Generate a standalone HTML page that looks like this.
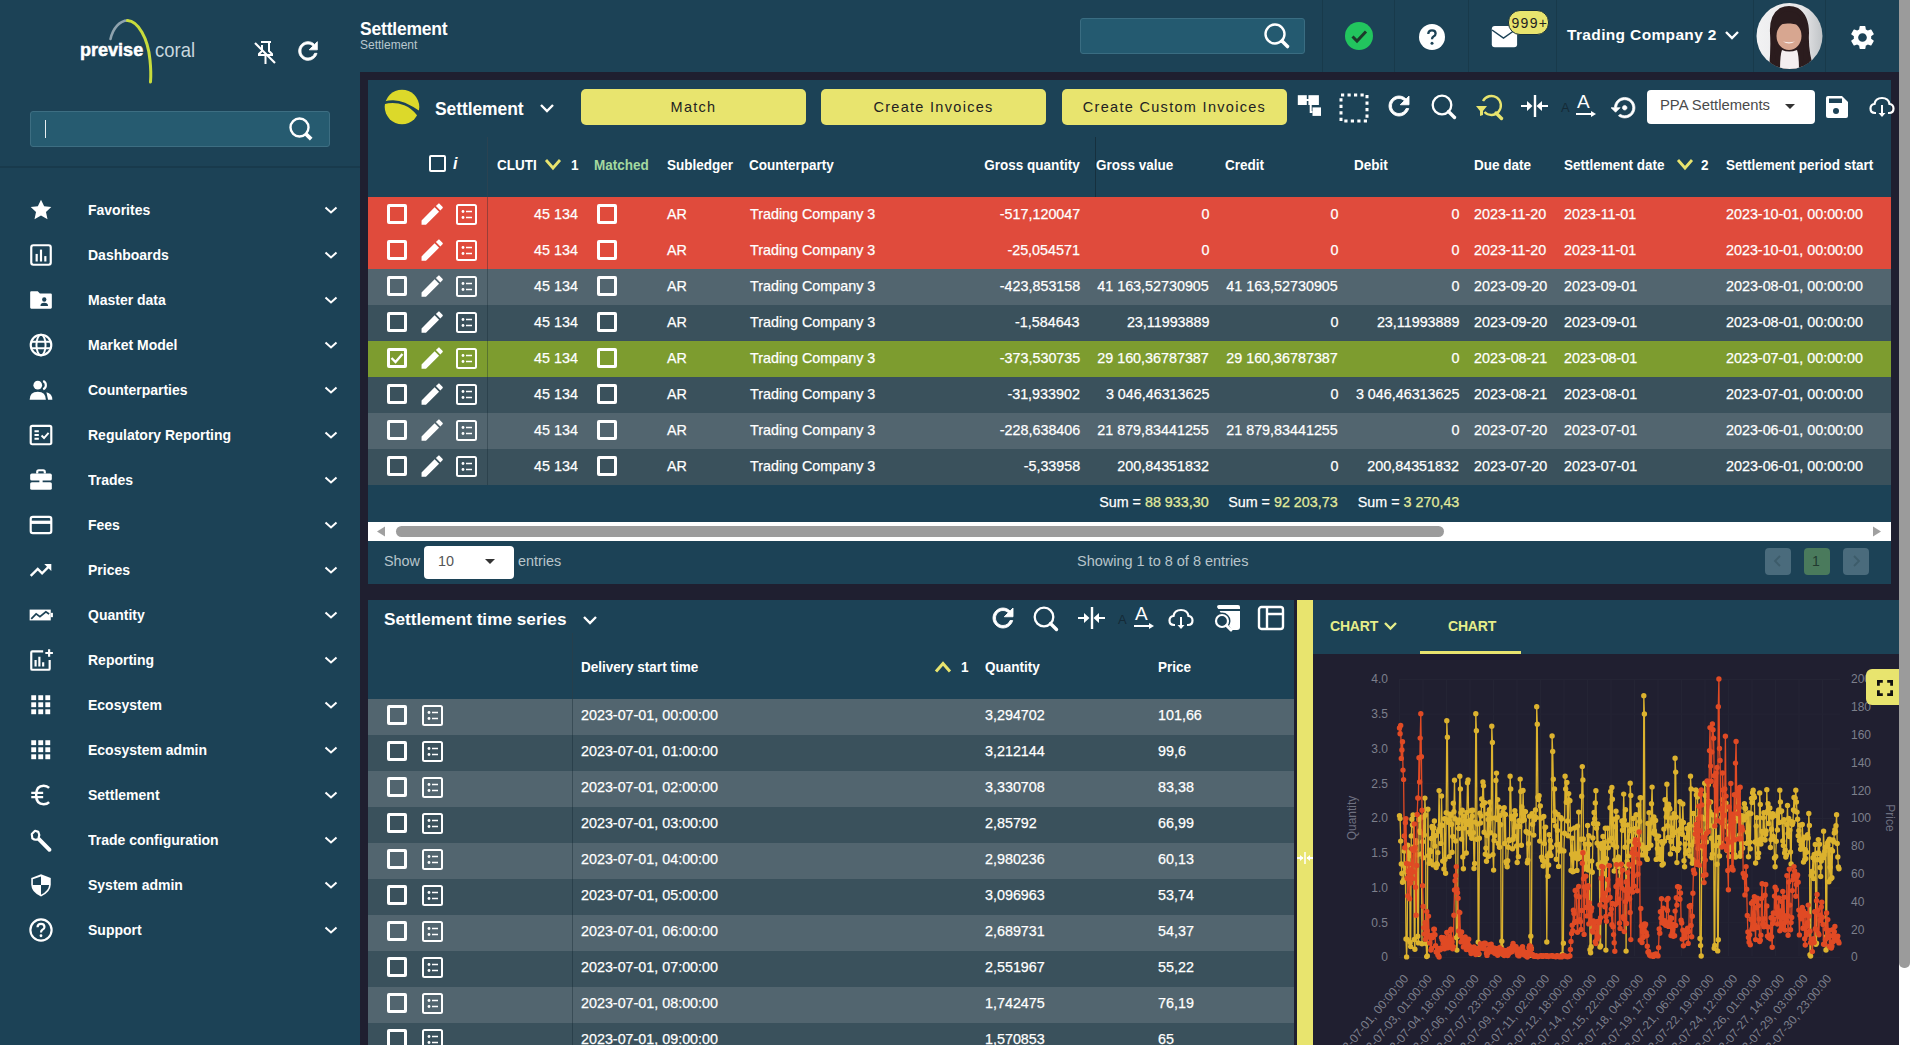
<!DOCTYPE html>
<html><head><meta charset="utf-8"><title>Settlement</title>
<style>
*{margin:0;padding:0;box-sizing:border-box}
html,body{width:1910px;height:1045px;overflow:hidden;background:#1c4256;font-family:"Liberation Sans",sans-serif;color:#fff}
.a{position:absolute}
svg{display:block}
.t{position:absolute;white-space:nowrap;line-height:1}
.r{font-size:15px;transform:scaleX(0.955);transform-origin:0 0;-webkit-text-stroke-width:0.25px}
.rr{font-size:15px;transform:scaleX(0.955);transform-origin:100% 0;-webkit-text-stroke-width:0.25px}
.h{font-size:14.7px;font-weight:bold;transform:scaleX(0.92);transform-origin:0 0}
.hr{font-size:14.7px;font-weight:bold;transform:scaleX(0.92);transform-origin:100% 0}
</style></head>
<body>
<div class="a" style="left:0;top:0;width:360px;height:1045px;background:#1c4256"></div><svg class="a" style="left:60px;top:10px" width="160" height="80" viewBox="0 0 160 80">
<path d="M50.5 29 C53 18 60 10.5 67.5 10.5" stroke="#8fa3ae" stroke-width="2.6" fill="none" stroke-linecap="round"/>
<path d="M67.5 10.5 C78 11 88 28 90 50 C91 60 91 66 90.5 72" stroke="#c8dc3c" stroke-width="3" fill="none" stroke-linecap="round"/>
</svg><div class="t" style="left:80px;top:40.4px;font-size:19.2px;font-weight:bold;color:#fff;transform:scaleX(0.94);transform-origin:0 0;-webkit-text-stroke-width:0.5px">previse</div><div class="t" style="left:154.5px;top:39.6px;font-size:20.3px;font-weight:normal;color:rgba(226,238,242,0.88);transform:scaleX(0.91);transform-origin:0 0">coral</div><svg class="a" style="left:252px;top:40px" width="26" height="26" viewBox="0 0 26 26">
<path d="M9 2 H19 M17 2 V11 L20 14 V15 H7 V14 L10 11 V5" stroke="#fff" stroke-width="2" fill="none"/>
<path d="M13.5 15 V24" stroke="#fff" stroke-width="2"/>
<path d="M3 3 L23 23" stroke="#fff" stroke-width="2.2"/>
</svg><svg class="a" style="left:294px;top:37.2px" width="28" height="28" viewBox="0 0 24 24">
<path fill="#fff" stroke="#fff" stroke-width="0.7" d="M17.65 6.35C16.2 4.9 14.21 4 12 4c-4.42 0-7.99 3.58-7.99 8s3.57 8 7.99 8c3.73 0 6.84-2.55 7.73-6h-2.08c-.82 2.33-3.04 4-5.65 4-3.31 0-6-2.69-6-6s2.69-6 6-6c1.66 0 3.14.69 4.22 1.78L13 11h7V4l-2.35 2.35z"/>
</svg><div class="a" style="left:30px;top:111px;width:300px;height:36px;background:#265b70;border:1px solid #3d6e82;border-radius:3px"></div><div class="a" style="left:44.5px;top:120px;width:1.5px;height:18px;background:#e8eef0"></div><svg class="a" style="left:287px;top:115px" width="28" height="28" viewBox="0 0 28 28">
<circle cx="12.5" cy="12.5" r="9" stroke="#fff" stroke-width="2.4" fill="none"/>
<path d="M18.8 18.8 L24.2 24.2" stroke="#fff" stroke-width="3.8"/>
</svg><div class="a" style="left:0;top:166px;width:360px;height:2px;background:#183a4c"></div><svg class="a" style="left:28px;top:197.0px" width="26" height="26" viewBox="0 0 24 24"><path d="M12 2.5 L14.9 8.6 L21.5 9.3 L16.6 13.8 L18 20.5 L12 17.1 L6 20.5 L7.4 13.8 L2.5 9.3 L9.1 8.6 Z" fill="#fff"/></svg><div class="t" style="left:88px;top:201.9px;font-size:15.3px;font-weight:bold;color:#fff;transform:scaleX(0.915);transform-origin:0 0">Favorites</div><svg class="a" style="left:324px;top:205.5px" width="14" height="9" viewBox="0 0 14 9"><path d="M1.5 1.5 L7 6.5 L12.5 1.5" stroke="#fff" stroke-width="2" fill="none"/></svg><svg class="a" style="left:28px;top:242.0px" width="26" height="26" viewBox="0 0 24 24"><rect x="3" y="3" width="18" height="18" rx="2" stroke="#fff" stroke-width="2" fill="none"/><rect x="7" y="11" width="2" height="7" fill="#fff"/><rect x="11" y="7" width="2" height="11" fill="#fff"/><rect x="15" y="13" width="2" height="5" fill="#fff"/></svg><div class="t" style="left:88px;top:246.9px;font-size:15.3px;font-weight:bold;color:#fff;transform:scaleX(0.915);transform-origin:0 0">Dashboards</div><svg class="a" style="left:324px;top:250.5px" width="14" height="9" viewBox="0 0 14 9"><path d="M1.5 1.5 L7 6.5 L12.5 1.5" stroke="#fff" stroke-width="2" fill="none"/></svg><svg class="a" style="left:28px;top:287.0px" width="26" height="26" viewBox="0 0 24 24"><path d="M2 5 Q2 4 3 4 H9 L11 6 H21 Q22 6 22 7 V19 Q22 20 21 20 H3 Q2 20 2 19 Z" fill="#fff"/><circle cx="15" cy="11.5" r="2" fill="#1c4256"/><path d="M11.5 17.5 Q11.5 14.5 15 14.5 Q18.5 14.5 18.5 17.5 Z" fill="#1c4256"/></svg><div class="t" style="left:88px;top:291.9px;font-size:15.3px;font-weight:bold;color:#fff;transform:scaleX(0.915);transform-origin:0 0">Master data</div><svg class="a" style="left:324px;top:295.5px" width="14" height="9" viewBox="0 0 14 9"><path d="M1.5 1.5 L7 6.5 L12.5 1.5" stroke="#fff" stroke-width="2" fill="none"/></svg><svg class="a" style="left:28px;top:332.0px" width="26" height="26" viewBox="0 0 24 24"><circle cx="12" cy="12" r="9.5" stroke="#fff" stroke-width="2" fill="none"/><ellipse cx="12" cy="12" rx="4.2" ry="9.5" stroke="#fff" stroke-width="1.8" fill="none"/><path d="M2.5 9 H21.5 M2.5 15 H21.5" stroke="#fff" stroke-width="1.8"/></svg><div class="t" style="left:88px;top:336.9px;font-size:15.3px;font-weight:bold;color:#fff;transform:scaleX(0.915);transform-origin:0 0">Market Model</div><svg class="a" style="left:324px;top:340.5px" width="14" height="9" viewBox="0 0 14 9"><path d="M1.5 1.5 L7 6.5 L12.5 1.5" stroke="#fff" stroke-width="2" fill="none"/></svg><svg class="a" style="left:28px;top:377.0px" width="26" height="26" viewBox="0 0 24 24"><circle cx="9" cy="7.5" r="4" fill="#fff"/><path d="M1.5 21 Q1.5 13.5 9 13.5 Q16.5 13.5 16.5 21 Z" fill="#fff"/><path d="M14 3.8 A4 4 0 0 1 14 11.2" stroke="#fff" stroke-width="2" fill="none"/><path d="M17 14 Q22.5 15 22.5 21 H18.5" fill="#fff"/></svg><div class="t" style="left:88px;top:381.9px;font-size:15.3px;font-weight:bold;color:#fff;transform:scaleX(0.915);transform-origin:0 0">Counterparties</div><svg class="a" style="left:324px;top:385.5px" width="14" height="9" viewBox="0 0 14 9"><path d="M1.5 1.5 L7 6.5 L12.5 1.5" stroke="#fff" stroke-width="2" fill="none"/></svg><svg class="a" style="left:28px;top:422.0px" width="26" height="26" viewBox="0 0 24 24"><rect x="2.5" y="3.5" width="19" height="17" rx="1.5" stroke="#fff" stroke-width="2" fill="none"/><path d="M6 8.5 H10 M6 12 H10 M6 15.5 H10" stroke="#fff" stroke-width="1.8"/><path d="M12.5 12.5 L14.8 14.8 L19 10" stroke="#fff" stroke-width="1.8" fill="none"/></svg><div class="t" style="left:88px;top:426.9px;font-size:15.3px;font-weight:bold;color:#fff;transform:scaleX(0.915);transform-origin:0 0">Regulatory Reporting</div><svg class="a" style="left:324px;top:430.5px" width="14" height="9" viewBox="0 0 14 9"><path d="M1.5 1.5 L7 6.5 L12.5 1.5" stroke="#fff" stroke-width="2" fill="none"/></svg><svg class="a" style="left:28px;top:467.0px" width="26" height="26" viewBox="0 0 24 24"><path d="M8.5 6 V4.5 Q8.5 3 10 3 H14 Q15.5 3 15.5 4.5 V6" stroke="#fff" stroke-width="2" fill="none"/><rect x="2" y="6" width="20" height="6.5" rx="1.5" fill="#fff"/><rect x="2" y="14" width="20" height="7" rx="1.5" fill="#fff"/><rect x="10.5" y="11.5" width="3" height="3.5" fill="#fff"/></svg><div class="t" style="left:88px;top:471.9px;font-size:15.3px;font-weight:bold;color:#fff;transform:scaleX(0.915);transform-origin:0 0">Trades</div><svg class="a" style="left:324px;top:475.5px" width="14" height="9" viewBox="0 0 14 9"><path d="M1.5 1.5 L7 6.5 L12.5 1.5" stroke="#fff" stroke-width="2" fill="none"/></svg><svg class="a" style="left:28px;top:512.0px" width="26" height="26" viewBox="0 0 24 24"><rect x="2.5" y="4.5" width="19" height="15" rx="2" stroke="#fff" stroke-width="2" fill="none"/><rect x="2.5" y="8" width="19" height="3" fill="#fff"/></svg><div class="t" style="left:88px;top:516.9px;font-size:15.3px;font-weight:bold;color:#fff;transform:scaleX(0.915);transform-origin:0 0">Fees</div><svg class="a" style="left:324px;top:520.5px" width="14" height="9" viewBox="0 0 14 9"><path d="M1.5 1.5 L7 6.5 L12.5 1.5" stroke="#fff" stroke-width="2" fill="none"/></svg><svg class="a" style="left:28px;top:557.0px" width="26" height="26" viewBox="0 0 24 24"><path d="M2.5 17.5 L9 11 L13 15 L20.5 7.5" stroke="#fff" stroke-width="2.2" fill="none"/><path d="M15 6.5 H21.5 V13 Z" fill="#fff"/></svg><div class="t" style="left:88px;top:561.9px;font-size:15.3px;font-weight:bold;color:#fff;transform:scaleX(0.915);transform-origin:0 0">Prices</div><svg class="a" style="left:324px;top:565.5px" width="14" height="9" viewBox="0 0 14 9"><path d="M1.5 1.5 L7 6.5 L12.5 1.5" stroke="#fff" stroke-width="2" fill="none"/></svg><svg class="a" style="left:28px;top:602.0px" width="26" height="26" viewBox="0 0 24 24"><path d="M1.5 7 H21 V17 H1.5 Z" fill="#fff"/><rect x="21" y="10" width="2" height="4" fill="#fff"/><path d="M3 15.5 L7.5 11 L11 13.5 L16.5 9 L19.5 11" stroke="#1c4256" stroke-width="1.6" fill="none"/></svg><div class="t" style="left:88px;top:606.9px;font-size:15.3px;font-weight:bold;color:#fff;transform:scaleX(0.915);transform-origin:0 0">Quantity</div><svg class="a" style="left:324px;top:610.5px" width="14" height="9" viewBox="0 0 14 9"><path d="M1.5 1.5 L7 6.5 L12.5 1.5" stroke="#fff" stroke-width="2" fill="none"/></svg><svg class="a" style="left:28px;top:647.0px" width="26" height="26" viewBox="0 0 24 24"><path d="M14 4 H4 Q3 4 3 5 V20 Q3 21 4 21 H19 Q20 21 20 20 V12" stroke="#fff" stroke-width="2" fill="none"/><path d="M7 12 V18 M10.5 9 V18 M14 14 V18" stroke="#fff" stroke-width="2"/><path d="M19.5 2 V9 M16 5.5 H23" stroke="#fff" stroke-width="2"/></svg><div class="t" style="left:88px;top:651.9px;font-size:15.3px;font-weight:bold;color:#fff;transform:scaleX(0.915);transform-origin:0 0">Reporting</div><svg class="a" style="left:324px;top:655.5px" width="14" height="9" viewBox="0 0 14 9"><path d="M1.5 1.5 L7 6.5 L12.5 1.5" stroke="#fff" stroke-width="2" fill="none"/></svg><svg class="a" style="left:28px;top:692.0px" width="26" height="26" viewBox="0 0 24 24"><rect x="3.0" y="3.0" width="4.5" height="4.5" fill="#fff"/><rect x="3.0" y="9.5" width="4.5" height="4.5" fill="#fff"/><rect x="3.0" y="16.0" width="4.5" height="4.5" fill="#fff"/><rect x="9.5" y="3.0" width="4.5" height="4.5" fill="#fff"/><rect x="9.5" y="9.5" width="4.5" height="4.5" fill="#fff"/><rect x="9.5" y="16.0" width="4.5" height="4.5" fill="#fff"/><rect x="16.0" y="3.0" width="4.5" height="4.5" fill="#fff"/><rect x="16.0" y="9.5" width="4.5" height="4.5" fill="#fff"/><rect x="16.0" y="16.0" width="4.5" height="4.5" fill="#fff"/></svg><div class="t" style="left:88px;top:696.9px;font-size:15.3px;font-weight:bold;color:#fff;transform:scaleX(0.915);transform-origin:0 0">Ecosystem</div><svg class="a" style="left:324px;top:700.5px" width="14" height="9" viewBox="0 0 14 9"><path d="M1.5 1.5 L7 6.5 L12.5 1.5" stroke="#fff" stroke-width="2" fill="none"/></svg><svg class="a" style="left:28px;top:737.0px" width="26" height="26" viewBox="0 0 24 24"><rect x="3.0" y="3.0" width="4.5" height="4.5" fill="#fff"/><rect x="3.0" y="9.5" width="4.5" height="4.5" fill="#fff"/><rect x="3.0" y="16.0" width="4.5" height="4.5" fill="#fff"/><rect x="9.5" y="3.0" width="4.5" height="4.5" fill="#fff"/><rect x="9.5" y="9.5" width="4.5" height="4.5" fill="#fff"/><rect x="9.5" y="16.0" width="4.5" height="4.5" fill="#fff"/><rect x="16.0" y="3.0" width="4.5" height="4.5" fill="#fff"/><rect x="16.0" y="9.5" width="4.5" height="4.5" fill="#fff"/><rect x="16.0" y="16.0" width="4.5" height="4.5" fill="#fff"/></svg><div class="t" style="left:88px;top:741.9px;font-size:15.3px;font-weight:bold;color:#fff;transform:scaleX(0.915);transform-origin:0 0">Ecosystem admin</div><svg class="a" style="left:324px;top:745.5px" width="14" height="9" viewBox="0 0 14 9"><path d="M1.5 1.5 L7 6.5 L12.5 1.5" stroke="#fff" stroke-width="2" fill="none"/></svg><svg class="a" style="left:28px;top:782.0px" width="26" height="26" viewBox="0 0 24 24"><path d="M19.5 5.5 Q17.5 3.5 14.5 3.5 Q7.5 3.5 7.5 12 Q7.5 20.5 14.5 20.5 Q17.5 20.5 19.5 18.5" stroke="#fff" stroke-width="2.3" fill="none"/><path d="M3 10 H14 M3 14 H14" stroke="#fff" stroke-width="2.2"/></svg><div class="t" style="left:88px;top:786.9px;font-size:15.3px;font-weight:bold;color:#fff;transform:scaleX(0.915);transform-origin:0 0">Settlement</div><svg class="a" style="left:324px;top:790.5px" width="14" height="9" viewBox="0 0 14 9"><path d="M1.5 1.5 L7 6.5 L12.5 1.5" stroke="#fff" stroke-width="2" fill="none"/></svg><svg class="a" style="left:28px;top:827.0px" width="26" height="26" viewBox="0 0 24 24"><path d="M3.5 6.5 L6.5 3.5 L9.5 4.5 Q11 7 9.8 9.8 L20.5 20.5 Q21 22 19.5 21.8 L9 11.3 Q6.5 12.5 4 10.5 Z" stroke="#fff" stroke-width="2" fill="none" stroke-linejoin="round"/></svg><div class="t" style="left:88px;top:831.9px;font-size:15.3px;font-weight:bold;color:#fff;transform:scaleX(0.915);transform-origin:0 0">Trade configuration</div><svg class="a" style="left:324px;top:835.5px" width="14" height="9" viewBox="0 0 14 9"><path d="M1.5 1.5 L7 6.5 L12.5 1.5" stroke="#fff" stroke-width="2" fill="none"/></svg><svg class="a" style="left:28px;top:872.0px" width="26" height="26" viewBox="0 0 24 24"><path d="M12 2 L21 5.5 V11.5 Q21 18.5 12 22.5 Q3 18.5 3 11.5 V5.5 Z" fill="#fff"/><path d="M12 12 H19.5 Q19 17.5 12 21 Z" fill="#1c4256"/><path d="M12 4.2 V12 H4.5 V6.8 Z" fill="#1c4256"/></svg><div class="t" style="left:88px;top:876.9px;font-size:15.3px;font-weight:bold;color:#fff;transform:scaleX(0.915);transform-origin:0 0">System admin</div><svg class="a" style="left:324px;top:880.5px" width="14" height="9" viewBox="0 0 14 9"><path d="M1.5 1.5 L7 6.5 L12.5 1.5" stroke="#fff" stroke-width="2" fill="none"/></svg><svg class="a" style="left:28px;top:917.0px" width="26" height="26" viewBox="0 0 24 24"><circle cx="12" cy="12" r="9.8" stroke="#fff" stroke-width="2" fill="none"/><path d="M8.8 9.5 Q8.8 6.3 12 6.3 Q15.2 6.3 15.2 9.2 Q15.2 11 13.3 11.8 Q12 12.5 12 14.3" stroke="#fff" stroke-width="2" fill="none"/><circle cx="12" cy="17.3" r="1.3" fill="#fff"/></svg><div class="t" style="left:88px;top:921.9px;font-size:15.3px;font-weight:bold;color:#fff;transform:scaleX(0.915);transform-origin:0 0">Support</div><svg class="a" style="left:324px;top:925.5px" width="14" height="9" viewBox="0 0 14 9"><path d="M1.5 1.5 L7 6.5 L12.5 1.5" stroke="#fff" stroke-width="2" fill="none"/></svg><div class="t" style="left:360px;top:20.8px;font-size:17.5px;font-weight:bold;letter-spacing:-0.2px;color:#fff">Settlement</div><div class="t" style="left:360px;top:39.3px;font-size:12px;color:#b9c7ce">Settlement</div><div class="a" style="left:1080px;top:18px;width:225px;height:36px;background:#245a70;border:1px solid #3a6d82;border-radius:3px"></div><svg class="a" style="left:1262px;top:21px" width="30" height="30" viewBox="0 0 30 30">
<circle cx="13" cy="13" r="9.5" stroke="#fff" stroke-width="2.4" fill="none"/>
<path d="M20 20 L25.5 25.5" stroke="#fff" stroke-width="3.6" stroke-linecap="round"/>
</svg><div class="a" style="left:1322px;top:0;width:1px;height:72px;background:#183a4b"></div><div class="a" style="left:1394px;top:0;width:1px;height:72px;background:#183a4b"></div><div class="a" style="left:1468px;top:0;width:1px;height:72px;background:#183a4b"></div><div class="a" style="left:1556px;top:0;width:1px;height:72px;background:#183a4b"></div><div class="a" style="left:1753px;top:0;width:1px;height:72px;background:#183a4b"></div><div class="a" style="left:1825px;top:0;width:1px;height:72px;background:#183a4b"></div><svg class="a" style="left:1344px;top:21px" width="30" height="30" viewBox="0 0 30 30">
<circle cx="15" cy="15" r="14" fill="#22c55e"/>
<path d="M8.5 15.5 L13 20 L22 10.5" stroke="#1c3a2a" stroke-width="3" fill="none"/>
</svg><svg class="a" style="left:1418px;top:23px" width="28" height="28" viewBox="0 0 28 28">
<circle cx="14" cy="14" r="13" fill="#fff"/>
<path d="M10.3 11 Q10.3 7.3 14 7.3 Q17.6 7.3 17.6 10.5 Q17.6 12.5 15.5 13.5 Q14 14.3 14 16.3" stroke="#1c4256" stroke-width="2.3" fill="none"/>
<circle cx="14" cy="20.3" r="1.5" fill="#1c4256"/>
</svg><svg class="a" style="left:1491px;top:25px" width="28" height="24" viewBox="0 0 28 24">
<rect x="0.8" y="1" width="25.3" height="21.2" rx="3" fill="#fff"/>
<path d="M1 5 L12.5 13 L24 5" stroke="#1c4256" stroke-width="1.5" fill="none"/>
</svg><div class="a" style="left:1508px;top:10px;width:41px;height:25px;background:#e8e46e;border:1.2px solid #17303d;border-radius:12px"></div><div class="t" style="left:1511.5px;top:15.5px;font-size:14px;letter-spacing:1.3px;color:#222">999+</div><div class="t" style="left:1567px;top:27px;font-size:15.5px;font-weight:bold;letter-spacing:0.35px;color:#fff">Trading Company 2</div><svg class="a" style="left:1724px;top:30px" width="16" height="11" viewBox="0 0 16 11"><path d="M2 2 L8 8 L14 2" stroke="#fff" stroke-width="2.4" fill="none"/></svg><svg class="a" style="left:1756px;top:3px" width="67" height="67" viewBox="0 0 67 67">
<defs><clipPath id="avc"><circle cx="33.5" cy="33" r="33"/></clipPath>
<linearGradient id="avbg" x1="0" x2="1"><stop offset="0" stop-color="#f2f2f3"/><stop offset="0.7" stop-color="#e6e6e8"/><stop offset="1" stop-color="#bfc3c6"/></linearGradient></defs>
<g clip-path="url(#avc)">
<rect width="67" height="67" fill="url(#avbg)"/>
<path d="M13 66 Q15 45 14 30 Q13 12 24 5 Q33 1 42 5 Q53 12 53 30 Q52 48 58 66 Z" fill="#2b1c1e"/>
<ellipse cx="33" cy="33" rx="12.5" ry="14" fill="#d7a690"/>
<path d="M19 24 Q20 9 33 8 Q46 9 47 24 Q40 20 33 20.5 Q26 20 19 24 Z" fill="#2b1c1e"/>
<path d="M27 38.5 Q33 42.5 39 38.5 Q33 40 27 38.5 Z" fill="#f7f0ee"/>
<path d="M24 67 Q24 52 26 47 Q33 50 41 47 Q43 52 43 67 Z" fill="#f4eef0"/>
<path d="M19 40 Q18 55 22 66 L15 66 Q14 50 17 38 Z M47 40 Q48 55 46 66 L54 66 Q52 50 50 38 Z" fill="#2b1c1e"/>
</g>
</svg><svg class="a" style="left:1847.7px;top:22.6px" width="29" height="29" viewBox="0 0 24 24">
<path fill="#fff" d="M19.14 12.94c.04-.3.06-.61.06-.94 0-.32-.02-.64-.07-.94l2.03-1.58a.49.49 0 0 0 .12-.61l-1.92-3.32a.488.488 0 0 0-.59-.22l-2.39.96c-.5-.38-1.03-.7-1.62-.94l-.36-2.54a.484.484 0 0 0-.48-.41h-3.84c-.24 0-.43.17-.47.41l-.36 2.54c-.59.24-1.13.57-1.62.94l-2.39-.96a.49.49 0 0 0-.59.22L2.74 8.87c-.12.21-.08.47.12.61l2.03 1.58c-.05.3-.09.63-.09.94s.02.64.07.94l-2.03 1.58a.49.49 0 0 0-.12.61l1.92 3.32c.12.22.37.29.59.22l2.39-.96c.5.38 1.03.7 1.62.94l.36 2.54c.05.24.24.41.48.41h3.84c.24 0 .44-.17.47-.41l.36-2.54c.59-.24 1.13-.56 1.62-.94l2.39.96c.22.08.47 0 .59-.22l1.92-3.32c.12-.22.07-.47-.12-.61l-2.01-1.58zM12 15.6c-1.98 0-3.6-1.62-3.6-3.6s1.62-3.6 3.6-3.6 3.6 1.62 3.6 3.6-1.62 3.6-3.6 3.6z"/>
</svg><div class="a" style="left:1899px;top:0;width:11px;height:1045px;background:#ffffff"></div><div class="a" style="left:1899px;top:0;width:11px;height:968px;background:#9b9b9b;border-radius:0 0 5px 5px"></div><div class="a" style="left:360px;top:72px;width:1539px;height:973px;background:#1f1f30"></div><div class="a" style="left:368px;top:80px;width:1523px;height:504px;background:#1c4256"><svg class="a" style="left:16px;top:9px" width="36" height="36" viewBox="0 0 36 36">
<circle cx="18" cy="18" r="17.3" fill="#dcd92a"/>
<path d="M0 12.6 Q11 9.3 21 13.8 Q29 17.5 36.5 22.5 L36.5 31 Q33.5 29 32.8 26 Q28 19.5 20.3 16.2 Q10 12.5 0 15.3 Z" fill="#1c4256"/>
</svg><div class="t" style="left:67px;top:21px;font-size:17.5px;font-weight:bold;letter-spacing:-0.1px">Settlement</div><svg class="a" style="left:171px;top:23px" width="16" height="11" viewBox="0 0 16 11"><path d="M2 2 L8 8 L14 2" stroke="#fff" stroke-width="2.4" fill="none"/></svg><div class="a" style="left:213px;top:9px;width:225px;height:36px;background:#e8e46e;border-radius:5px;color:#222;font-size:14.5px;letter-spacing:1.3px;text-align:center;line-height:36px">Match</div><div class="a" style="left:453px;top:9px;width:225px;height:36px;background:#e8e46e;border-radius:5px;color:#222;font-size:14.5px;letter-spacing:1.3px;text-align:center;line-height:36px">Create Invoices</div><div class="a" style="left:694px;top:9px;width:225px;height:36px;background:#e8e46e;border-radius:5px;color:#222;font-size:14.5px;letter-spacing:1.3px;text-align:center;line-height:36px">Create Custom Invoices</div><svg class="a" style="left:929px;top:14px" width="26" height="26" viewBox="0 0 26 26"><rect x="0.8" y="1.2" width="9" height="9.8" fill="#fff"/><rect x="11.4" y="1.2" width="10.5" height="9.8" fill="#fff"/><rect x="9" y="5" width="3" height="2" fill="#fff"/><path d="M13.7 11 V18 H15.5" stroke="#fff" stroke-width="2" fill="none"/><rect x="15.5" y="13.4" width="8.5" height="8.5" fill="#fff"/></svg><svg class="a" style="left:970px;top:12px" width="32" height="32" viewBox="0 0 32 32"><rect x="3" y="3" width="26" height="26" stroke="#fff" stroke-width="3" fill="none" stroke-dasharray="3.2 3.3"/></svg><svg class="a" style="left:1016px;top:11px" width="30" height="30" viewBox="0 0 24 24"><path fill="#fff" stroke="#fff" stroke-width="0.7" d="M17.65 6.35C16.2 4.9 14.21 4 12 4c-4.42 0-7.99 3.58-7.99 8s3.57 8 7.99 8c3.73 0 6.84-2.55 7.73-6h-2.08c-.82 2.33-3.04 4-5.65 4-3.31 0-6-2.69-6-6s2.69-6 6-6c1.66 0 3.14.69 4.22 1.78L13 11h7V4l-2.35 2.35z"/></svg><svg class="a" style="left:1062px;top:13px" width="28" height="28" viewBox="0 0 28 28"><circle cx="12" cy="12" r="9.3" stroke="#fff" stroke-width="2.3" fill="none"/><path d="M18.5 18.5 L24.5 24.5" stroke="#fff" stroke-width="3.4" stroke-linecap="round"/></svg><svg class="a" style="left:1107px;top:13px" width="30" height="28" viewBox="0 0 30 28"><path d="M8 8 A9.5 9.5 0 1 1 9.5 19" stroke="#e8e46e" stroke-width="2.4" fill="none"/><path d="M21 20 L26.5 25.5" stroke="#e8e46e" stroke-width="3.4" stroke-linecap="round"/><path d="M1 13 H12 L8 18 V22 L5 23 V18 Z" fill="#e8e46e"/></svg><svg class="a" style="left:1152px;top:14px" width="30" height="24" viewBox="0 0 30 24"><path d="M15 1 V23" stroke="#fff" stroke-width="2.4"/><path d="M1 12 H9 M19 12 H28" stroke="#fff" stroke-width="2.2"/><path d="M7 7 L12.5 12 L7 17 Z M22 7 L16.5 12 L22 17 Z" fill="#fff"/></svg><svg class="a" style="left:1192px;top:16px" width="14" height="20" viewBox="0 0 14 20"><text x="1" y="16" font-family="Liberation Sans" font-size="13" fill="#152a36">A</text></svg><svg class="a" style="left:1207px;top:11px" width="22" height="28" viewBox="0 0 22 28"><text x="2" y="17" font-family="Liberation Sans" font-size="19" fill="#fff">A</text><path d="M1 23 H19" stroke="#fff" stroke-width="2"/><path d="M16 20 L21 23 L16 26 Z" fill="#fff"/></svg><svg class="a" style="left:1243px;top:13.5px" width="27.4" height="27.4" viewBox="0 0 24 24"><g><path fill="#fff" stroke="#fff" stroke-width="0.6" d="M14 12c0-1.1-.9-2-2-2s-2 .9-2 2 .9 2 2 2 2-.9 2-2zm-2-9c-4.97 0-9 4.03-9 9H0l4 4 4-4H5c0-3.87 3.13-7 7-7s7 3.13 7 7-3.13 7-7 7c-1.51 0-2.91-.49-4.06-1.3l-1.42 1.44C8.04 20.3 9.94 21 12 21c4.97 0 9-4.03 9-9s-4.03-9-9-9z"/></g></svg><div class="a" style="left:1279px;top:10px;width:168px;height:34px;background:#fff;border-radius:4px"></div><div class="t" style="left:1292px;top:18px;font-size:14.8px;color:#4a4a4a">PPA Settlements</div><svg class="a" style="left:1416px;top:23px" width="12" height="7" viewBox="0 0 12 7"><path d="M1 1 H11 L6 6 Z" fill="#333"/></svg><svg class="a" style="left:1457px;top:15px" width="24" height="24" viewBox="0 0 24 24"><path d="M1 3 Q1 1 3 1 H17 L23 7 V21 Q23 23 21 23 H3 Q1 23 1 21 Z" fill="#fff"/><rect x="4" y="3.5" width="13" height="4.5" fill="#1c4256"/><circle cx="11" cy="16" r="3" fill="#1c4256"/></svg><svg class="a" style="left:1501px;top:14px" width="26" height="26" viewBox="0 0 26 26"><path d="M7 19 H6 Q1.5 19 1.5 14.5 Q1.5 10.5 5.5 10 Q6.5 4 13 4 Q19.5 4 20.5 10 Q24.5 10.5 24.5 14.5 Q24.5 19 20 19 H19" stroke="#fff" stroke-width="2.2" fill="none"/><path d="M13 11 V22" stroke="#fff" stroke-width="2"/><path d="M9.5 19 L13 23 L16.5 19 Z" fill="#fff"/></svg><div class="a" style="left:119px;top:57px;width:1px;height:348px;background:#2a4352"></div><div class="a" style="left:727px;top:57px;width:1px;height:60px;background:#16303e"></div><div class="a" style="left:61px;top:75px;width:17px;height:17px;border:2px solid #fff;border-radius:2px"></div><div class="t" style="left:85px;top:76px;font-size:16px;font-weight:bold;font-style:italic">i</div><div class="t h" style="left:129px;top:77.69999999999999px;color:#fff">CLUTI</div><svg class="a" style="left:176px;top:78px" width="18" height="13" viewBox="0 0 18 13"><path d="M2 2 L9 10 L16 2" stroke="#e8e46e" stroke-width="2.8" fill="none"/></svg><div class="t h" style="left:203px;top:77.69999999999999px;color:#fff">1</div><div class="t h" style="left:226px;top:77.69999999999999px;color:#a3d9a0">Matched</div><div class="t h" style="left:299px;top:77.69999999999999px;color:#fff">Subledger</div><div class="t h" style="left:381px;top:77.69999999999999px;color:#fff">Counterparty</div><div class="t hr" style="right:811px;top:77.69999999999999px;color:#fff">Gross quantity</div><div class="t h" style="left:728px;top:77.69999999999999px;color:#fff">Gross value</div><div class="t h" style="left:857px;top:77.69999999999999px;color:#fff">Credit</div><div class="t h" style="left:986px;top:77.69999999999999px;color:#fff">Debit</div><div class="t h" style="left:1106px;top:77.69999999999999px;color:#fff">Due date</div><div class="t h" style="left:1196px;top:77.69999999999999px;color:#fff">Settlement date</div><svg class="a" style="left:1308px;top:78px" width="18" height="13" viewBox="0 0 18 13"><path d="M2 2 L9 10 L16 2" stroke="#e8e46e" stroke-width="2.8" fill="none"/></svg><div class="t h" style="left:1333px;top:77.69999999999999px;color:#fff">2</div><div class="t h" style="left:1358px;top:77.69999999999999px;color:#fff">Settlement period start</div><div class="a" style="left:0;top:117px;width:1523px;height:36px;background:#e04b3c"></div><div class="a" style="left:19px;top:124px;width:20px;height:20px;border:3px solid #fff;border-radius:2px"></div><svg class="a" style="left:50px;top:120.19999999999999px" width="28.4" height="28.4" viewBox="0 0 24 24"><path fill="#fff" d="M3 17.25V21h3.75L17.81 9.94l-3.75-3.75L3 17.25zM20.71 7.04c.39-.39.39-1.02 0-1.41l-2.34-2.34c-.39-.39-1.02-.39-1.41 0l-1.83 1.83 3.75 3.75 1.83-1.83z"/></svg><svg class="a" style="left:88px;top:124px" width="21" height="21" viewBox="0 0 21 21"><rect x="1" y="1" width="19" height="19" rx="1.5" stroke="#fff" stroke-width="2" fill="none"/><circle cx="7" cy="7.5" r="1.4" fill="#fff"/><circle cx="7" cy="13.5" r="1.4" fill="#fff"/><path d="M10 7.5 H16 M10 13.5 H16" stroke="#fff" stroke-width="1.6"/></svg><div class="t rr" style="right:1313px;top:126.1px;color:#fff">45 134</div><div class="a" style="left:229px;top:124px;width:20px;height:20px;border:3px solid #fff;border-radius:2px"></div><div class="t r" style="left:299px;top:126.1px;color:#fff">AR</div><div class="t r" style="left:382px;top:126.1px;color:#fff">Trading Company 3</div><div class="t rr" style="right:811px;top:126.1px;color:#fff">-517,120047</div><div class="t rr" style="right:682px;top:126.1px;color:#fff">0</div><div class="t rr" style="right:553px;top:126.1px;color:#fff">0</div><div class="t rr" style="right:432px;top:126.1px;color:#fff">0</div><div class="t r" style="left:1106px;top:126.1px;color:#fff">2023-11-20</div><div class="t r" style="left:1196px;top:126.1px;color:#fff">2023-11-01</div><div class="t r" style="left:1358px;top:126.1px;color:#fff">2023-10-01, 00:00:00</div><div class="a" style="left:0;top:153px;width:1523px;height:36px;background:#e04b3c"></div><div class="a" style="left:19px;top:160px;width:20px;height:20px;border:3px solid #fff;border-radius:2px"></div><svg class="a" style="left:50px;top:156.2px" width="28.4" height="28.4" viewBox="0 0 24 24"><path fill="#fff" d="M3 17.25V21h3.75L17.81 9.94l-3.75-3.75L3 17.25zM20.71 7.04c.39-.39.39-1.02 0-1.41l-2.34-2.34c-.39-.39-1.02-.39-1.41 0l-1.83 1.83 3.75 3.75 1.83-1.83z"/></svg><svg class="a" style="left:88px;top:160px" width="21" height="21" viewBox="0 0 21 21"><rect x="1" y="1" width="19" height="19" rx="1.5" stroke="#fff" stroke-width="2" fill="none"/><circle cx="7" cy="7.5" r="1.4" fill="#fff"/><circle cx="7" cy="13.5" r="1.4" fill="#fff"/><path d="M10 7.5 H16 M10 13.5 H16" stroke="#fff" stroke-width="1.6"/></svg><div class="t rr" style="right:1313px;top:162.1px;color:#fff">45 134</div><div class="a" style="left:229px;top:160px;width:20px;height:20px;border:3px solid #fff;border-radius:2px"></div><div class="t r" style="left:299px;top:162.1px;color:#fff">AR</div><div class="t r" style="left:382px;top:162.1px;color:#fff">Trading Company 3</div><div class="t rr" style="right:811px;top:162.1px;color:#fff">-25,054571</div><div class="t rr" style="right:682px;top:162.1px;color:#fff">0</div><div class="t rr" style="right:553px;top:162.1px;color:#fff">0</div><div class="t rr" style="right:432px;top:162.1px;color:#fff">0</div><div class="t r" style="left:1106px;top:162.1px;color:#fff">2023-11-20</div><div class="t r" style="left:1196px;top:162.1px;color:#fff">2023-11-01</div><div class="t r" style="left:1358px;top:162.1px;color:#fff">2023-10-01, 00:00:00</div><div class="a" style="left:0;top:189px;width:1523px;height:36px;background:#52656f"></div><div class="a" style="left:19px;top:196px;width:20px;height:20px;border:3px solid #fff;border-radius:2px"></div><svg class="a" style="left:50px;top:192.2px" width="28.4" height="28.4" viewBox="0 0 24 24"><path fill="#fff" d="M3 17.25V21h3.75L17.81 9.94l-3.75-3.75L3 17.25zM20.71 7.04c.39-.39.39-1.02 0-1.41l-2.34-2.34c-.39-.39-1.02-.39-1.41 0l-1.83 1.83 3.75 3.75 1.83-1.83z"/></svg><svg class="a" style="left:88px;top:196px" width="21" height="21" viewBox="0 0 21 21"><rect x="1" y="1" width="19" height="19" rx="1.5" stroke="#fff" stroke-width="2" fill="none"/><circle cx="7" cy="7.5" r="1.4" fill="#fff"/><circle cx="7" cy="13.5" r="1.4" fill="#fff"/><path d="M10 7.5 H16 M10 13.5 H16" stroke="#fff" stroke-width="1.6"/></svg><div class="t rr" style="right:1313px;top:198.10000000000002px;color:#fff">45 134</div><div class="a" style="left:229px;top:196px;width:20px;height:20px;border:3px solid #fff;border-radius:2px"></div><div class="t r" style="left:299px;top:198.10000000000002px;color:#fff">AR</div><div class="t r" style="left:382px;top:198.10000000000002px;color:#fff">Trading Company 3</div><div class="t rr" style="right:811px;top:198.10000000000002px;color:#fff">-423,853158</div><div class="t rr" style="right:682px;top:198.10000000000002px;color:#fff">41 163,52730905</div><div class="t rr" style="right:553px;top:198.10000000000002px;color:#fff">41 163,52730905</div><div class="t rr" style="right:432px;top:198.10000000000002px;color:#fff">0</div><div class="t r" style="left:1106px;top:198.10000000000002px;color:#fff">2023-09-20</div><div class="t r" style="left:1196px;top:198.10000000000002px;color:#fff">2023-09-01</div><div class="t r" style="left:1358px;top:198.10000000000002px;color:#fff">2023-08-01, 00:00:00</div><div class="a" style="left:0;top:225px;width:1523px;height:36px;background:#3a515c"></div><div class="a" style="left:19px;top:232px;width:20px;height:20px;border:3px solid #fff;border-radius:2px"></div><svg class="a" style="left:50px;top:228.2px" width="28.4" height="28.4" viewBox="0 0 24 24"><path fill="#fff" d="M3 17.25V21h3.75L17.81 9.94l-3.75-3.75L3 17.25zM20.71 7.04c.39-.39.39-1.02 0-1.41l-2.34-2.34c-.39-.39-1.02-.39-1.41 0l-1.83 1.83 3.75 3.75 1.83-1.83z"/></svg><svg class="a" style="left:88px;top:232px" width="21" height="21" viewBox="0 0 21 21"><rect x="1" y="1" width="19" height="19" rx="1.5" stroke="#fff" stroke-width="2" fill="none"/><circle cx="7" cy="7.5" r="1.4" fill="#fff"/><circle cx="7" cy="13.5" r="1.4" fill="#fff"/><path d="M10 7.5 H16 M10 13.5 H16" stroke="#fff" stroke-width="1.6"/></svg><div class="t rr" style="right:1313px;top:234.10000000000002px;color:#fff">45 134</div><div class="a" style="left:229px;top:232px;width:20px;height:20px;border:3px solid #fff;border-radius:2px"></div><div class="t r" style="left:299px;top:234.10000000000002px;color:#fff">AR</div><div class="t r" style="left:382px;top:234.10000000000002px;color:#fff">Trading Company 3</div><div class="t rr" style="right:811px;top:234.10000000000002px;color:#fff">-1,584643</div><div class="t rr" style="right:682px;top:234.10000000000002px;color:#fff">23,11993889</div><div class="t rr" style="right:553px;top:234.10000000000002px;color:#fff">0</div><div class="t rr" style="right:432px;top:234.10000000000002px;color:#fff">23,11993889</div><div class="t r" style="left:1106px;top:234.10000000000002px;color:#fff">2023-09-20</div><div class="t r" style="left:1196px;top:234.10000000000002px;color:#fff">2023-09-01</div><div class="t r" style="left:1358px;top:234.10000000000002px;color:#fff">2023-08-01, 00:00:00</div><div class="a" style="left:0;top:261px;width:1523px;height:36px;background:#7d9c2f"></div><div class="a" style="left:19px;top:268px;width:20px;height:20px;border:3px solid #fff;border-radius:2px"></div><svg class="a" style="left:21px;top:270px" width="16" height="16" viewBox="0 0 16 16"><path d="M2.5 8 L6.5 12 L13.5 4" stroke="#fff" stroke-width="2.4" fill="none"/></svg><svg class="a" style="left:50px;top:264.2px" width="28.4" height="28.4" viewBox="0 0 24 24"><path fill="#fff" d="M3 17.25V21h3.75L17.81 9.94l-3.75-3.75L3 17.25zM20.71 7.04c.39-.39.39-1.02 0-1.41l-2.34-2.34c-.39-.39-1.02-.39-1.41 0l-1.83 1.83 3.75 3.75 1.83-1.83z"/></svg><svg class="a" style="left:88px;top:268px" width="21" height="21" viewBox="0 0 21 21"><rect x="1" y="1" width="19" height="19" rx="1.5" stroke="#fff" stroke-width="2" fill="none"/><circle cx="7" cy="7.5" r="1.4" fill="#fff"/><circle cx="7" cy="13.5" r="1.4" fill="#fff"/><path d="M10 7.5 H16 M10 13.5 H16" stroke="#fff" stroke-width="1.6"/></svg><div class="t rr" style="right:1313px;top:270.1px;color:#fff">45 134</div><div class="a" style="left:229px;top:268px;width:20px;height:20px;border:3px solid #fff;border-radius:2px"></div><div class="t r" style="left:299px;top:270.1px;color:#fff">AR</div><div class="t r" style="left:382px;top:270.1px;color:#fff">Trading Company 3</div><div class="t rr" style="right:811px;top:270.1px;color:#fff">-373,530735</div><div class="t rr" style="right:682px;top:270.1px;color:#fff">29 160,36787387</div><div class="t rr" style="right:553px;top:270.1px;color:#fff">29 160,36787387</div><div class="t rr" style="right:432px;top:270.1px;color:#fff">0</div><div class="t r" style="left:1106px;top:270.1px;color:#fff">2023-08-21</div><div class="t r" style="left:1196px;top:270.1px;color:#fff">2023-08-01</div><div class="t r" style="left:1358px;top:270.1px;color:#fff">2023-07-01, 00:00:00</div><div class="a" style="left:0;top:297px;width:1523px;height:36px;background:#3a515c"></div><div class="a" style="left:19px;top:304px;width:20px;height:20px;border:3px solid #fff;border-radius:2px"></div><svg class="a" style="left:50px;top:300.2px" width="28.4" height="28.4" viewBox="0 0 24 24"><path fill="#fff" d="M3 17.25V21h3.75L17.81 9.94l-3.75-3.75L3 17.25zM20.71 7.04c.39-.39.39-1.02 0-1.41l-2.34-2.34c-.39-.39-1.02-.39-1.41 0l-1.83 1.83 3.75 3.75 1.83-1.83z"/></svg><svg class="a" style="left:88px;top:304px" width="21" height="21" viewBox="0 0 21 21"><rect x="1" y="1" width="19" height="19" rx="1.5" stroke="#fff" stroke-width="2" fill="none"/><circle cx="7" cy="7.5" r="1.4" fill="#fff"/><circle cx="7" cy="13.5" r="1.4" fill="#fff"/><path d="M10 7.5 H16 M10 13.5 H16" stroke="#fff" stroke-width="1.6"/></svg><div class="t rr" style="right:1313px;top:306.1px;color:#fff">45 134</div><div class="a" style="left:229px;top:304px;width:20px;height:20px;border:3px solid #fff;border-radius:2px"></div><div class="t r" style="left:299px;top:306.1px;color:#fff">AR</div><div class="t r" style="left:382px;top:306.1px;color:#fff">Trading Company 3</div><div class="t rr" style="right:811px;top:306.1px;color:#fff">-31,933902</div><div class="t rr" style="right:682px;top:306.1px;color:#fff">3 046,46313625</div><div class="t rr" style="right:553px;top:306.1px;color:#fff">0</div><div class="t rr" style="right:432px;top:306.1px;color:#fff">3 046,46313625</div><div class="t r" style="left:1106px;top:306.1px;color:#fff">2023-08-21</div><div class="t r" style="left:1196px;top:306.1px;color:#fff">2023-08-01</div><div class="t r" style="left:1358px;top:306.1px;color:#fff">2023-07-01, 00:00:00</div><div class="a" style="left:0;top:333px;width:1523px;height:36px;background:#52656f"></div><div class="a" style="left:19px;top:340px;width:20px;height:20px;border:3px solid #fff;border-radius:2px"></div><svg class="a" style="left:50px;top:336.2px" width="28.4" height="28.4" viewBox="0 0 24 24"><path fill="#fff" d="M3 17.25V21h3.75L17.81 9.94l-3.75-3.75L3 17.25zM20.71 7.04c.39-.39.39-1.02 0-1.41l-2.34-2.34c-.39-.39-1.02-.39-1.41 0l-1.83 1.83 3.75 3.75 1.83-1.83z"/></svg><svg class="a" style="left:88px;top:340px" width="21" height="21" viewBox="0 0 21 21"><rect x="1" y="1" width="19" height="19" rx="1.5" stroke="#fff" stroke-width="2" fill="none"/><circle cx="7" cy="7.5" r="1.4" fill="#fff"/><circle cx="7" cy="13.5" r="1.4" fill="#fff"/><path d="M10 7.5 H16 M10 13.5 H16" stroke="#fff" stroke-width="1.6"/></svg><div class="t rr" style="right:1313px;top:342.1px;color:#fff">45 134</div><div class="a" style="left:229px;top:340px;width:20px;height:20px;border:3px solid #fff;border-radius:2px"></div><div class="t r" style="left:299px;top:342.1px;color:#fff">AR</div><div class="t r" style="left:382px;top:342.1px;color:#fff">Trading Company 3</div><div class="t rr" style="right:811px;top:342.1px;color:#fff">-228,638406</div><div class="t rr" style="right:682px;top:342.1px;color:#fff">21 879,83441255</div><div class="t rr" style="right:553px;top:342.1px;color:#fff">21 879,83441255</div><div class="t rr" style="right:432px;top:342.1px;color:#fff">0</div><div class="t r" style="left:1106px;top:342.1px;color:#fff">2023-07-20</div><div class="t r" style="left:1196px;top:342.1px;color:#fff">2023-07-01</div><div class="t r" style="left:1358px;top:342.1px;color:#fff">2023-06-01, 00:00:00</div><div class="a" style="left:0;top:369px;width:1523px;height:36px;background:#3a515c"></div><div class="a" style="left:19px;top:376px;width:20px;height:20px;border:3px solid #fff;border-radius:2px"></div><svg class="a" style="left:50px;top:372.2px" width="28.4" height="28.4" viewBox="0 0 24 24"><path fill="#fff" d="M3 17.25V21h3.75L17.81 9.94l-3.75-3.75L3 17.25zM20.71 7.04c.39-.39.39-1.02 0-1.41l-2.34-2.34c-.39-.39-1.02-.39-1.41 0l-1.83 1.83 3.75 3.75 1.83-1.83z"/></svg><svg class="a" style="left:88px;top:376px" width="21" height="21" viewBox="0 0 21 21"><rect x="1" y="1" width="19" height="19" rx="1.5" stroke="#fff" stroke-width="2" fill="none"/><circle cx="7" cy="7.5" r="1.4" fill="#fff"/><circle cx="7" cy="13.5" r="1.4" fill="#fff"/><path d="M10 7.5 H16 M10 13.5 H16" stroke="#fff" stroke-width="1.6"/></svg><div class="t rr" style="right:1313px;top:378.1px;color:#fff">45 134</div><div class="a" style="left:229px;top:376px;width:20px;height:20px;border:3px solid #fff;border-radius:2px"></div><div class="t r" style="left:299px;top:378.1px;color:#fff">AR</div><div class="t r" style="left:382px;top:378.1px;color:#fff">Trading Company 3</div><div class="t rr" style="right:811px;top:378.1px;color:#fff">-5,33958</div><div class="t rr" style="right:682px;top:378.1px;color:#fff">200,84351832</div><div class="t rr" style="right:553px;top:378.1px;color:#fff">0</div><div class="t rr" style="right:432px;top:378.1px;color:#fff">200,84351832</div><div class="t r" style="left:1106px;top:378.1px;color:#fff">2023-07-20</div><div class="t r" style="left:1196px;top:378.1px;color:#fff">2023-07-01</div><div class="t r" style="left:1358px;top:378.1px;color:#fff">2023-06-01, 00:00:00</div><div class="a" style="left:119px;top:117px;width:1px;height:288px;background:rgba(20,40,50,0.35)"></div><div class="t rr" style="right:682px;top:414.1px;color:#fff">Sum = <span style="color:#e2ea9c">88 933,30</span></div><div class="t rr" style="right:553px;top:414.1px;color:#fff">Sum = <span style="color:#e2ea9c">92 203,73</span></div><div class="t rr" style="right:432px;top:414.1px;color:#fff">Sum = <span style="color:#e2ea9c">3 270,43</span></div><div class="a" style="left:0;top:442px;width:1523px;height:19px;background:#fff"></div><svg class="a" style="left:8px;top:446px" width="10" height="11" viewBox="0 0 10 11"><path d="M9 0.5 V10.5 L1 5.5 Z" fill="#a0a0a0"/></svg><svg class="a" style="left:1504px;top:446px" width="10" height="11" viewBox="0 0 10 11"><path d="M1 0.5 V10.5 L9 5.5 Z" fill="#a0a0a0"/></svg><div class="a" style="left:28px;top:446px;width:1048px;height:11px;background:#9c9c9c;border-radius:6px"></div><div class="t" style="left:16px;top:472.5px;font-size:15px;transform:scaleX(0.96);transform-origin:0 0;color:#b8c5cb">Show</div><div class="a" style="left:56px;top:466px;width:90px;height:33px;background:#fff;border-radius:4px"></div><div class="t" style="left:70px;top:472.5px;font-size:15px;transform:scaleX(0.96);transform-origin:0 0;color:#555">10</div><svg class="a" style="left:116px;top:478px" width="12" height="7" viewBox="0 0 12 7"><path d="M1 1 H11 L6 6 Z" fill="#333"/></svg><div class="t" style="left:150px;top:472.5px;font-size:15px;transform:scaleX(0.96);transform-origin:0 0;color:#b8c5cb">entries</div><div class="t" style="left:709px;top:472.5px;font-size:15px;transform:scaleX(0.965);transform-origin:0 0;color:#b8c5cb">Showing 1 to 8 of 8 entries</div><div class="a" style="left:1397px;top:468px;width:26px;height:27px;background:#4a6b7c;border-radius:4px"></div><div class="a" style="left:1436px;top:468px;width:26px;height:27px;background:#4a7a5c;border-radius:4px"></div><div class="a" style="left:1475px;top:468px;width:26px;height:27px;background:#4a6b7c;border-radius:4px"></div><svg class="a" style="left:1404px;top:474px" width="12" height="14" viewBox="0 0 12 14"><path d="M8 2 L3 7 L8 12" stroke="#3d5c6a" stroke-width="1.8" fill="none"/></svg><svg class="a" style="left:1482px;top:474px" width="12" height="14" viewBox="0 0 12 14"><path d="M4 2 L9 7 L4 12" stroke="#3d5c6a" stroke-width="1.8" fill="none"/></svg><div class="t" style="left:1444px;top:474px;font-size:14px;color:#213a30">1</div></div><div class="a" style="left:368px;top:600px;width:926px;height:445px;background:#1c4256;overflow:hidden"><div class="t" style="left:16px;top:11px;font-size:17.2px;font-weight:bold">Settlement time series</div><svg class="a" style="left:214px;top:15px" width="16" height="11" viewBox="0 0 16 11"><path d="M2 2 L8 8 L14 2" stroke="#fff" stroke-width="2.4" fill="none"/></svg><svg class="a" style="left:620px;top:3px" width="30" height="30" viewBox="0 0 24 24"><path fill="#fff" stroke="#fff" stroke-width="0.7" d="M17.65 6.35C16.2 4.9 14.21 4 12 4c-4.42 0-7.99 3.58-7.99 8s3.57 8 7.99 8c3.73 0 6.84-2.55 7.73-6h-2.08c-.82 2.33-3.04 4-5.65 4-3.31 0-6-2.69-6-6s2.69-6 6-6c1.66 0 3.14.69 4.22 1.78L13 11h7V4l-2.35 2.35z"/></svg><svg class="a" style="left:664px;top:5px" width="28" height="28" viewBox="0 0 28 28"><circle cx="12" cy="12" r="9.3" stroke="#fff" stroke-width="2.3" fill="none"/><path d="M18.5 18.5 L24.5 24.5" stroke="#fff" stroke-width="3.4" stroke-linecap="round"/></svg><svg class="a" style="left:709px;top:6px" width="30" height="24" viewBox="0 0 30 24"><path d="M15 1 V23" stroke="#fff" stroke-width="2.4"/><path d="M1 12 H9 M19 12 H28" stroke="#fff" stroke-width="2.2"/><path d="M7 7 L12.5 12 L7 17 Z M22 7 L16.5 12 L22 17 Z" fill="#fff"/></svg><svg class="a" style="left:749px;top:8px" width="14" height="20" viewBox="0 0 14 20"><text x="1" y="16" font-family="Liberation Sans" font-size="13" fill="#152a36">A</text></svg><svg class="a" style="left:765px;top:3px" width="22" height="28" viewBox="0 0 22 28"><text x="2" y="17" font-family="Liberation Sans" font-size="19" fill="#fff">A</text><path d="M1 23 H19" stroke="#fff" stroke-width="2"/><path d="M16 20 L21 23 L16 26 Z" fill="#fff"/></svg><svg class="a" style="left:800px;top:6px" width="26" height="26" viewBox="0 0 26 26"><path d="M7 19 H6 Q1.5 19 1.5 14.5 Q1.5 10.5 5.5 10 Q6.5 4 13 4 Q19.5 4 20.5 10 Q24.5 10.5 24.5 14.5 Q24.5 19 20 19 H19" stroke="#fff" stroke-width="2.2" fill="none"/><path d="M13 11 V22" stroke="#fff" stroke-width="2"/><path d="M9.5 19 L13 23 L16.5 19 Z" fill="#fff"/></svg><svg class="a" style="left:844px;top:4px" width="30" height="30" viewBox="0 0 30 30"><path d="M5 3 Q5 1 7 1 H26 Q28 1 28 3 V23 Q28 26 25 26 H20 Z" fill="#fff"/><rect x="5" y="5" width="23" height="2" fill="#1c4256"/><circle cx="10" cy="17" r="6.5" stroke="#1c4256" stroke-width="4" fill="#1c4256"/><circle cx="10" cy="17" r="6" stroke="#fff" stroke-width="2.2" fill="#1c4256"/><path d="M14.5 21.5 L19 26" stroke="#fff" stroke-width="3" stroke-linecap="round"/></svg><svg class="a" style="left:889px;top:5px" width="28" height="28" viewBox="0 0 28 28"><rect x="2" y="2" width="24" height="22" rx="2.5" stroke="#fff" stroke-width="2.4" fill="none"/><path d="M10 2 V24 M10 9 H26" stroke="#fff" stroke-width="2.4"/></svg><div class="a" style="left:204px;top:33px;width:1px;height:445px;background:#253f4d"></div><div class="t h" style="left:213px;top:59.5px">Delivery start time</div><svg class="a" style="left:566px;top:60px" width="18" height="13" viewBox="0 0 18 13"><path d="M2 11.5 L9 3.5 L16 11.5" stroke="#e8e46e" stroke-width="3" fill="none"/></svg><div class="t h" style="left:593px;top:59.5px">1</div><div class="t h" style="left:617px;top:59.5px">Quantity</div><div class="t h" style="left:790px;top:59.5px">Price</div><div class="a" style="left:0;top:99px;width:926px;height:36px;background:#52656f"></div><div class="a" style="left:19px;top:105px;width:20px;height:20px;border:3px solid #fff;border-radius:2px"></div><svg class="a" style="left:54px;top:105px" width="21" height="21" viewBox="0 0 21 21"><rect x="1" y="1" width="19" height="19" rx="1.5" stroke="#fff" stroke-width="2" fill="none"/><circle cx="7" cy="7.5" r="1.4" fill="#fff"/><circle cx="7" cy="13.5" r="1.4" fill="#fff"/><path d="M10 7.5 H16 M10 13.5 H16" stroke="#fff" stroke-width="1.6"/></svg><div class="t r" style="left:213px;top:107.29999999999995px">2023-07-01, 00:00:00</div><div class="t r" style="left:617px;top:107.29999999999995px">3,294702</div><div class="t r" style="left:790px;top:107.29999999999995px">101,66</div><div class="a" style="left:0;top:135px;width:926px;height:36px;background:#3a515c"></div><div class="a" style="left:19px;top:141px;width:20px;height:20px;border:3px solid #fff;border-radius:2px"></div><svg class="a" style="left:54px;top:141px" width="21" height="21" viewBox="0 0 21 21"><rect x="1" y="1" width="19" height="19" rx="1.5" stroke="#fff" stroke-width="2" fill="none"/><circle cx="7" cy="7.5" r="1.4" fill="#fff"/><circle cx="7" cy="13.5" r="1.4" fill="#fff"/><path d="M10 7.5 H16 M10 13.5 H16" stroke="#fff" stroke-width="1.6"/></svg><div class="t r" style="left:213px;top:143.29999999999995px">2023-07-01, 01:00:00</div><div class="t r" style="left:617px;top:143.29999999999995px">3,212144</div><div class="t r" style="left:790px;top:143.29999999999995px">99,6</div><div class="a" style="left:0;top:171px;width:926px;height:36px;background:#52656f"></div><div class="a" style="left:19px;top:177px;width:20px;height:20px;border:3px solid #fff;border-radius:2px"></div><svg class="a" style="left:54px;top:177px" width="21" height="21" viewBox="0 0 21 21"><rect x="1" y="1" width="19" height="19" rx="1.5" stroke="#fff" stroke-width="2" fill="none"/><circle cx="7" cy="7.5" r="1.4" fill="#fff"/><circle cx="7" cy="13.5" r="1.4" fill="#fff"/><path d="M10 7.5 H16 M10 13.5 H16" stroke="#fff" stroke-width="1.6"/></svg><div class="t r" style="left:213px;top:179.29999999999995px">2023-07-01, 02:00:00</div><div class="t r" style="left:617px;top:179.29999999999995px">3,330708</div><div class="t r" style="left:790px;top:179.29999999999995px">83,38</div><div class="a" style="left:0;top:207px;width:926px;height:36px;background:#3a515c"></div><div class="a" style="left:19px;top:213px;width:20px;height:20px;border:3px solid #fff;border-radius:2px"></div><svg class="a" style="left:54px;top:213px" width="21" height="21" viewBox="0 0 21 21"><rect x="1" y="1" width="19" height="19" rx="1.5" stroke="#fff" stroke-width="2" fill="none"/><circle cx="7" cy="7.5" r="1.4" fill="#fff"/><circle cx="7" cy="13.5" r="1.4" fill="#fff"/><path d="M10 7.5 H16 M10 13.5 H16" stroke="#fff" stroke-width="1.6"/></svg><div class="t r" style="left:213px;top:215.29999999999995px">2023-07-01, 03:00:00</div><div class="t r" style="left:617px;top:215.29999999999995px">2,85792</div><div class="t r" style="left:790px;top:215.29999999999995px">66,99</div><div class="a" style="left:0;top:243px;width:926px;height:36px;background:#52656f"></div><div class="a" style="left:19px;top:249px;width:20px;height:20px;border:3px solid #fff;border-radius:2px"></div><svg class="a" style="left:54px;top:249px" width="21" height="21" viewBox="0 0 21 21"><rect x="1" y="1" width="19" height="19" rx="1.5" stroke="#fff" stroke-width="2" fill="none"/><circle cx="7" cy="7.5" r="1.4" fill="#fff"/><circle cx="7" cy="13.5" r="1.4" fill="#fff"/><path d="M10 7.5 H16 M10 13.5 H16" stroke="#fff" stroke-width="1.6"/></svg><div class="t r" style="left:213px;top:251.29999999999995px">2023-07-01, 04:00:00</div><div class="t r" style="left:617px;top:251.29999999999995px">2,980236</div><div class="t r" style="left:790px;top:251.29999999999995px">60,13</div><div class="a" style="left:0;top:279px;width:926px;height:36px;background:#3a515c"></div><div class="a" style="left:19px;top:285px;width:20px;height:20px;border:3px solid #fff;border-radius:2px"></div><svg class="a" style="left:54px;top:285px" width="21" height="21" viewBox="0 0 21 21"><rect x="1" y="1" width="19" height="19" rx="1.5" stroke="#fff" stroke-width="2" fill="none"/><circle cx="7" cy="7.5" r="1.4" fill="#fff"/><circle cx="7" cy="13.5" r="1.4" fill="#fff"/><path d="M10 7.5 H16 M10 13.5 H16" stroke="#fff" stroke-width="1.6"/></svg><div class="t r" style="left:213px;top:287.29999999999995px">2023-07-01, 05:00:00</div><div class="t r" style="left:617px;top:287.29999999999995px">3,096963</div><div class="t r" style="left:790px;top:287.29999999999995px">53,74</div><div class="a" style="left:0;top:315px;width:926px;height:36px;background:#52656f"></div><div class="a" style="left:19px;top:321px;width:20px;height:20px;border:3px solid #fff;border-radius:2px"></div><svg class="a" style="left:54px;top:321px" width="21" height="21" viewBox="0 0 21 21"><rect x="1" y="1" width="19" height="19" rx="1.5" stroke="#fff" stroke-width="2" fill="none"/><circle cx="7" cy="7.5" r="1.4" fill="#fff"/><circle cx="7" cy="13.5" r="1.4" fill="#fff"/><path d="M10 7.5 H16 M10 13.5 H16" stroke="#fff" stroke-width="1.6"/></svg><div class="t r" style="left:213px;top:323.29999999999995px">2023-07-01, 06:00:00</div><div class="t r" style="left:617px;top:323.29999999999995px">2,689731</div><div class="t r" style="left:790px;top:323.29999999999995px">54,37</div><div class="a" style="left:0;top:351px;width:926px;height:36px;background:#3a515c"></div><div class="a" style="left:19px;top:357px;width:20px;height:20px;border:3px solid #fff;border-radius:2px"></div><svg class="a" style="left:54px;top:357px" width="21" height="21" viewBox="0 0 21 21"><rect x="1" y="1" width="19" height="19" rx="1.5" stroke="#fff" stroke-width="2" fill="none"/><circle cx="7" cy="7.5" r="1.4" fill="#fff"/><circle cx="7" cy="13.5" r="1.4" fill="#fff"/><path d="M10 7.5 H16 M10 13.5 H16" stroke="#fff" stroke-width="1.6"/></svg><div class="t r" style="left:213px;top:359.29999999999995px">2023-07-01, 07:00:00</div><div class="t r" style="left:617px;top:359.29999999999995px">2,551967</div><div class="t r" style="left:790px;top:359.29999999999995px">55,22</div><div class="a" style="left:0;top:387px;width:926px;height:36px;background:#52656f"></div><div class="a" style="left:19px;top:393px;width:20px;height:20px;border:3px solid #fff;border-radius:2px"></div><svg class="a" style="left:54px;top:393px" width="21" height="21" viewBox="0 0 21 21"><rect x="1" y="1" width="19" height="19" rx="1.5" stroke="#fff" stroke-width="2" fill="none"/><circle cx="7" cy="7.5" r="1.4" fill="#fff"/><circle cx="7" cy="13.5" r="1.4" fill="#fff"/><path d="M10 7.5 H16 M10 13.5 H16" stroke="#fff" stroke-width="1.6"/></svg><div class="t r" style="left:213px;top:395.29999999999995px">2023-07-01, 08:00:00</div><div class="t r" style="left:617px;top:395.29999999999995px">1,742475</div><div class="t r" style="left:790px;top:395.29999999999995px">76,19</div><div class="a" style="left:0;top:423px;width:926px;height:36px;background:#3a515c"></div><div class="a" style="left:19px;top:429px;width:20px;height:20px;border:3px solid #fff;border-radius:2px"></div><svg class="a" style="left:54px;top:429px" width="21" height="21" viewBox="0 0 21 21"><rect x="1" y="1" width="19" height="19" rx="1.5" stroke="#fff" stroke-width="2" fill="none"/><circle cx="7" cy="7.5" r="1.4" fill="#fff"/><circle cx="7" cy="13.5" r="1.4" fill="#fff"/><path d="M10 7.5 H16 M10 13.5 H16" stroke="#fff" stroke-width="1.6"/></svg><div class="t r" style="left:213px;top:431.29999999999995px">2023-07-01, 09:00:00</div><div class="t r" style="left:617px;top:431.29999999999995px">1,570853</div><div class="t r" style="left:790px;top:431.29999999999995px">65</div><div class="a" style="left:204px;top:99px;width:1px;height:445px;background:rgba(20,40,50,0.4)"></div></div><div class="a" style="left:1297px;top:600px;width:16px;height:445px;background:#e8e46e"></div><svg class="a" style="left:1296px;top:851px" width="18" height="14" viewBox="0 0 18 14"><path d="M9 1 V13" stroke="#fff" stroke-width="1.5"/><path d="M1 7 H7 M11 7 H17" stroke="#fff" stroke-width="2"/><path d="M4 4 L7.5 7 L4 10 Z M14 4 L10.5 7 L14 10 Z" fill="#fff"/></svg><div class="a" style="left:1313px;top:600px;width:586px;height:54px;background:#1c4256"></div><div class="t" style="left:1330px;top:619px;font-size:14px;font-weight:bold;color:#e6ee8a;letter-spacing:-0.2px">CHART</div><svg class="a" style="left:1383px;top:621px" width="15" height="10" viewBox="0 0 15 10"><path d="M2 2 L7.5 7.5 L13 2" stroke="#e6ee8a" stroke-width="2.4" fill="none"/></svg><div class="t" style="left:1448px;top:619px;font-size:14px;font-weight:bold;color:#e6ee8a;letter-spacing:-0.2px">CHART</div><div class="a" style="left:1420px;top:651px;width:101px;height:3px;background:#e8e46e"></div><svg class="a" style="left:1313px;top:654px" width="586" height="391" viewBox="1313 654 586 391">
<rect x="1313" y="654" width="586" height="391" fill="#201f30"/>
<g font-family="Liberation Sans"><path d="M1399.5 680 V956" stroke="#242434" stroke-width="1"/><path d="M1423.0 680 V956" stroke="#242434" stroke-width="1"/><path d="M1446.5 680 V956" stroke="#242434" stroke-width="1"/><path d="M1470.0 680 V956" stroke="#242434" stroke-width="1"/><path d="M1493.5 680 V956" stroke="#242434" stroke-width="1"/><path d="M1517.0 680 V956" stroke="#242434" stroke-width="1"/><path d="M1540.5 680 V956" stroke="#242434" stroke-width="1"/><path d="M1564.0 680 V956" stroke="#242434" stroke-width="1"/><path d="M1587.5 680 V956" stroke="#242434" stroke-width="1"/><path d="M1611.0 680 V956" stroke="#242434" stroke-width="1"/><path d="M1634.5 680 V956" stroke="#242434" stroke-width="1"/><path d="M1658.0 680 V956" stroke="#242434" stroke-width="1"/><path d="M1681.5 680 V956" stroke="#242434" stroke-width="1"/><path d="M1705.0 680 V956" stroke="#242434" stroke-width="1"/><path d="M1728.5 680 V956" stroke="#242434" stroke-width="1"/><path d="M1752.0 680 V956" stroke="#242434" stroke-width="1"/><path d="M1775.5 680 V956" stroke="#242434" stroke-width="1"/><path d="M1799.0 680 V956" stroke="#242434" stroke-width="1"/><path d="M1822.5 680 V956" stroke="#242434" stroke-width="1"/><path d="M1399 679.5 H1840" stroke="#242434" stroke-width="1"/><path d="M1399 714.2 H1840" stroke="#242434" stroke-width="1"/><path d="M1399 749.0 H1840" stroke="#242434" stroke-width="1"/><path d="M1399 783.8 H1840" stroke="#242434" stroke-width="1"/><path d="M1399 818.5 H1840" stroke="#242434" stroke-width="1"/><path d="M1399 853.2 H1840" stroke="#242434" stroke-width="1"/><path d="M1399 888.0 H1840" stroke="#242434" stroke-width="1"/><path d="M1399 922.8 H1840" stroke="#242434" stroke-width="1"/><path d="M1399 957.5 H1840" stroke="#242434" stroke-width="1"/><text x="1388" y="683.3" text-anchor="end" font-size="12" fill="#7d7f8c">4.0</text><text x="1388" y="718.0" text-anchor="end" font-size="12" fill="#7d7f8c">3.5</text><text x="1388" y="752.8" text-anchor="end" font-size="12" fill="#7d7f8c">3.0</text><text x="1388" y="787.5" text-anchor="end" font-size="12" fill="#7d7f8c">2.5</text><text x="1388" y="822.3" text-anchor="end" font-size="12" fill="#7d7f8c">2.0</text><text x="1388" y="857.0" text-anchor="end" font-size="12" fill="#7d7f8c">1.5</text><text x="1388" y="891.8" text-anchor="end" font-size="12" fill="#7d7f8c">1.0</text><text x="1388" y="926.5" text-anchor="end" font-size="12" fill="#7d7f8c">0.5</text><text x="1388" y="961.3" text-anchor="end" font-size="12" fill="#7d7f8c">0</text><text x="1851" y="683.3" font-size="12" fill="#7d7f8c">200</text><text x="1851" y="711.1" font-size="12" fill="#7d7f8c">180</text><text x="1851" y="738.9" font-size="12" fill="#7d7f8c">160</text><text x="1851" y="766.7" font-size="12" fill="#7d7f8c">140</text><text x="1851" y="794.5" font-size="12" fill="#7d7f8c">120</text><text x="1851" y="822.3" font-size="12" fill="#7d7f8c">100</text><text x="1851" y="850.1" font-size="12" fill="#7d7f8c">80</text><text x="1851" y="877.9" font-size="12" fill="#7d7f8c">60</text><text x="1851" y="905.7" font-size="12" fill="#7d7f8c">40</text><text x="1851" y="933.5" font-size="12" fill="#7d7f8c">20</text><text x="1851" y="961.3" font-size="12" fill="#7d7f8c">0</text><text transform="translate(1356 818) rotate(-90)" text-anchor="middle" font-size="12" fill="#6e7080">Quantity</text><text transform="translate(1886 818) rotate(90)" text-anchor="middle" font-size="12" fill="#6e7080">Price</text><text transform="translate(1409.0 979) rotate(-50)" text-anchor="end" font-size="12" fill="#7d7f8c">2023-07-01, 00:00:00</text><text transform="translate(1432.5 979) rotate(-50)" text-anchor="end" font-size="12" fill="#7d7f8c">2023-07-03, 01:00:00</text><text transform="translate(1456.0 979) rotate(-50)" text-anchor="end" font-size="12" fill="#7d7f8c">2023-07-04, 18:00:00</text><text transform="translate(1479.5 979) rotate(-50)" text-anchor="end" font-size="12" fill="#7d7f8c">2023-07-06, 10:00:00</text><text transform="translate(1503.0 979) rotate(-50)" text-anchor="end" font-size="12" fill="#7d7f8c">2023-07-07, 23:00:00</text><text transform="translate(1526.5 979) rotate(-50)" text-anchor="end" font-size="12" fill="#7d7f8c">2023-07-09, 13:00:00</text><text transform="translate(1550.0 979) rotate(-50)" text-anchor="end" font-size="12" fill="#7d7f8c">2023-07-11, 02:00:00</text><text transform="translate(1573.5 979) rotate(-50)" text-anchor="end" font-size="12" fill="#7d7f8c">2023-07-12, 18:00:00</text><text transform="translate(1597.0 979) rotate(-50)" text-anchor="end" font-size="12" fill="#7d7f8c">2023-07-14, 07:00:00</text><text transform="translate(1620.5 979) rotate(-50)" text-anchor="end" font-size="12" fill="#7d7f8c">2023-07-15, 22:00:00</text><text transform="translate(1644.0 979) rotate(-50)" text-anchor="end" font-size="12" fill="#7d7f8c">2023-07-18, 04:00:00</text><text transform="translate(1667.5 979) rotate(-50)" text-anchor="end" font-size="12" fill="#7d7f8c">2023-07-19, 17:00:00</text><text transform="translate(1691.0 979) rotate(-50)" text-anchor="end" font-size="12" fill="#7d7f8c">2023-07-21, 06:00:00</text><text transform="translate(1714.5 979) rotate(-50)" text-anchor="end" font-size="12" fill="#7d7f8c">2023-07-22, 19:00:00</text><text transform="translate(1738.0 979) rotate(-50)" text-anchor="end" font-size="12" fill="#7d7f8c">2023-07-24, 12:00:00</text><text transform="translate(1761.5 979) rotate(-50)" text-anchor="end" font-size="12" fill="#7d7f8c">2023-07-26, 01:00:00</text><text transform="translate(1785.0 979) rotate(-50)" text-anchor="end" font-size="12" fill="#7d7f8c">2023-07-27, 14:00:00</text><text transform="translate(1808.5 979) rotate(-50)" text-anchor="end" font-size="12" fill="#7d7f8c">2023-07-29, 03:00:00</text><text transform="translate(1832.0 979) rotate(-50)" text-anchor="end" font-size="12" fill="#7d7f8c">2023-07-30, 23:00:00</text></g>
<polyline points="1399.5,815.7 1400.1,818.6 1400.7,841.1 1401.3,863.9 1401.9,873.4 1402.5,882.3 1403.0,881.4 1403.6,880.2 1404.2,851.1 1404.8,866.6 1405.4,871.4 1406.0,939.0 1406.6,956.9 1407.2,939.5 1407.8,845.3 1408.4,852.4 1409.0,864.5 1409.6,855.7 1410.1,942.5 1410.7,946.6 1411.3,835.9 1411.9,819.3 1412.5,825.0 1413.1,814.9 1413.7,847.0 1414.3,939.5 1414.9,949.2 1415.5,848.7 1416.1,840.6 1416.7,842.4 1417.2,854.9 1417.8,936.2 1418.4,942.9 1419.0,819.4 1419.6,831.0 1420.2,832.6 1420.8,817.2 1421.4,853.9 1422.0,943.7 1422.6,841.8 1423.2,857.8 1423.8,817.3 1424.3,835.0 1424.9,798.1 1425.5,814.9 1426.1,943.5 1426.7,956.6 1427.3,956.0 1427.9,809.3 1428.5,855.8 1429.1,863.2 1429.7,850.1 1430.3,860.8 1430.9,851.5 1431.4,838.4 1432.0,826.5 1432.6,828.2 1433.2,864.9 1433.8,827.9 1434.4,821.0 1435.0,846.1 1435.6,835.7 1436.2,867.6 1436.8,863.8 1437.4,864.6 1437.9,852.6 1438.5,831.3 1439.1,790.6 1439.7,828.7 1440.3,825.3 1440.9,843.4 1441.5,796.0 1442.1,825.4 1442.7,861.1 1443.3,861.0 1443.9,869.0 1444.5,818.7 1445.0,859.4 1445.6,873.3 1446.2,812.8 1446.8,720.7 1447.4,737.2 1448.0,822.2 1448.6,819.7 1449.2,856.6 1449.8,814.1 1450.4,815.0 1451.0,815.3 1451.6,824.4 1452.1,852.2 1452.7,836.4 1453.3,803.2 1453.9,811.7 1454.5,780.2 1455.1,818.7 1455.7,840.9 1456.3,937.6 1456.9,950.1 1457.5,936.5 1458.1,822.8 1458.7,828.4 1459.2,819.9 1459.8,776.3 1460.4,788.9 1461.0,812.8 1461.6,839.1 1462.2,810.2 1462.8,856.9 1463.4,868.7 1464.0,828.1 1464.6,816.5 1465.2,821.0 1465.8,823.5 1466.3,853.0 1466.9,812.5 1467.5,782.7 1468.1,780.0 1468.7,824.4 1469.3,832.2 1469.9,820.2 1470.5,834.5 1471.1,810.4 1471.7,838.2 1472.3,816.1 1472.8,810.3 1473.4,832.6 1474.0,868.5 1474.6,863.5 1475.2,822.1 1475.8,713.8 1476.4,730.8 1477.0,839.2 1477.6,824.0 1478.2,942.1 1478.8,954.3 1479.4,838.2 1479.9,813.2 1480.5,823.0 1481.1,815.9 1481.7,799.0 1482.3,805.3 1482.9,782.0 1483.5,785.7 1484.1,832.2 1484.7,802.8 1485.3,854.3 1485.9,848.1 1486.5,861.2 1487.0,835.5 1487.6,813.9 1488.2,819.4 1488.8,856.3 1489.4,809.7 1490.0,802.3 1490.6,832.8 1491.2,818.3 1491.8,726.3 1492.4,742.4 1493.0,854.6 1493.6,870.1 1494.1,840.4 1494.7,835.7 1495.3,818.0 1495.9,780.4 1496.5,773.1 1497.1,819.5 1497.7,799.6 1498.3,843.4 1498.9,807.1 1499.5,847.3 1500.1,815.6 1500.7,824.8 1501.2,946.9 1501.8,941.2 1502.4,954.0 1503.0,812.1 1503.6,808.1 1504.2,807.8 1504.8,843.5 1505.4,814.4 1506.0,861.6 1506.6,863.6 1507.2,866.8 1507.7,860.7 1508.3,847.3 1508.9,839.8 1509.5,840.5 1510.1,776.3 1510.7,788.9 1511.3,816.1 1511.9,818.7 1512.5,848.7 1513.1,839.3 1513.7,816.2 1514.3,836.3 1514.8,810.6 1515.4,814.8 1516.0,826.7 1516.6,845.9 1517.2,862.5 1517.8,825.7 1518.4,856.8 1519.0,820.7 1519.6,826.4 1520.2,779.1 1520.8,791.5 1521.4,845.3 1521.9,807.0 1522.5,820.8 1523.1,790.5 1523.7,819.1 1524.3,819.9 1524.9,811.5 1525.5,811.6 1526.1,831.5 1526.7,832.2 1527.3,862.7 1527.9,860.1 1528.5,843.6 1529.0,833.2 1529.6,816.3 1530.2,955.2 1530.8,936.2 1531.4,948.7 1532.0,813.6 1532.6,824.2 1533.2,816.0 1533.8,835.1 1534.4,819.8 1535.0,817.0 1535.5,809.9 1536.1,817.4 1536.7,706.8 1537.3,724.3 1537.9,797.2 1538.5,799.5 1539.1,795.8 1539.7,841.1 1540.3,805.9 1540.9,818.3 1541.5,857.1 1542.1,857.7 1542.6,860.2 1543.2,866.0 1543.8,816.5 1544.4,843.6 1545.0,827.4 1545.6,827.1 1546.2,861.8 1546.8,942.0 1547.4,855.8 1548.0,876.3 1548.6,864.9 1549.2,834.8 1549.7,852.6 1550.3,840.8 1550.9,855.5 1551.5,847.3 1552.1,736.0 1552.7,751.5 1553.3,779.2 1553.9,820.5 1554.5,788.9 1555.1,811.9 1555.7,826.0 1556.3,859.2 1556.8,844.7 1557.4,830.5 1558.0,814.5 1558.6,866.4 1559.2,844.5 1559.8,851.0 1560.4,849.3 1561.0,817.7 1561.6,819.1 1562.2,954.4 1562.8,955.0 1563.4,943.3 1563.9,850.9 1564.5,833.3 1565.1,776.3 1565.7,788.9 1566.3,802.3 1566.9,782.4 1567.5,821.0 1568.1,835.7 1568.7,793.6 1569.3,800.1 1569.9,800.8 1570.4,829.3 1571.0,870.4 1571.6,854.3 1572.2,838.3 1572.8,871.7 1573.4,871.5 1574.0,856.4 1574.6,827.9 1575.2,853.7 1575.8,858.1 1576.4,855.0 1577.0,870.4 1577.5,826.1 1578.1,858.7 1578.7,812.1 1579.3,851.9 1579.9,857.4 1580.5,853.6 1581.1,839.3 1581.7,796.2 1582.3,766.6 1582.9,779.9 1583.5,839.0 1584.1,852.0 1584.6,869.1 1585.2,844.1 1585.8,866.5 1586.4,868.5 1587.0,855.1 1587.6,825.5 1588.2,870.0 1588.8,835.7 1589.4,844.5 1590.0,949.8 1590.6,952.8 1591.2,946.7 1591.7,861.1 1592.3,872.2 1592.9,837.9 1593.5,823.5 1594.1,812.5 1594.7,818.9 1595.3,802.9 1595.9,790.7 1596.5,828.3 1597.1,843.2 1597.7,824.0 1598.3,864.5 1598.8,845.8 1599.4,867.4 1600.0,947.1 1600.6,946.0 1601.2,843.8 1601.8,848.6 1602.4,862.2 1603.0,836.4 1603.6,873.8 1604.2,842.8 1604.8,863.8 1605.3,828.3 1605.9,950.1 1606.5,858.8 1607.1,865.1 1607.7,828.2 1608.3,847.7 1608.9,840.4 1609.5,840.7 1610.1,807.8 1610.7,791.4 1611.3,838.3 1611.9,787.4 1612.4,799.3 1613.0,844.8 1613.6,819.2 1614.2,871.0 1614.8,860.1 1615.4,826.7 1616.0,811.3 1616.6,847.0 1617.2,817.2 1617.8,866.4 1618.4,856.9 1619.0,859.4 1619.5,880.7 1620.1,863.6 1620.7,871.7 1621.3,864.4 1621.9,821.0 1622.5,830.2 1623.1,824.8 1623.7,794.1 1624.3,820.3 1624.9,847.2 1625.5,809.7 1626.1,951.1 1626.6,865.8 1627.2,861.1 1627.8,825.0 1628.4,856.0 1629.0,841.2 1629.6,830.8 1630.2,783.2 1630.8,795.4 1631.4,829.2 1632.0,866.3 1632.6,848.6 1633.2,818.4 1633.7,854.8 1634.3,847.4 1634.9,862.1 1635.5,828.5 1636.1,814.7 1636.7,832.8 1637.3,829.7 1637.9,842.7 1638.5,805.0 1639.1,839.5 1639.7,821.5 1640.2,797.8 1640.8,797.8 1641.4,854.9 1642.0,845.0 1642.6,847.1 1643.2,848.7 1643.8,695.7 1644.4,714.0 1645.0,855.2 1645.6,852.3 1646.2,847.7 1646.8,858.4 1647.3,859.4 1647.9,823.5 1648.5,848.3 1649.1,812.6 1649.7,845.8 1650.3,823.1 1650.9,845.3 1651.5,803.8 1652.1,787.1 1652.7,819.0 1653.3,833.1 1653.9,816.9 1654.4,830.8 1655.0,834.3 1655.6,820.4 1656.2,859.4 1656.8,838.7 1657.4,848.6 1658.0,858.7 1658.6,836.1 1659.2,853.2 1659.8,849.1 1660.4,857.3 1661.0,859.4 1661.5,841.6 1662.1,865.0 1662.7,843.4 1663.3,863.7 1663.9,829.1 1664.5,841.2 1665.1,799.7 1665.7,809.3 1666.3,817.0 1666.9,784.3 1667.5,825.8 1668.1,837.4 1668.6,804.3 1669.2,807.6 1669.8,809.0 1670.4,853.9 1671.0,841.5 1671.6,817.9 1672.2,828.3 1672.8,835.5 1673.4,848.4 1674.0,813.6 1674.6,832.5 1675.1,758.2 1675.7,772.1 1676.3,817.3 1676.9,862.6 1677.5,850.4 1678.1,830.8 1678.7,848.6 1679.3,843.5 1679.9,801.8 1680.5,829.0 1681.1,821.3 1681.7,822.4 1682.2,834.2 1682.8,803.9 1683.4,822.4 1684.0,860.8 1684.6,866.8 1685.2,844.2 1685.8,853.3 1686.4,837.7 1687.0,828.4 1687.6,838.1 1688.2,829.2 1688.8,850.4 1689.3,824.7 1689.9,856.0 1690.5,776.3 1691.1,788.9 1691.7,844.9 1692.3,863.2 1692.9,859.6 1693.5,813.5 1694.1,841.6 1694.7,825.7 1695.3,835.8 1695.9,789.9 1696.4,794.9 1697.0,791.2 1697.6,797.1 1698.2,848.4 1698.8,817.3 1699.4,845.8 1700.0,938.5 1700.6,945.6 1701.2,956.0 1701.8,816.9 1702.4,845.4 1703.0,848.6 1703.5,858.6 1704.1,818.8 1704.7,783.2 1705.3,795.4 1705.9,833.1 1706.5,841.9 1707.1,827.6 1707.7,800.9 1708.3,784.8 1708.9,812.9 1709.5,825.3 1710.0,811.6 1710.6,801.9 1711.2,838.2 1711.8,857.8 1712.4,854.3 1713.0,815.0 1713.6,826.4 1714.2,948.2 1714.8,945.4 1715.4,845.6 1716.0,814.5 1716.6,845.7 1717.1,864.2 1717.7,950.9 1718.3,939.7 1718.9,837.4 1719.5,856.0 1720.1,842.5 1720.7,810.3 1721.3,843.3 1721.9,817.4 1722.5,799.8 1723.1,822.5 1723.7,805.1 1724.2,819.8 1724.8,821.0 1725.4,809.9 1726.0,803.1 1726.6,826.7 1727.2,850.5 1727.8,826.3 1728.4,833.7 1729.0,856.4 1729.6,833.3 1730.2,825.6 1730.8,849.6 1731.3,848.1 1731.9,816.7 1732.5,821.7 1733.1,816.5 1733.7,836.1 1734.3,838.8 1734.9,854.9 1735.5,857.1 1736.1,813.5 1736.7,795.3 1737.3,820.7 1737.8,815.8 1738.4,811.7 1739.0,807.8 1739.6,834.9 1740.2,856.2 1740.8,852.5 1741.4,815.8 1742.0,843.2 1742.6,848.2 1743.2,816.3 1743.8,819.9 1744.4,803.8 1744.9,807.9 1745.5,808.5 1746.1,817.2 1746.7,843.2 1747.3,832.3 1747.9,814.3 1748.5,856.7 1749.1,812.9 1749.7,842.2 1750.3,848.7 1750.9,813.6 1751.5,798.4 1752.0,802.6 1752.6,792.8 1753.2,790.3 1753.8,795.8 1754.4,797.5 1755.0,842.0 1755.6,863.0 1756.2,826.1 1756.8,817.6 1757.4,843.7 1758.0,857.6 1758.6,853.3 1759.1,840.3 1759.7,793.0 1760.3,804.5 1760.9,844.1 1761.5,838.9 1762.1,831.4 1762.7,839.2 1763.3,817.8 1763.9,812.7 1764.5,833.3 1765.1,840.0 1765.7,834.3 1766.2,830.9 1766.8,789.8 1767.4,811.4 1768.0,803.8 1768.6,823.5 1769.2,813.3 1769.8,807.9 1770.4,847.5 1771.0,839.6 1771.6,829.2 1772.2,817.3 1772.7,813.7 1773.3,836.1 1773.9,839.2 1774.5,858.0 1775.1,866.7 1775.7,856.5 1776.3,841.3 1776.9,815.7 1777.5,830.0 1778.1,812.4 1778.7,809.9 1779.3,822.5 1779.8,790.2 1780.4,801.9 1781.0,811.5 1781.6,811.0 1782.2,821.9 1782.8,841.0 1783.4,845.6 1784.0,819.8 1784.6,853.0 1785.2,850.0 1785.8,857.0 1786.4,855.3 1786.9,824.5 1787.5,805.4 1788.1,833.6 1788.7,818.5 1789.3,836.5 1789.9,830.1 1790.5,852.0 1791.1,863.9 1791.7,821.8 1792.3,824.5 1792.9,822.3 1793.5,810.0 1794.0,797.4 1794.6,811.1 1795.2,798.2 1795.8,790.2 1796.4,801.9 1797.0,812.1 1797.6,819.3 1798.2,835.7 1798.8,830.6 1799.4,840.5 1800.0,825.2 1800.6,849.2 1801.1,844.7 1801.7,849.0 1802.3,824.5 1802.9,839.4 1803.5,862.1 1804.1,837.3 1804.7,859.7 1805.3,849.6 1805.9,858.6 1806.5,852.2 1807.1,837.6 1807.6,834.6 1808.2,837.9 1808.8,813.5 1809.4,825.4 1810.0,954.7 1810.6,956.0 1811.2,875.4 1811.8,871.4 1812.4,872.2 1813.0,857.7 1813.6,878.6 1814.2,854.5 1814.7,859.9 1815.3,844.4 1815.9,944.3 1816.5,943.3 1817.1,853.2 1817.7,859.6 1818.3,839.6 1818.9,853.2 1819.5,844.2 1820.1,867.4 1820.7,876.5 1821.3,860.9 1821.8,858.2 1822.4,855.6 1823.0,858.1 1823.6,831.2 1824.2,854.9 1824.8,851.5 1825.4,847.1 1826.0,950.0 1826.6,936.5 1827.2,843.2 1827.8,844.7 1828.4,841.1 1828.9,881.8 1829.5,839.3 1830.1,867.3 1830.7,879.1 1831.3,849.6 1831.9,877.7 1832.5,850.9 1833.1,840.0 1833.7,841.7 1834.3,832.9 1834.9,829.6 1835.5,831.8 1836.0,825.7 1836.6,814.7 1837.2,843.5 1837.8,857.0 1838.4,866.9 1839.0,868.8" fill="none" stroke="#dcb22e" stroke-width="1.3" stroke-linejoin="round"/><path d="M1396.8 815.7a2.7 2.7 0 1 0 5.4 0a2.7 2.7 0 1 0 -5.4 0M1397.4 818.6a2.7 2.7 0 1 0 5.4 0a2.7 2.7 0 1 0 -5.4 0M1398.0 841.1a2.7 2.7 0 1 0 5.4 0a2.7 2.7 0 1 0 -5.4 0M1398.6 863.9a2.7 2.7 0 1 0 5.4 0a2.7 2.7 0 1 0 -5.4 0M1399.2 873.4a2.7 2.7 0 1 0 5.4 0a2.7 2.7 0 1 0 -5.4 0M1399.8 882.3a2.7 2.7 0 1 0 5.4 0a2.7 2.7 0 1 0 -5.4 0M1400.3 881.4a2.7 2.7 0 1 0 5.4 0a2.7 2.7 0 1 0 -5.4 0M1400.9 880.2a2.7 2.7 0 1 0 5.4 0a2.7 2.7 0 1 0 -5.4 0M1401.5 851.1a2.7 2.7 0 1 0 5.4 0a2.7 2.7 0 1 0 -5.4 0M1402.1 866.6a2.7 2.7 0 1 0 5.4 0a2.7 2.7 0 1 0 -5.4 0M1402.7 871.4a2.7 2.7 0 1 0 5.4 0a2.7 2.7 0 1 0 -5.4 0M1403.3 939.0a2.7 2.7 0 1 0 5.4 0a2.7 2.7 0 1 0 -5.4 0M1403.9 956.9a2.7 2.7 0 1 0 5.4 0a2.7 2.7 0 1 0 -5.4 0M1404.5 939.5a2.7 2.7 0 1 0 5.4 0a2.7 2.7 0 1 0 -5.4 0M1405.1 845.3a2.7 2.7 0 1 0 5.4 0a2.7 2.7 0 1 0 -5.4 0M1405.7 852.4a2.7 2.7 0 1 0 5.4 0a2.7 2.7 0 1 0 -5.4 0M1406.3 864.5a2.7 2.7 0 1 0 5.4 0a2.7 2.7 0 1 0 -5.4 0M1406.9 855.7a2.7 2.7 0 1 0 5.4 0a2.7 2.7 0 1 0 -5.4 0M1407.4 942.5a2.7 2.7 0 1 0 5.4 0a2.7 2.7 0 1 0 -5.4 0M1408.0 946.6a2.7 2.7 0 1 0 5.4 0a2.7 2.7 0 1 0 -5.4 0M1408.6 835.9a2.7 2.7 0 1 0 5.4 0a2.7 2.7 0 1 0 -5.4 0M1409.2 819.3a2.7 2.7 0 1 0 5.4 0a2.7 2.7 0 1 0 -5.4 0M1409.8 825.0a2.7 2.7 0 1 0 5.4 0a2.7 2.7 0 1 0 -5.4 0M1410.4 814.9a2.7 2.7 0 1 0 5.4 0a2.7 2.7 0 1 0 -5.4 0M1411.0 847.0a2.7 2.7 0 1 0 5.4 0a2.7 2.7 0 1 0 -5.4 0M1411.6 939.5a2.7 2.7 0 1 0 5.4 0a2.7 2.7 0 1 0 -5.4 0M1412.2 949.2a2.7 2.7 0 1 0 5.4 0a2.7 2.7 0 1 0 -5.4 0M1412.8 848.7a2.7 2.7 0 1 0 5.4 0a2.7 2.7 0 1 0 -5.4 0M1413.4 840.6a2.7 2.7 0 1 0 5.4 0a2.7 2.7 0 1 0 -5.4 0M1414.0 842.4a2.7 2.7 0 1 0 5.4 0a2.7 2.7 0 1 0 -5.4 0M1414.5 854.9a2.7 2.7 0 1 0 5.4 0a2.7 2.7 0 1 0 -5.4 0M1415.1 936.2a2.7 2.7 0 1 0 5.4 0a2.7 2.7 0 1 0 -5.4 0M1415.7 942.9a2.7 2.7 0 1 0 5.4 0a2.7 2.7 0 1 0 -5.4 0M1416.3 819.4a2.7 2.7 0 1 0 5.4 0a2.7 2.7 0 1 0 -5.4 0M1416.9 831.0a2.7 2.7 0 1 0 5.4 0a2.7 2.7 0 1 0 -5.4 0M1417.5 832.6a2.7 2.7 0 1 0 5.4 0a2.7 2.7 0 1 0 -5.4 0M1418.1 817.2a2.7 2.7 0 1 0 5.4 0a2.7 2.7 0 1 0 -5.4 0M1418.7 853.9a2.7 2.7 0 1 0 5.4 0a2.7 2.7 0 1 0 -5.4 0M1419.3 943.7a2.7 2.7 0 1 0 5.4 0a2.7 2.7 0 1 0 -5.4 0M1419.9 841.8a2.7 2.7 0 1 0 5.4 0a2.7 2.7 0 1 0 -5.4 0M1420.5 857.8a2.7 2.7 0 1 0 5.4 0a2.7 2.7 0 1 0 -5.4 0M1421.1 817.3a2.7 2.7 0 1 0 5.4 0a2.7 2.7 0 1 0 -5.4 0M1421.6 835.0a2.7 2.7 0 1 0 5.4 0a2.7 2.7 0 1 0 -5.4 0M1422.2 798.1a2.7 2.7 0 1 0 5.4 0a2.7 2.7 0 1 0 -5.4 0M1422.8 814.9a2.7 2.7 0 1 0 5.4 0a2.7 2.7 0 1 0 -5.4 0M1423.4 943.5a2.7 2.7 0 1 0 5.4 0a2.7 2.7 0 1 0 -5.4 0M1424.0 956.6a2.7 2.7 0 1 0 5.4 0a2.7 2.7 0 1 0 -5.4 0M1424.6 956.0a2.7 2.7 0 1 0 5.4 0a2.7 2.7 0 1 0 -5.4 0M1425.2 809.3a2.7 2.7 0 1 0 5.4 0a2.7 2.7 0 1 0 -5.4 0M1425.8 855.8a2.7 2.7 0 1 0 5.4 0a2.7 2.7 0 1 0 -5.4 0M1426.4 863.2a2.7 2.7 0 1 0 5.4 0a2.7 2.7 0 1 0 -5.4 0M1427.0 850.1a2.7 2.7 0 1 0 5.4 0a2.7 2.7 0 1 0 -5.4 0M1427.6 860.8a2.7 2.7 0 1 0 5.4 0a2.7 2.7 0 1 0 -5.4 0M1428.2 851.5a2.7 2.7 0 1 0 5.4 0a2.7 2.7 0 1 0 -5.4 0M1428.7 838.4a2.7 2.7 0 1 0 5.4 0a2.7 2.7 0 1 0 -5.4 0M1429.3 826.5a2.7 2.7 0 1 0 5.4 0a2.7 2.7 0 1 0 -5.4 0M1429.9 828.2a2.7 2.7 0 1 0 5.4 0a2.7 2.7 0 1 0 -5.4 0M1430.5 864.9a2.7 2.7 0 1 0 5.4 0a2.7 2.7 0 1 0 -5.4 0M1431.1 827.9a2.7 2.7 0 1 0 5.4 0a2.7 2.7 0 1 0 -5.4 0M1431.7 821.0a2.7 2.7 0 1 0 5.4 0a2.7 2.7 0 1 0 -5.4 0M1432.3 846.1a2.7 2.7 0 1 0 5.4 0a2.7 2.7 0 1 0 -5.4 0M1432.9 835.7a2.7 2.7 0 1 0 5.4 0a2.7 2.7 0 1 0 -5.4 0M1433.5 867.6a2.7 2.7 0 1 0 5.4 0a2.7 2.7 0 1 0 -5.4 0M1434.1 863.8a2.7 2.7 0 1 0 5.4 0a2.7 2.7 0 1 0 -5.4 0M1434.7 864.6a2.7 2.7 0 1 0 5.4 0a2.7 2.7 0 1 0 -5.4 0M1435.2 852.6a2.7 2.7 0 1 0 5.4 0a2.7 2.7 0 1 0 -5.4 0M1435.8 831.3a2.7 2.7 0 1 0 5.4 0a2.7 2.7 0 1 0 -5.4 0M1436.4 790.6a2.7 2.7 0 1 0 5.4 0a2.7 2.7 0 1 0 -5.4 0M1437.0 828.7a2.7 2.7 0 1 0 5.4 0a2.7 2.7 0 1 0 -5.4 0M1437.6 825.3a2.7 2.7 0 1 0 5.4 0a2.7 2.7 0 1 0 -5.4 0M1438.2 843.4a2.7 2.7 0 1 0 5.4 0a2.7 2.7 0 1 0 -5.4 0M1438.8 796.0a2.7 2.7 0 1 0 5.4 0a2.7 2.7 0 1 0 -5.4 0M1439.4 825.4a2.7 2.7 0 1 0 5.4 0a2.7 2.7 0 1 0 -5.4 0M1440.0 861.1a2.7 2.7 0 1 0 5.4 0a2.7 2.7 0 1 0 -5.4 0M1440.6 861.0a2.7 2.7 0 1 0 5.4 0a2.7 2.7 0 1 0 -5.4 0M1441.2 869.0a2.7 2.7 0 1 0 5.4 0a2.7 2.7 0 1 0 -5.4 0M1441.8 818.7a2.7 2.7 0 1 0 5.4 0a2.7 2.7 0 1 0 -5.4 0M1442.3 859.4a2.7 2.7 0 1 0 5.4 0a2.7 2.7 0 1 0 -5.4 0M1442.9 873.3a2.7 2.7 0 1 0 5.4 0a2.7 2.7 0 1 0 -5.4 0M1443.5 812.8a2.7 2.7 0 1 0 5.4 0a2.7 2.7 0 1 0 -5.4 0M1444.1 720.7a2.7 2.7 0 1 0 5.4 0a2.7 2.7 0 1 0 -5.4 0M1444.7 737.2a2.7 2.7 0 1 0 5.4 0a2.7 2.7 0 1 0 -5.4 0M1445.3 822.2a2.7 2.7 0 1 0 5.4 0a2.7 2.7 0 1 0 -5.4 0M1445.9 819.7a2.7 2.7 0 1 0 5.4 0a2.7 2.7 0 1 0 -5.4 0M1446.5 856.6a2.7 2.7 0 1 0 5.4 0a2.7 2.7 0 1 0 -5.4 0M1447.1 814.1a2.7 2.7 0 1 0 5.4 0a2.7 2.7 0 1 0 -5.4 0M1447.7 815.0a2.7 2.7 0 1 0 5.4 0a2.7 2.7 0 1 0 -5.4 0M1448.3 815.3a2.7 2.7 0 1 0 5.4 0a2.7 2.7 0 1 0 -5.4 0M1448.9 824.4a2.7 2.7 0 1 0 5.4 0a2.7 2.7 0 1 0 -5.4 0M1449.4 852.2a2.7 2.7 0 1 0 5.4 0a2.7 2.7 0 1 0 -5.4 0M1450.0 836.4a2.7 2.7 0 1 0 5.4 0a2.7 2.7 0 1 0 -5.4 0M1450.6 803.2a2.7 2.7 0 1 0 5.4 0a2.7 2.7 0 1 0 -5.4 0M1451.2 811.7a2.7 2.7 0 1 0 5.4 0a2.7 2.7 0 1 0 -5.4 0M1451.8 780.2a2.7 2.7 0 1 0 5.4 0a2.7 2.7 0 1 0 -5.4 0M1452.4 818.7a2.7 2.7 0 1 0 5.4 0a2.7 2.7 0 1 0 -5.4 0M1453.0 840.9a2.7 2.7 0 1 0 5.4 0a2.7 2.7 0 1 0 -5.4 0M1453.6 937.6a2.7 2.7 0 1 0 5.4 0a2.7 2.7 0 1 0 -5.4 0M1454.2 950.1a2.7 2.7 0 1 0 5.4 0a2.7 2.7 0 1 0 -5.4 0M1454.8 936.5a2.7 2.7 0 1 0 5.4 0a2.7 2.7 0 1 0 -5.4 0M1455.4 822.8a2.7 2.7 0 1 0 5.4 0a2.7 2.7 0 1 0 -5.4 0M1456.0 828.4a2.7 2.7 0 1 0 5.4 0a2.7 2.7 0 1 0 -5.4 0M1456.5 819.9a2.7 2.7 0 1 0 5.4 0a2.7 2.7 0 1 0 -5.4 0M1457.1 776.3a2.7 2.7 0 1 0 5.4 0a2.7 2.7 0 1 0 -5.4 0M1457.7 788.9a2.7 2.7 0 1 0 5.4 0a2.7 2.7 0 1 0 -5.4 0M1458.3 812.8a2.7 2.7 0 1 0 5.4 0a2.7 2.7 0 1 0 -5.4 0M1458.9 839.1a2.7 2.7 0 1 0 5.4 0a2.7 2.7 0 1 0 -5.4 0M1459.5 810.2a2.7 2.7 0 1 0 5.4 0a2.7 2.7 0 1 0 -5.4 0M1460.1 856.9a2.7 2.7 0 1 0 5.4 0a2.7 2.7 0 1 0 -5.4 0M1460.7 868.7a2.7 2.7 0 1 0 5.4 0a2.7 2.7 0 1 0 -5.4 0M1461.3 828.1a2.7 2.7 0 1 0 5.4 0a2.7 2.7 0 1 0 -5.4 0M1461.9 816.5a2.7 2.7 0 1 0 5.4 0a2.7 2.7 0 1 0 -5.4 0M1462.5 821.0a2.7 2.7 0 1 0 5.4 0a2.7 2.7 0 1 0 -5.4 0M1463.1 823.5a2.7 2.7 0 1 0 5.4 0a2.7 2.7 0 1 0 -5.4 0M1463.6 853.0a2.7 2.7 0 1 0 5.4 0a2.7 2.7 0 1 0 -5.4 0M1464.2 812.5a2.7 2.7 0 1 0 5.4 0a2.7 2.7 0 1 0 -5.4 0M1464.8 782.7a2.7 2.7 0 1 0 5.4 0a2.7 2.7 0 1 0 -5.4 0M1465.4 780.0a2.7 2.7 0 1 0 5.4 0a2.7 2.7 0 1 0 -5.4 0M1466.0 824.4a2.7 2.7 0 1 0 5.4 0a2.7 2.7 0 1 0 -5.4 0M1466.6 832.2a2.7 2.7 0 1 0 5.4 0a2.7 2.7 0 1 0 -5.4 0M1467.2 820.2a2.7 2.7 0 1 0 5.4 0a2.7 2.7 0 1 0 -5.4 0M1467.8 834.5a2.7 2.7 0 1 0 5.4 0a2.7 2.7 0 1 0 -5.4 0M1468.4 810.4a2.7 2.7 0 1 0 5.4 0a2.7 2.7 0 1 0 -5.4 0M1469.0 838.2a2.7 2.7 0 1 0 5.4 0a2.7 2.7 0 1 0 -5.4 0M1469.6 816.1a2.7 2.7 0 1 0 5.4 0a2.7 2.7 0 1 0 -5.4 0M1470.1 810.3a2.7 2.7 0 1 0 5.4 0a2.7 2.7 0 1 0 -5.4 0M1470.7 832.6a2.7 2.7 0 1 0 5.4 0a2.7 2.7 0 1 0 -5.4 0M1471.3 868.5a2.7 2.7 0 1 0 5.4 0a2.7 2.7 0 1 0 -5.4 0M1471.9 863.5a2.7 2.7 0 1 0 5.4 0a2.7 2.7 0 1 0 -5.4 0M1472.5 822.1a2.7 2.7 0 1 0 5.4 0a2.7 2.7 0 1 0 -5.4 0M1473.1 713.8a2.7 2.7 0 1 0 5.4 0a2.7 2.7 0 1 0 -5.4 0M1473.7 730.8a2.7 2.7 0 1 0 5.4 0a2.7 2.7 0 1 0 -5.4 0M1474.3 839.2a2.7 2.7 0 1 0 5.4 0a2.7 2.7 0 1 0 -5.4 0M1474.9 824.0a2.7 2.7 0 1 0 5.4 0a2.7 2.7 0 1 0 -5.4 0M1475.5 942.1a2.7 2.7 0 1 0 5.4 0a2.7 2.7 0 1 0 -5.4 0M1476.1 954.3a2.7 2.7 0 1 0 5.4 0a2.7 2.7 0 1 0 -5.4 0M1476.7 838.2a2.7 2.7 0 1 0 5.4 0a2.7 2.7 0 1 0 -5.4 0M1477.2 813.2a2.7 2.7 0 1 0 5.4 0a2.7 2.7 0 1 0 -5.4 0M1477.8 823.0a2.7 2.7 0 1 0 5.4 0a2.7 2.7 0 1 0 -5.4 0M1478.4 815.9a2.7 2.7 0 1 0 5.4 0a2.7 2.7 0 1 0 -5.4 0M1479.0 799.0a2.7 2.7 0 1 0 5.4 0a2.7 2.7 0 1 0 -5.4 0M1479.6 805.3a2.7 2.7 0 1 0 5.4 0a2.7 2.7 0 1 0 -5.4 0M1480.2 782.0a2.7 2.7 0 1 0 5.4 0a2.7 2.7 0 1 0 -5.4 0M1480.8 785.7a2.7 2.7 0 1 0 5.4 0a2.7 2.7 0 1 0 -5.4 0M1481.4 832.2a2.7 2.7 0 1 0 5.4 0a2.7 2.7 0 1 0 -5.4 0M1482.0 802.8a2.7 2.7 0 1 0 5.4 0a2.7 2.7 0 1 0 -5.4 0M1482.6 854.3a2.7 2.7 0 1 0 5.4 0a2.7 2.7 0 1 0 -5.4 0M1483.2 848.1a2.7 2.7 0 1 0 5.4 0a2.7 2.7 0 1 0 -5.4 0M1483.8 861.2a2.7 2.7 0 1 0 5.4 0a2.7 2.7 0 1 0 -5.4 0M1484.3 835.5a2.7 2.7 0 1 0 5.4 0a2.7 2.7 0 1 0 -5.4 0M1484.9 813.9a2.7 2.7 0 1 0 5.4 0a2.7 2.7 0 1 0 -5.4 0M1485.5 819.4a2.7 2.7 0 1 0 5.4 0a2.7 2.7 0 1 0 -5.4 0M1486.1 856.3a2.7 2.7 0 1 0 5.4 0a2.7 2.7 0 1 0 -5.4 0M1486.7 809.7a2.7 2.7 0 1 0 5.4 0a2.7 2.7 0 1 0 -5.4 0M1487.3 802.3a2.7 2.7 0 1 0 5.4 0a2.7 2.7 0 1 0 -5.4 0M1487.9 832.8a2.7 2.7 0 1 0 5.4 0a2.7 2.7 0 1 0 -5.4 0M1488.5 818.3a2.7 2.7 0 1 0 5.4 0a2.7 2.7 0 1 0 -5.4 0M1489.1 726.3a2.7 2.7 0 1 0 5.4 0a2.7 2.7 0 1 0 -5.4 0M1489.7 742.4a2.7 2.7 0 1 0 5.4 0a2.7 2.7 0 1 0 -5.4 0M1490.3 854.6a2.7 2.7 0 1 0 5.4 0a2.7 2.7 0 1 0 -5.4 0M1490.9 870.1a2.7 2.7 0 1 0 5.4 0a2.7 2.7 0 1 0 -5.4 0M1491.4 840.4a2.7 2.7 0 1 0 5.4 0a2.7 2.7 0 1 0 -5.4 0M1492.0 835.7a2.7 2.7 0 1 0 5.4 0a2.7 2.7 0 1 0 -5.4 0M1492.6 818.0a2.7 2.7 0 1 0 5.4 0a2.7 2.7 0 1 0 -5.4 0M1493.2 780.4a2.7 2.7 0 1 0 5.4 0a2.7 2.7 0 1 0 -5.4 0M1493.8 773.1a2.7 2.7 0 1 0 5.4 0a2.7 2.7 0 1 0 -5.4 0M1494.4 819.5a2.7 2.7 0 1 0 5.4 0a2.7 2.7 0 1 0 -5.4 0M1495.0 799.6a2.7 2.7 0 1 0 5.4 0a2.7 2.7 0 1 0 -5.4 0M1495.6 843.4a2.7 2.7 0 1 0 5.4 0a2.7 2.7 0 1 0 -5.4 0M1496.2 807.1a2.7 2.7 0 1 0 5.4 0a2.7 2.7 0 1 0 -5.4 0M1496.8 847.3a2.7 2.7 0 1 0 5.4 0a2.7 2.7 0 1 0 -5.4 0M1497.4 815.6a2.7 2.7 0 1 0 5.4 0a2.7 2.7 0 1 0 -5.4 0M1498.0 824.8a2.7 2.7 0 1 0 5.4 0a2.7 2.7 0 1 0 -5.4 0M1498.5 946.9a2.7 2.7 0 1 0 5.4 0a2.7 2.7 0 1 0 -5.4 0M1499.1 941.2a2.7 2.7 0 1 0 5.4 0a2.7 2.7 0 1 0 -5.4 0M1499.7 954.0a2.7 2.7 0 1 0 5.4 0a2.7 2.7 0 1 0 -5.4 0M1500.3 812.1a2.7 2.7 0 1 0 5.4 0a2.7 2.7 0 1 0 -5.4 0M1500.9 808.1a2.7 2.7 0 1 0 5.4 0a2.7 2.7 0 1 0 -5.4 0M1501.5 807.8a2.7 2.7 0 1 0 5.4 0a2.7 2.7 0 1 0 -5.4 0M1502.1 843.5a2.7 2.7 0 1 0 5.4 0a2.7 2.7 0 1 0 -5.4 0M1502.7 814.4a2.7 2.7 0 1 0 5.4 0a2.7 2.7 0 1 0 -5.4 0M1503.3 861.6a2.7 2.7 0 1 0 5.4 0a2.7 2.7 0 1 0 -5.4 0M1503.9 863.6a2.7 2.7 0 1 0 5.4 0a2.7 2.7 0 1 0 -5.4 0M1504.5 866.8a2.7 2.7 0 1 0 5.4 0a2.7 2.7 0 1 0 -5.4 0M1505.0 860.7a2.7 2.7 0 1 0 5.4 0a2.7 2.7 0 1 0 -5.4 0M1505.6 847.3a2.7 2.7 0 1 0 5.4 0a2.7 2.7 0 1 0 -5.4 0M1506.2 839.8a2.7 2.7 0 1 0 5.4 0a2.7 2.7 0 1 0 -5.4 0M1506.8 840.5a2.7 2.7 0 1 0 5.4 0a2.7 2.7 0 1 0 -5.4 0M1507.4 776.3a2.7 2.7 0 1 0 5.4 0a2.7 2.7 0 1 0 -5.4 0M1508.0 788.9a2.7 2.7 0 1 0 5.4 0a2.7 2.7 0 1 0 -5.4 0M1508.6 816.1a2.7 2.7 0 1 0 5.4 0a2.7 2.7 0 1 0 -5.4 0M1509.2 818.7a2.7 2.7 0 1 0 5.4 0a2.7 2.7 0 1 0 -5.4 0M1509.8 848.7a2.7 2.7 0 1 0 5.4 0a2.7 2.7 0 1 0 -5.4 0M1510.4 839.3a2.7 2.7 0 1 0 5.4 0a2.7 2.7 0 1 0 -5.4 0M1511.0 816.2a2.7 2.7 0 1 0 5.4 0a2.7 2.7 0 1 0 -5.4 0M1511.6 836.3a2.7 2.7 0 1 0 5.4 0a2.7 2.7 0 1 0 -5.4 0M1512.1 810.6a2.7 2.7 0 1 0 5.4 0a2.7 2.7 0 1 0 -5.4 0M1512.7 814.8a2.7 2.7 0 1 0 5.4 0a2.7 2.7 0 1 0 -5.4 0M1513.3 826.7a2.7 2.7 0 1 0 5.4 0a2.7 2.7 0 1 0 -5.4 0M1513.9 845.9a2.7 2.7 0 1 0 5.4 0a2.7 2.7 0 1 0 -5.4 0M1514.5 862.5a2.7 2.7 0 1 0 5.4 0a2.7 2.7 0 1 0 -5.4 0M1515.1 825.7a2.7 2.7 0 1 0 5.4 0a2.7 2.7 0 1 0 -5.4 0M1515.7 856.8a2.7 2.7 0 1 0 5.4 0a2.7 2.7 0 1 0 -5.4 0M1516.3 820.7a2.7 2.7 0 1 0 5.4 0a2.7 2.7 0 1 0 -5.4 0M1516.9 826.4a2.7 2.7 0 1 0 5.4 0a2.7 2.7 0 1 0 -5.4 0M1517.5 779.1a2.7 2.7 0 1 0 5.4 0a2.7 2.7 0 1 0 -5.4 0M1518.1 791.5a2.7 2.7 0 1 0 5.4 0a2.7 2.7 0 1 0 -5.4 0M1518.7 845.3a2.7 2.7 0 1 0 5.4 0a2.7 2.7 0 1 0 -5.4 0M1519.2 807.0a2.7 2.7 0 1 0 5.4 0a2.7 2.7 0 1 0 -5.4 0M1519.8 820.8a2.7 2.7 0 1 0 5.4 0a2.7 2.7 0 1 0 -5.4 0M1520.4 790.5a2.7 2.7 0 1 0 5.4 0a2.7 2.7 0 1 0 -5.4 0M1521.0 819.1a2.7 2.7 0 1 0 5.4 0a2.7 2.7 0 1 0 -5.4 0M1521.6 819.9a2.7 2.7 0 1 0 5.4 0a2.7 2.7 0 1 0 -5.4 0M1522.2 811.5a2.7 2.7 0 1 0 5.4 0a2.7 2.7 0 1 0 -5.4 0M1522.8 811.6a2.7 2.7 0 1 0 5.4 0a2.7 2.7 0 1 0 -5.4 0M1523.4 831.5a2.7 2.7 0 1 0 5.4 0a2.7 2.7 0 1 0 -5.4 0M1524.0 832.2a2.7 2.7 0 1 0 5.4 0a2.7 2.7 0 1 0 -5.4 0M1524.6 862.7a2.7 2.7 0 1 0 5.4 0a2.7 2.7 0 1 0 -5.4 0M1525.2 860.1a2.7 2.7 0 1 0 5.4 0a2.7 2.7 0 1 0 -5.4 0M1525.8 843.6a2.7 2.7 0 1 0 5.4 0a2.7 2.7 0 1 0 -5.4 0M1526.3 833.2a2.7 2.7 0 1 0 5.4 0a2.7 2.7 0 1 0 -5.4 0M1526.9 816.3a2.7 2.7 0 1 0 5.4 0a2.7 2.7 0 1 0 -5.4 0M1527.5 955.2a2.7 2.7 0 1 0 5.4 0a2.7 2.7 0 1 0 -5.4 0M1528.1 936.2a2.7 2.7 0 1 0 5.4 0a2.7 2.7 0 1 0 -5.4 0M1528.7 948.7a2.7 2.7 0 1 0 5.4 0a2.7 2.7 0 1 0 -5.4 0M1529.3 813.6a2.7 2.7 0 1 0 5.4 0a2.7 2.7 0 1 0 -5.4 0M1529.9 824.2a2.7 2.7 0 1 0 5.4 0a2.7 2.7 0 1 0 -5.4 0M1530.5 816.0a2.7 2.7 0 1 0 5.4 0a2.7 2.7 0 1 0 -5.4 0M1531.1 835.1a2.7 2.7 0 1 0 5.4 0a2.7 2.7 0 1 0 -5.4 0M1531.7 819.8a2.7 2.7 0 1 0 5.4 0a2.7 2.7 0 1 0 -5.4 0M1532.3 817.0a2.7 2.7 0 1 0 5.4 0a2.7 2.7 0 1 0 -5.4 0M1532.8 809.9a2.7 2.7 0 1 0 5.4 0a2.7 2.7 0 1 0 -5.4 0M1533.4 817.4a2.7 2.7 0 1 0 5.4 0a2.7 2.7 0 1 0 -5.4 0M1534.0 706.8a2.7 2.7 0 1 0 5.4 0a2.7 2.7 0 1 0 -5.4 0M1534.6 724.3a2.7 2.7 0 1 0 5.4 0a2.7 2.7 0 1 0 -5.4 0M1535.2 797.2a2.7 2.7 0 1 0 5.4 0a2.7 2.7 0 1 0 -5.4 0M1535.8 799.5a2.7 2.7 0 1 0 5.4 0a2.7 2.7 0 1 0 -5.4 0M1536.4 795.8a2.7 2.7 0 1 0 5.4 0a2.7 2.7 0 1 0 -5.4 0M1537.0 841.1a2.7 2.7 0 1 0 5.4 0a2.7 2.7 0 1 0 -5.4 0M1537.6 805.9a2.7 2.7 0 1 0 5.4 0a2.7 2.7 0 1 0 -5.4 0M1538.2 818.3a2.7 2.7 0 1 0 5.4 0a2.7 2.7 0 1 0 -5.4 0M1538.8 857.1a2.7 2.7 0 1 0 5.4 0a2.7 2.7 0 1 0 -5.4 0M1539.4 857.7a2.7 2.7 0 1 0 5.4 0a2.7 2.7 0 1 0 -5.4 0M1539.9 860.2a2.7 2.7 0 1 0 5.4 0a2.7 2.7 0 1 0 -5.4 0M1540.5 866.0a2.7 2.7 0 1 0 5.4 0a2.7 2.7 0 1 0 -5.4 0M1541.1 816.5a2.7 2.7 0 1 0 5.4 0a2.7 2.7 0 1 0 -5.4 0M1541.7 843.6a2.7 2.7 0 1 0 5.4 0a2.7 2.7 0 1 0 -5.4 0M1542.3 827.4a2.7 2.7 0 1 0 5.4 0a2.7 2.7 0 1 0 -5.4 0M1542.9 827.1a2.7 2.7 0 1 0 5.4 0a2.7 2.7 0 1 0 -5.4 0M1543.5 861.8a2.7 2.7 0 1 0 5.4 0a2.7 2.7 0 1 0 -5.4 0M1544.1 942.0a2.7 2.7 0 1 0 5.4 0a2.7 2.7 0 1 0 -5.4 0M1544.7 855.8a2.7 2.7 0 1 0 5.4 0a2.7 2.7 0 1 0 -5.4 0M1545.3 876.3a2.7 2.7 0 1 0 5.4 0a2.7 2.7 0 1 0 -5.4 0M1545.9 864.9a2.7 2.7 0 1 0 5.4 0a2.7 2.7 0 1 0 -5.4 0M1546.5 834.8a2.7 2.7 0 1 0 5.4 0a2.7 2.7 0 1 0 -5.4 0M1547.0 852.6a2.7 2.7 0 1 0 5.4 0a2.7 2.7 0 1 0 -5.4 0M1547.6 840.8a2.7 2.7 0 1 0 5.4 0a2.7 2.7 0 1 0 -5.4 0M1548.2 855.5a2.7 2.7 0 1 0 5.4 0a2.7 2.7 0 1 0 -5.4 0M1548.8 847.3a2.7 2.7 0 1 0 5.4 0a2.7 2.7 0 1 0 -5.4 0M1549.4 736.0a2.7 2.7 0 1 0 5.4 0a2.7 2.7 0 1 0 -5.4 0M1550.0 751.5a2.7 2.7 0 1 0 5.4 0a2.7 2.7 0 1 0 -5.4 0M1550.6 779.2a2.7 2.7 0 1 0 5.4 0a2.7 2.7 0 1 0 -5.4 0M1551.2 820.5a2.7 2.7 0 1 0 5.4 0a2.7 2.7 0 1 0 -5.4 0M1551.8 788.9a2.7 2.7 0 1 0 5.4 0a2.7 2.7 0 1 0 -5.4 0M1552.4 811.9a2.7 2.7 0 1 0 5.4 0a2.7 2.7 0 1 0 -5.4 0M1553.0 826.0a2.7 2.7 0 1 0 5.4 0a2.7 2.7 0 1 0 -5.4 0M1553.6 859.2a2.7 2.7 0 1 0 5.4 0a2.7 2.7 0 1 0 -5.4 0M1554.1 844.7a2.7 2.7 0 1 0 5.4 0a2.7 2.7 0 1 0 -5.4 0M1554.7 830.5a2.7 2.7 0 1 0 5.4 0a2.7 2.7 0 1 0 -5.4 0M1555.3 814.5a2.7 2.7 0 1 0 5.4 0a2.7 2.7 0 1 0 -5.4 0M1555.9 866.4a2.7 2.7 0 1 0 5.4 0a2.7 2.7 0 1 0 -5.4 0M1556.5 844.5a2.7 2.7 0 1 0 5.4 0a2.7 2.7 0 1 0 -5.4 0M1557.1 851.0a2.7 2.7 0 1 0 5.4 0a2.7 2.7 0 1 0 -5.4 0M1557.7 849.3a2.7 2.7 0 1 0 5.4 0a2.7 2.7 0 1 0 -5.4 0M1558.3 817.7a2.7 2.7 0 1 0 5.4 0a2.7 2.7 0 1 0 -5.4 0M1558.9 819.1a2.7 2.7 0 1 0 5.4 0a2.7 2.7 0 1 0 -5.4 0M1559.5 954.4a2.7 2.7 0 1 0 5.4 0a2.7 2.7 0 1 0 -5.4 0M1560.1 955.0a2.7 2.7 0 1 0 5.4 0a2.7 2.7 0 1 0 -5.4 0M1560.7 943.3a2.7 2.7 0 1 0 5.4 0a2.7 2.7 0 1 0 -5.4 0M1561.2 850.9a2.7 2.7 0 1 0 5.4 0a2.7 2.7 0 1 0 -5.4 0M1561.8 833.3a2.7 2.7 0 1 0 5.4 0a2.7 2.7 0 1 0 -5.4 0M1562.4 776.3a2.7 2.7 0 1 0 5.4 0a2.7 2.7 0 1 0 -5.4 0M1563.0 788.9a2.7 2.7 0 1 0 5.4 0a2.7 2.7 0 1 0 -5.4 0M1563.6 802.3a2.7 2.7 0 1 0 5.4 0a2.7 2.7 0 1 0 -5.4 0M1564.2 782.4a2.7 2.7 0 1 0 5.4 0a2.7 2.7 0 1 0 -5.4 0M1564.8 821.0a2.7 2.7 0 1 0 5.4 0a2.7 2.7 0 1 0 -5.4 0M1565.4 835.7a2.7 2.7 0 1 0 5.4 0a2.7 2.7 0 1 0 -5.4 0M1566.0 793.6a2.7 2.7 0 1 0 5.4 0a2.7 2.7 0 1 0 -5.4 0M1566.6 800.1a2.7 2.7 0 1 0 5.4 0a2.7 2.7 0 1 0 -5.4 0M1567.2 800.8a2.7 2.7 0 1 0 5.4 0a2.7 2.7 0 1 0 -5.4 0M1567.7 829.3a2.7 2.7 0 1 0 5.4 0a2.7 2.7 0 1 0 -5.4 0M1568.3 870.4a2.7 2.7 0 1 0 5.4 0a2.7 2.7 0 1 0 -5.4 0M1568.9 854.3a2.7 2.7 0 1 0 5.4 0a2.7 2.7 0 1 0 -5.4 0M1569.5 838.3a2.7 2.7 0 1 0 5.4 0a2.7 2.7 0 1 0 -5.4 0M1570.1 871.7a2.7 2.7 0 1 0 5.4 0a2.7 2.7 0 1 0 -5.4 0M1570.7 871.5a2.7 2.7 0 1 0 5.4 0a2.7 2.7 0 1 0 -5.4 0M1571.3 856.4a2.7 2.7 0 1 0 5.4 0a2.7 2.7 0 1 0 -5.4 0M1571.9 827.9a2.7 2.7 0 1 0 5.4 0a2.7 2.7 0 1 0 -5.4 0M1572.5 853.7a2.7 2.7 0 1 0 5.4 0a2.7 2.7 0 1 0 -5.4 0M1573.1 858.1a2.7 2.7 0 1 0 5.4 0a2.7 2.7 0 1 0 -5.4 0M1573.7 855.0a2.7 2.7 0 1 0 5.4 0a2.7 2.7 0 1 0 -5.4 0M1574.3 870.4a2.7 2.7 0 1 0 5.4 0a2.7 2.7 0 1 0 -5.4 0M1574.8 826.1a2.7 2.7 0 1 0 5.4 0a2.7 2.7 0 1 0 -5.4 0M1575.4 858.7a2.7 2.7 0 1 0 5.4 0a2.7 2.7 0 1 0 -5.4 0M1576.0 812.1a2.7 2.7 0 1 0 5.4 0a2.7 2.7 0 1 0 -5.4 0M1576.6 851.9a2.7 2.7 0 1 0 5.4 0a2.7 2.7 0 1 0 -5.4 0M1577.2 857.4a2.7 2.7 0 1 0 5.4 0a2.7 2.7 0 1 0 -5.4 0M1577.8 853.6a2.7 2.7 0 1 0 5.4 0a2.7 2.7 0 1 0 -5.4 0M1578.4 839.3a2.7 2.7 0 1 0 5.4 0a2.7 2.7 0 1 0 -5.4 0M1579.0 796.2a2.7 2.7 0 1 0 5.4 0a2.7 2.7 0 1 0 -5.4 0M1579.6 766.6a2.7 2.7 0 1 0 5.4 0a2.7 2.7 0 1 0 -5.4 0M1580.2 779.9a2.7 2.7 0 1 0 5.4 0a2.7 2.7 0 1 0 -5.4 0M1580.8 839.0a2.7 2.7 0 1 0 5.4 0a2.7 2.7 0 1 0 -5.4 0M1581.4 852.0a2.7 2.7 0 1 0 5.4 0a2.7 2.7 0 1 0 -5.4 0M1581.9 869.1a2.7 2.7 0 1 0 5.4 0a2.7 2.7 0 1 0 -5.4 0M1582.5 844.1a2.7 2.7 0 1 0 5.4 0a2.7 2.7 0 1 0 -5.4 0M1583.1 866.5a2.7 2.7 0 1 0 5.4 0a2.7 2.7 0 1 0 -5.4 0M1583.7 868.5a2.7 2.7 0 1 0 5.4 0a2.7 2.7 0 1 0 -5.4 0M1584.3 855.1a2.7 2.7 0 1 0 5.4 0a2.7 2.7 0 1 0 -5.4 0M1584.9 825.5a2.7 2.7 0 1 0 5.4 0a2.7 2.7 0 1 0 -5.4 0M1585.5 870.0a2.7 2.7 0 1 0 5.4 0a2.7 2.7 0 1 0 -5.4 0M1586.1 835.7a2.7 2.7 0 1 0 5.4 0a2.7 2.7 0 1 0 -5.4 0M1586.7 844.5a2.7 2.7 0 1 0 5.4 0a2.7 2.7 0 1 0 -5.4 0M1587.3 949.8a2.7 2.7 0 1 0 5.4 0a2.7 2.7 0 1 0 -5.4 0M1587.9 952.8a2.7 2.7 0 1 0 5.4 0a2.7 2.7 0 1 0 -5.4 0M1588.5 946.7a2.7 2.7 0 1 0 5.4 0a2.7 2.7 0 1 0 -5.4 0M1589.0 861.1a2.7 2.7 0 1 0 5.4 0a2.7 2.7 0 1 0 -5.4 0M1589.6 872.2a2.7 2.7 0 1 0 5.4 0a2.7 2.7 0 1 0 -5.4 0M1590.2 837.9a2.7 2.7 0 1 0 5.4 0a2.7 2.7 0 1 0 -5.4 0M1590.8 823.5a2.7 2.7 0 1 0 5.4 0a2.7 2.7 0 1 0 -5.4 0M1591.4 812.5a2.7 2.7 0 1 0 5.4 0a2.7 2.7 0 1 0 -5.4 0M1592.0 818.9a2.7 2.7 0 1 0 5.4 0a2.7 2.7 0 1 0 -5.4 0M1592.6 802.9a2.7 2.7 0 1 0 5.4 0a2.7 2.7 0 1 0 -5.4 0M1593.2 790.7a2.7 2.7 0 1 0 5.4 0a2.7 2.7 0 1 0 -5.4 0M1593.8 828.3a2.7 2.7 0 1 0 5.4 0a2.7 2.7 0 1 0 -5.4 0M1594.4 843.2a2.7 2.7 0 1 0 5.4 0a2.7 2.7 0 1 0 -5.4 0M1595.0 824.0a2.7 2.7 0 1 0 5.4 0a2.7 2.7 0 1 0 -5.4 0M1595.6 864.5a2.7 2.7 0 1 0 5.4 0a2.7 2.7 0 1 0 -5.4 0M1596.1 845.8a2.7 2.7 0 1 0 5.4 0a2.7 2.7 0 1 0 -5.4 0M1596.7 867.4a2.7 2.7 0 1 0 5.4 0a2.7 2.7 0 1 0 -5.4 0M1597.3 947.1a2.7 2.7 0 1 0 5.4 0a2.7 2.7 0 1 0 -5.4 0M1597.9 946.0a2.7 2.7 0 1 0 5.4 0a2.7 2.7 0 1 0 -5.4 0M1598.5 843.8a2.7 2.7 0 1 0 5.4 0a2.7 2.7 0 1 0 -5.4 0M1599.1 848.6a2.7 2.7 0 1 0 5.4 0a2.7 2.7 0 1 0 -5.4 0M1599.7 862.2a2.7 2.7 0 1 0 5.4 0a2.7 2.7 0 1 0 -5.4 0M1600.3 836.4a2.7 2.7 0 1 0 5.4 0a2.7 2.7 0 1 0 -5.4 0M1600.9 873.8a2.7 2.7 0 1 0 5.4 0a2.7 2.7 0 1 0 -5.4 0M1601.5 842.8a2.7 2.7 0 1 0 5.4 0a2.7 2.7 0 1 0 -5.4 0M1602.1 863.8a2.7 2.7 0 1 0 5.4 0a2.7 2.7 0 1 0 -5.4 0M1602.6 828.3a2.7 2.7 0 1 0 5.4 0a2.7 2.7 0 1 0 -5.4 0M1603.2 950.1a2.7 2.7 0 1 0 5.4 0a2.7 2.7 0 1 0 -5.4 0M1603.8 858.8a2.7 2.7 0 1 0 5.4 0a2.7 2.7 0 1 0 -5.4 0M1604.4 865.1a2.7 2.7 0 1 0 5.4 0a2.7 2.7 0 1 0 -5.4 0M1605.0 828.2a2.7 2.7 0 1 0 5.4 0a2.7 2.7 0 1 0 -5.4 0M1605.6 847.7a2.7 2.7 0 1 0 5.4 0a2.7 2.7 0 1 0 -5.4 0M1606.2 840.4a2.7 2.7 0 1 0 5.4 0a2.7 2.7 0 1 0 -5.4 0M1606.8 840.7a2.7 2.7 0 1 0 5.4 0a2.7 2.7 0 1 0 -5.4 0M1607.4 807.8a2.7 2.7 0 1 0 5.4 0a2.7 2.7 0 1 0 -5.4 0M1608.0 791.4a2.7 2.7 0 1 0 5.4 0a2.7 2.7 0 1 0 -5.4 0M1608.6 838.3a2.7 2.7 0 1 0 5.4 0a2.7 2.7 0 1 0 -5.4 0M1609.2 787.4a2.7 2.7 0 1 0 5.4 0a2.7 2.7 0 1 0 -5.4 0M1609.7 799.3a2.7 2.7 0 1 0 5.4 0a2.7 2.7 0 1 0 -5.4 0M1610.3 844.8a2.7 2.7 0 1 0 5.4 0a2.7 2.7 0 1 0 -5.4 0M1610.9 819.2a2.7 2.7 0 1 0 5.4 0a2.7 2.7 0 1 0 -5.4 0M1611.5 871.0a2.7 2.7 0 1 0 5.4 0a2.7 2.7 0 1 0 -5.4 0M1612.1 860.1a2.7 2.7 0 1 0 5.4 0a2.7 2.7 0 1 0 -5.4 0M1612.7 826.7a2.7 2.7 0 1 0 5.4 0a2.7 2.7 0 1 0 -5.4 0M1613.3 811.3a2.7 2.7 0 1 0 5.4 0a2.7 2.7 0 1 0 -5.4 0M1613.9 847.0a2.7 2.7 0 1 0 5.4 0a2.7 2.7 0 1 0 -5.4 0M1614.5 817.2a2.7 2.7 0 1 0 5.4 0a2.7 2.7 0 1 0 -5.4 0M1615.1 866.4a2.7 2.7 0 1 0 5.4 0a2.7 2.7 0 1 0 -5.4 0M1615.7 856.9a2.7 2.7 0 1 0 5.4 0a2.7 2.7 0 1 0 -5.4 0M1616.3 859.4a2.7 2.7 0 1 0 5.4 0a2.7 2.7 0 1 0 -5.4 0M1616.8 880.7a2.7 2.7 0 1 0 5.4 0a2.7 2.7 0 1 0 -5.4 0M1617.4 863.6a2.7 2.7 0 1 0 5.4 0a2.7 2.7 0 1 0 -5.4 0M1618.0 871.7a2.7 2.7 0 1 0 5.4 0a2.7 2.7 0 1 0 -5.4 0M1618.6 864.4a2.7 2.7 0 1 0 5.4 0a2.7 2.7 0 1 0 -5.4 0M1619.2 821.0a2.7 2.7 0 1 0 5.4 0a2.7 2.7 0 1 0 -5.4 0M1619.8 830.2a2.7 2.7 0 1 0 5.4 0a2.7 2.7 0 1 0 -5.4 0M1620.4 824.8a2.7 2.7 0 1 0 5.4 0a2.7 2.7 0 1 0 -5.4 0M1621.0 794.1a2.7 2.7 0 1 0 5.4 0a2.7 2.7 0 1 0 -5.4 0M1621.6 820.3a2.7 2.7 0 1 0 5.4 0a2.7 2.7 0 1 0 -5.4 0M1622.2 847.2a2.7 2.7 0 1 0 5.4 0a2.7 2.7 0 1 0 -5.4 0M1622.8 809.7a2.7 2.7 0 1 0 5.4 0a2.7 2.7 0 1 0 -5.4 0M1623.4 951.1a2.7 2.7 0 1 0 5.4 0a2.7 2.7 0 1 0 -5.4 0M1623.9 865.8a2.7 2.7 0 1 0 5.4 0a2.7 2.7 0 1 0 -5.4 0M1624.5 861.1a2.7 2.7 0 1 0 5.4 0a2.7 2.7 0 1 0 -5.4 0M1625.1 825.0a2.7 2.7 0 1 0 5.4 0a2.7 2.7 0 1 0 -5.4 0M1625.7 856.0a2.7 2.7 0 1 0 5.4 0a2.7 2.7 0 1 0 -5.4 0M1626.3 841.2a2.7 2.7 0 1 0 5.4 0a2.7 2.7 0 1 0 -5.4 0M1626.9 830.8a2.7 2.7 0 1 0 5.4 0a2.7 2.7 0 1 0 -5.4 0M1627.5 783.2a2.7 2.7 0 1 0 5.4 0a2.7 2.7 0 1 0 -5.4 0M1628.1 795.4a2.7 2.7 0 1 0 5.4 0a2.7 2.7 0 1 0 -5.4 0M1628.7 829.2a2.7 2.7 0 1 0 5.4 0a2.7 2.7 0 1 0 -5.4 0M1629.3 866.3a2.7 2.7 0 1 0 5.4 0a2.7 2.7 0 1 0 -5.4 0M1629.9 848.6a2.7 2.7 0 1 0 5.4 0a2.7 2.7 0 1 0 -5.4 0M1630.5 818.4a2.7 2.7 0 1 0 5.4 0a2.7 2.7 0 1 0 -5.4 0M1631.0 854.8a2.7 2.7 0 1 0 5.4 0a2.7 2.7 0 1 0 -5.4 0M1631.6 847.4a2.7 2.7 0 1 0 5.4 0a2.7 2.7 0 1 0 -5.4 0M1632.2 862.1a2.7 2.7 0 1 0 5.4 0a2.7 2.7 0 1 0 -5.4 0M1632.8 828.5a2.7 2.7 0 1 0 5.4 0a2.7 2.7 0 1 0 -5.4 0M1633.4 814.7a2.7 2.7 0 1 0 5.4 0a2.7 2.7 0 1 0 -5.4 0M1634.0 832.8a2.7 2.7 0 1 0 5.4 0a2.7 2.7 0 1 0 -5.4 0M1634.6 829.7a2.7 2.7 0 1 0 5.4 0a2.7 2.7 0 1 0 -5.4 0M1635.2 842.7a2.7 2.7 0 1 0 5.4 0a2.7 2.7 0 1 0 -5.4 0M1635.8 805.0a2.7 2.7 0 1 0 5.4 0a2.7 2.7 0 1 0 -5.4 0M1636.4 839.5a2.7 2.7 0 1 0 5.4 0a2.7 2.7 0 1 0 -5.4 0M1637.0 821.5a2.7 2.7 0 1 0 5.4 0a2.7 2.7 0 1 0 -5.4 0M1637.5 797.8a2.7 2.7 0 1 0 5.4 0a2.7 2.7 0 1 0 -5.4 0M1638.1 797.8a2.7 2.7 0 1 0 5.4 0a2.7 2.7 0 1 0 -5.4 0M1638.7 854.9a2.7 2.7 0 1 0 5.4 0a2.7 2.7 0 1 0 -5.4 0M1639.3 845.0a2.7 2.7 0 1 0 5.4 0a2.7 2.7 0 1 0 -5.4 0M1639.9 847.1a2.7 2.7 0 1 0 5.4 0a2.7 2.7 0 1 0 -5.4 0M1640.5 848.7a2.7 2.7 0 1 0 5.4 0a2.7 2.7 0 1 0 -5.4 0M1641.1 695.7a2.7 2.7 0 1 0 5.4 0a2.7 2.7 0 1 0 -5.4 0M1641.7 714.0a2.7 2.7 0 1 0 5.4 0a2.7 2.7 0 1 0 -5.4 0M1642.3 855.2a2.7 2.7 0 1 0 5.4 0a2.7 2.7 0 1 0 -5.4 0M1642.9 852.3a2.7 2.7 0 1 0 5.4 0a2.7 2.7 0 1 0 -5.4 0M1643.5 847.7a2.7 2.7 0 1 0 5.4 0a2.7 2.7 0 1 0 -5.4 0M1644.1 858.4a2.7 2.7 0 1 0 5.4 0a2.7 2.7 0 1 0 -5.4 0M1644.6 859.4a2.7 2.7 0 1 0 5.4 0a2.7 2.7 0 1 0 -5.4 0M1645.2 823.5a2.7 2.7 0 1 0 5.4 0a2.7 2.7 0 1 0 -5.4 0M1645.8 848.3a2.7 2.7 0 1 0 5.4 0a2.7 2.7 0 1 0 -5.4 0M1646.4 812.6a2.7 2.7 0 1 0 5.4 0a2.7 2.7 0 1 0 -5.4 0M1647.0 845.8a2.7 2.7 0 1 0 5.4 0a2.7 2.7 0 1 0 -5.4 0M1647.6 823.1a2.7 2.7 0 1 0 5.4 0a2.7 2.7 0 1 0 -5.4 0M1648.2 845.3a2.7 2.7 0 1 0 5.4 0a2.7 2.7 0 1 0 -5.4 0M1648.8 803.8a2.7 2.7 0 1 0 5.4 0a2.7 2.7 0 1 0 -5.4 0M1649.4 787.1a2.7 2.7 0 1 0 5.4 0a2.7 2.7 0 1 0 -5.4 0M1650.0 819.0a2.7 2.7 0 1 0 5.4 0a2.7 2.7 0 1 0 -5.4 0M1650.6 833.1a2.7 2.7 0 1 0 5.4 0a2.7 2.7 0 1 0 -5.4 0M1651.2 816.9a2.7 2.7 0 1 0 5.4 0a2.7 2.7 0 1 0 -5.4 0M1651.7 830.8a2.7 2.7 0 1 0 5.4 0a2.7 2.7 0 1 0 -5.4 0M1652.3 834.3a2.7 2.7 0 1 0 5.4 0a2.7 2.7 0 1 0 -5.4 0M1652.9 820.4a2.7 2.7 0 1 0 5.4 0a2.7 2.7 0 1 0 -5.4 0M1653.5 859.4a2.7 2.7 0 1 0 5.4 0a2.7 2.7 0 1 0 -5.4 0M1654.1 838.7a2.7 2.7 0 1 0 5.4 0a2.7 2.7 0 1 0 -5.4 0M1654.7 848.6a2.7 2.7 0 1 0 5.4 0a2.7 2.7 0 1 0 -5.4 0M1655.3 858.7a2.7 2.7 0 1 0 5.4 0a2.7 2.7 0 1 0 -5.4 0M1655.9 836.1a2.7 2.7 0 1 0 5.4 0a2.7 2.7 0 1 0 -5.4 0M1656.5 853.2a2.7 2.7 0 1 0 5.4 0a2.7 2.7 0 1 0 -5.4 0M1657.1 849.1a2.7 2.7 0 1 0 5.4 0a2.7 2.7 0 1 0 -5.4 0M1657.7 857.3a2.7 2.7 0 1 0 5.4 0a2.7 2.7 0 1 0 -5.4 0M1658.3 859.4a2.7 2.7 0 1 0 5.4 0a2.7 2.7 0 1 0 -5.4 0M1658.8 841.6a2.7 2.7 0 1 0 5.4 0a2.7 2.7 0 1 0 -5.4 0M1659.4 865.0a2.7 2.7 0 1 0 5.4 0a2.7 2.7 0 1 0 -5.4 0M1660.0 843.4a2.7 2.7 0 1 0 5.4 0a2.7 2.7 0 1 0 -5.4 0M1660.6 863.7a2.7 2.7 0 1 0 5.4 0a2.7 2.7 0 1 0 -5.4 0M1661.2 829.1a2.7 2.7 0 1 0 5.4 0a2.7 2.7 0 1 0 -5.4 0M1661.8 841.2a2.7 2.7 0 1 0 5.4 0a2.7 2.7 0 1 0 -5.4 0M1662.4 799.7a2.7 2.7 0 1 0 5.4 0a2.7 2.7 0 1 0 -5.4 0M1663.0 809.3a2.7 2.7 0 1 0 5.4 0a2.7 2.7 0 1 0 -5.4 0M1663.6 817.0a2.7 2.7 0 1 0 5.4 0a2.7 2.7 0 1 0 -5.4 0M1664.2 784.3a2.7 2.7 0 1 0 5.4 0a2.7 2.7 0 1 0 -5.4 0M1664.8 825.8a2.7 2.7 0 1 0 5.4 0a2.7 2.7 0 1 0 -5.4 0M1665.4 837.4a2.7 2.7 0 1 0 5.4 0a2.7 2.7 0 1 0 -5.4 0M1665.9 804.3a2.7 2.7 0 1 0 5.4 0a2.7 2.7 0 1 0 -5.4 0M1666.5 807.6a2.7 2.7 0 1 0 5.4 0a2.7 2.7 0 1 0 -5.4 0M1667.1 809.0a2.7 2.7 0 1 0 5.4 0a2.7 2.7 0 1 0 -5.4 0M1667.7 853.9a2.7 2.7 0 1 0 5.4 0a2.7 2.7 0 1 0 -5.4 0M1668.3 841.5a2.7 2.7 0 1 0 5.4 0a2.7 2.7 0 1 0 -5.4 0M1668.9 817.9a2.7 2.7 0 1 0 5.4 0a2.7 2.7 0 1 0 -5.4 0M1669.5 828.3a2.7 2.7 0 1 0 5.4 0a2.7 2.7 0 1 0 -5.4 0M1670.1 835.5a2.7 2.7 0 1 0 5.4 0a2.7 2.7 0 1 0 -5.4 0M1670.7 848.4a2.7 2.7 0 1 0 5.4 0a2.7 2.7 0 1 0 -5.4 0M1671.3 813.6a2.7 2.7 0 1 0 5.4 0a2.7 2.7 0 1 0 -5.4 0M1671.9 832.5a2.7 2.7 0 1 0 5.4 0a2.7 2.7 0 1 0 -5.4 0M1672.4 758.2a2.7 2.7 0 1 0 5.4 0a2.7 2.7 0 1 0 -5.4 0M1673.0 772.1a2.7 2.7 0 1 0 5.4 0a2.7 2.7 0 1 0 -5.4 0M1673.6 817.3a2.7 2.7 0 1 0 5.4 0a2.7 2.7 0 1 0 -5.4 0M1674.2 862.6a2.7 2.7 0 1 0 5.4 0a2.7 2.7 0 1 0 -5.4 0M1674.8 850.4a2.7 2.7 0 1 0 5.4 0a2.7 2.7 0 1 0 -5.4 0M1675.4 830.8a2.7 2.7 0 1 0 5.4 0a2.7 2.7 0 1 0 -5.4 0M1676.0 848.6a2.7 2.7 0 1 0 5.4 0a2.7 2.7 0 1 0 -5.4 0M1676.6 843.5a2.7 2.7 0 1 0 5.4 0a2.7 2.7 0 1 0 -5.4 0M1677.2 801.8a2.7 2.7 0 1 0 5.4 0a2.7 2.7 0 1 0 -5.4 0M1677.8 829.0a2.7 2.7 0 1 0 5.4 0a2.7 2.7 0 1 0 -5.4 0M1678.4 821.3a2.7 2.7 0 1 0 5.4 0a2.7 2.7 0 1 0 -5.4 0M1679.0 822.4a2.7 2.7 0 1 0 5.4 0a2.7 2.7 0 1 0 -5.4 0M1679.5 834.2a2.7 2.7 0 1 0 5.4 0a2.7 2.7 0 1 0 -5.4 0M1680.1 803.9a2.7 2.7 0 1 0 5.4 0a2.7 2.7 0 1 0 -5.4 0M1680.7 822.4a2.7 2.7 0 1 0 5.4 0a2.7 2.7 0 1 0 -5.4 0M1681.3 860.8a2.7 2.7 0 1 0 5.4 0a2.7 2.7 0 1 0 -5.4 0M1681.9 866.8a2.7 2.7 0 1 0 5.4 0a2.7 2.7 0 1 0 -5.4 0M1682.5 844.2a2.7 2.7 0 1 0 5.4 0a2.7 2.7 0 1 0 -5.4 0M1683.1 853.3a2.7 2.7 0 1 0 5.4 0a2.7 2.7 0 1 0 -5.4 0M1683.7 837.7a2.7 2.7 0 1 0 5.4 0a2.7 2.7 0 1 0 -5.4 0M1684.3 828.4a2.7 2.7 0 1 0 5.4 0a2.7 2.7 0 1 0 -5.4 0M1684.9 838.1a2.7 2.7 0 1 0 5.4 0a2.7 2.7 0 1 0 -5.4 0M1685.5 829.2a2.7 2.7 0 1 0 5.4 0a2.7 2.7 0 1 0 -5.4 0M1686.1 850.4a2.7 2.7 0 1 0 5.4 0a2.7 2.7 0 1 0 -5.4 0M1686.6 824.7a2.7 2.7 0 1 0 5.4 0a2.7 2.7 0 1 0 -5.4 0M1687.2 856.0a2.7 2.7 0 1 0 5.4 0a2.7 2.7 0 1 0 -5.4 0M1687.8 776.3a2.7 2.7 0 1 0 5.4 0a2.7 2.7 0 1 0 -5.4 0M1688.4 788.9a2.7 2.7 0 1 0 5.4 0a2.7 2.7 0 1 0 -5.4 0M1689.0 844.9a2.7 2.7 0 1 0 5.4 0a2.7 2.7 0 1 0 -5.4 0M1689.6 863.2a2.7 2.7 0 1 0 5.4 0a2.7 2.7 0 1 0 -5.4 0M1690.2 859.6a2.7 2.7 0 1 0 5.4 0a2.7 2.7 0 1 0 -5.4 0M1690.8 813.5a2.7 2.7 0 1 0 5.4 0a2.7 2.7 0 1 0 -5.4 0M1691.4 841.6a2.7 2.7 0 1 0 5.4 0a2.7 2.7 0 1 0 -5.4 0M1692.0 825.7a2.7 2.7 0 1 0 5.4 0a2.7 2.7 0 1 0 -5.4 0M1692.6 835.8a2.7 2.7 0 1 0 5.4 0a2.7 2.7 0 1 0 -5.4 0M1693.2 789.9a2.7 2.7 0 1 0 5.4 0a2.7 2.7 0 1 0 -5.4 0M1693.7 794.9a2.7 2.7 0 1 0 5.4 0a2.7 2.7 0 1 0 -5.4 0M1694.3 791.2a2.7 2.7 0 1 0 5.4 0a2.7 2.7 0 1 0 -5.4 0M1694.9 797.1a2.7 2.7 0 1 0 5.4 0a2.7 2.7 0 1 0 -5.4 0M1695.5 848.4a2.7 2.7 0 1 0 5.4 0a2.7 2.7 0 1 0 -5.4 0M1696.1 817.3a2.7 2.7 0 1 0 5.4 0a2.7 2.7 0 1 0 -5.4 0M1696.7 845.8a2.7 2.7 0 1 0 5.4 0a2.7 2.7 0 1 0 -5.4 0M1697.3 938.5a2.7 2.7 0 1 0 5.4 0a2.7 2.7 0 1 0 -5.4 0M1697.9 945.6a2.7 2.7 0 1 0 5.4 0a2.7 2.7 0 1 0 -5.4 0M1698.5 956.0a2.7 2.7 0 1 0 5.4 0a2.7 2.7 0 1 0 -5.4 0M1699.1 816.9a2.7 2.7 0 1 0 5.4 0a2.7 2.7 0 1 0 -5.4 0M1699.7 845.4a2.7 2.7 0 1 0 5.4 0a2.7 2.7 0 1 0 -5.4 0M1700.3 848.6a2.7 2.7 0 1 0 5.4 0a2.7 2.7 0 1 0 -5.4 0M1700.8 858.6a2.7 2.7 0 1 0 5.4 0a2.7 2.7 0 1 0 -5.4 0M1701.4 818.8a2.7 2.7 0 1 0 5.4 0a2.7 2.7 0 1 0 -5.4 0M1702.0 783.2a2.7 2.7 0 1 0 5.4 0a2.7 2.7 0 1 0 -5.4 0M1702.6 795.4a2.7 2.7 0 1 0 5.4 0a2.7 2.7 0 1 0 -5.4 0M1703.2 833.1a2.7 2.7 0 1 0 5.4 0a2.7 2.7 0 1 0 -5.4 0M1703.8 841.9a2.7 2.7 0 1 0 5.4 0a2.7 2.7 0 1 0 -5.4 0M1704.4 827.6a2.7 2.7 0 1 0 5.4 0a2.7 2.7 0 1 0 -5.4 0M1705.0 800.9a2.7 2.7 0 1 0 5.4 0a2.7 2.7 0 1 0 -5.4 0M1705.6 784.8a2.7 2.7 0 1 0 5.4 0a2.7 2.7 0 1 0 -5.4 0M1706.2 812.9a2.7 2.7 0 1 0 5.4 0a2.7 2.7 0 1 0 -5.4 0M1706.8 825.3a2.7 2.7 0 1 0 5.4 0a2.7 2.7 0 1 0 -5.4 0M1707.3 811.6a2.7 2.7 0 1 0 5.4 0a2.7 2.7 0 1 0 -5.4 0M1707.9 801.9a2.7 2.7 0 1 0 5.4 0a2.7 2.7 0 1 0 -5.4 0M1708.5 838.2a2.7 2.7 0 1 0 5.4 0a2.7 2.7 0 1 0 -5.4 0M1709.1 857.8a2.7 2.7 0 1 0 5.4 0a2.7 2.7 0 1 0 -5.4 0M1709.7 854.3a2.7 2.7 0 1 0 5.4 0a2.7 2.7 0 1 0 -5.4 0M1710.3 815.0a2.7 2.7 0 1 0 5.4 0a2.7 2.7 0 1 0 -5.4 0M1710.9 826.4a2.7 2.7 0 1 0 5.4 0a2.7 2.7 0 1 0 -5.4 0M1711.5 948.2a2.7 2.7 0 1 0 5.4 0a2.7 2.7 0 1 0 -5.4 0M1712.1 945.4a2.7 2.7 0 1 0 5.4 0a2.7 2.7 0 1 0 -5.4 0M1712.7 845.6a2.7 2.7 0 1 0 5.4 0a2.7 2.7 0 1 0 -5.4 0M1713.3 814.5a2.7 2.7 0 1 0 5.4 0a2.7 2.7 0 1 0 -5.4 0M1713.9 845.7a2.7 2.7 0 1 0 5.4 0a2.7 2.7 0 1 0 -5.4 0M1714.4 864.2a2.7 2.7 0 1 0 5.4 0a2.7 2.7 0 1 0 -5.4 0M1715.0 950.9a2.7 2.7 0 1 0 5.4 0a2.7 2.7 0 1 0 -5.4 0M1715.6 939.7a2.7 2.7 0 1 0 5.4 0a2.7 2.7 0 1 0 -5.4 0M1716.2 837.4a2.7 2.7 0 1 0 5.4 0a2.7 2.7 0 1 0 -5.4 0M1716.8 856.0a2.7 2.7 0 1 0 5.4 0a2.7 2.7 0 1 0 -5.4 0M1717.4 842.5a2.7 2.7 0 1 0 5.4 0a2.7 2.7 0 1 0 -5.4 0M1718.0 810.3a2.7 2.7 0 1 0 5.4 0a2.7 2.7 0 1 0 -5.4 0M1718.6 843.3a2.7 2.7 0 1 0 5.4 0a2.7 2.7 0 1 0 -5.4 0M1719.2 817.4a2.7 2.7 0 1 0 5.4 0a2.7 2.7 0 1 0 -5.4 0M1719.8 799.8a2.7 2.7 0 1 0 5.4 0a2.7 2.7 0 1 0 -5.4 0M1720.4 822.5a2.7 2.7 0 1 0 5.4 0a2.7 2.7 0 1 0 -5.4 0M1721.0 805.1a2.7 2.7 0 1 0 5.4 0a2.7 2.7 0 1 0 -5.4 0M1721.5 819.8a2.7 2.7 0 1 0 5.4 0a2.7 2.7 0 1 0 -5.4 0M1722.1 821.0a2.7 2.7 0 1 0 5.4 0a2.7 2.7 0 1 0 -5.4 0M1722.7 809.9a2.7 2.7 0 1 0 5.4 0a2.7 2.7 0 1 0 -5.4 0M1723.3 803.1a2.7 2.7 0 1 0 5.4 0a2.7 2.7 0 1 0 -5.4 0M1723.9 826.7a2.7 2.7 0 1 0 5.4 0a2.7 2.7 0 1 0 -5.4 0M1724.5 850.5a2.7 2.7 0 1 0 5.4 0a2.7 2.7 0 1 0 -5.4 0M1725.1 826.3a2.7 2.7 0 1 0 5.4 0a2.7 2.7 0 1 0 -5.4 0M1725.7 833.7a2.7 2.7 0 1 0 5.4 0a2.7 2.7 0 1 0 -5.4 0M1726.3 856.4a2.7 2.7 0 1 0 5.4 0a2.7 2.7 0 1 0 -5.4 0M1726.9 833.3a2.7 2.7 0 1 0 5.4 0a2.7 2.7 0 1 0 -5.4 0M1727.5 825.6a2.7 2.7 0 1 0 5.4 0a2.7 2.7 0 1 0 -5.4 0M1728.1 849.6a2.7 2.7 0 1 0 5.4 0a2.7 2.7 0 1 0 -5.4 0M1728.6 848.1a2.7 2.7 0 1 0 5.4 0a2.7 2.7 0 1 0 -5.4 0M1729.2 816.7a2.7 2.7 0 1 0 5.4 0a2.7 2.7 0 1 0 -5.4 0M1729.8 821.7a2.7 2.7 0 1 0 5.4 0a2.7 2.7 0 1 0 -5.4 0M1730.4 816.5a2.7 2.7 0 1 0 5.4 0a2.7 2.7 0 1 0 -5.4 0M1731.0 836.1a2.7 2.7 0 1 0 5.4 0a2.7 2.7 0 1 0 -5.4 0M1731.6 838.8a2.7 2.7 0 1 0 5.4 0a2.7 2.7 0 1 0 -5.4 0M1732.2 854.9a2.7 2.7 0 1 0 5.4 0a2.7 2.7 0 1 0 -5.4 0M1732.8 857.1a2.7 2.7 0 1 0 5.4 0a2.7 2.7 0 1 0 -5.4 0M1733.4 813.5a2.7 2.7 0 1 0 5.4 0a2.7 2.7 0 1 0 -5.4 0M1734.0 795.3a2.7 2.7 0 1 0 5.4 0a2.7 2.7 0 1 0 -5.4 0M1734.6 820.7a2.7 2.7 0 1 0 5.4 0a2.7 2.7 0 1 0 -5.4 0M1735.1 815.8a2.7 2.7 0 1 0 5.4 0a2.7 2.7 0 1 0 -5.4 0M1735.7 811.7a2.7 2.7 0 1 0 5.4 0a2.7 2.7 0 1 0 -5.4 0M1736.3 807.8a2.7 2.7 0 1 0 5.4 0a2.7 2.7 0 1 0 -5.4 0M1736.9 834.9a2.7 2.7 0 1 0 5.4 0a2.7 2.7 0 1 0 -5.4 0M1737.5 856.2a2.7 2.7 0 1 0 5.4 0a2.7 2.7 0 1 0 -5.4 0M1738.1 852.5a2.7 2.7 0 1 0 5.4 0a2.7 2.7 0 1 0 -5.4 0M1738.7 815.8a2.7 2.7 0 1 0 5.4 0a2.7 2.7 0 1 0 -5.4 0M1739.3 843.2a2.7 2.7 0 1 0 5.4 0a2.7 2.7 0 1 0 -5.4 0M1739.9 848.2a2.7 2.7 0 1 0 5.4 0a2.7 2.7 0 1 0 -5.4 0M1740.5 816.3a2.7 2.7 0 1 0 5.4 0a2.7 2.7 0 1 0 -5.4 0M1741.1 819.9a2.7 2.7 0 1 0 5.4 0a2.7 2.7 0 1 0 -5.4 0M1741.7 803.8a2.7 2.7 0 1 0 5.4 0a2.7 2.7 0 1 0 -5.4 0M1742.2 807.9a2.7 2.7 0 1 0 5.4 0a2.7 2.7 0 1 0 -5.4 0M1742.8 808.5a2.7 2.7 0 1 0 5.4 0a2.7 2.7 0 1 0 -5.4 0M1743.4 817.2a2.7 2.7 0 1 0 5.4 0a2.7 2.7 0 1 0 -5.4 0M1744.0 843.2a2.7 2.7 0 1 0 5.4 0a2.7 2.7 0 1 0 -5.4 0M1744.6 832.3a2.7 2.7 0 1 0 5.4 0a2.7 2.7 0 1 0 -5.4 0M1745.2 814.3a2.7 2.7 0 1 0 5.4 0a2.7 2.7 0 1 0 -5.4 0M1745.8 856.7a2.7 2.7 0 1 0 5.4 0a2.7 2.7 0 1 0 -5.4 0M1746.4 812.9a2.7 2.7 0 1 0 5.4 0a2.7 2.7 0 1 0 -5.4 0M1747.0 842.2a2.7 2.7 0 1 0 5.4 0a2.7 2.7 0 1 0 -5.4 0M1747.6 848.7a2.7 2.7 0 1 0 5.4 0a2.7 2.7 0 1 0 -5.4 0M1748.2 813.6a2.7 2.7 0 1 0 5.4 0a2.7 2.7 0 1 0 -5.4 0M1748.8 798.4a2.7 2.7 0 1 0 5.4 0a2.7 2.7 0 1 0 -5.4 0M1749.3 802.6a2.7 2.7 0 1 0 5.4 0a2.7 2.7 0 1 0 -5.4 0M1749.9 792.8a2.7 2.7 0 1 0 5.4 0a2.7 2.7 0 1 0 -5.4 0M1750.5 790.3a2.7 2.7 0 1 0 5.4 0a2.7 2.7 0 1 0 -5.4 0M1751.1 795.8a2.7 2.7 0 1 0 5.4 0a2.7 2.7 0 1 0 -5.4 0M1751.7 797.5a2.7 2.7 0 1 0 5.4 0a2.7 2.7 0 1 0 -5.4 0M1752.3 842.0a2.7 2.7 0 1 0 5.4 0a2.7 2.7 0 1 0 -5.4 0M1752.9 863.0a2.7 2.7 0 1 0 5.4 0a2.7 2.7 0 1 0 -5.4 0M1753.5 826.1a2.7 2.7 0 1 0 5.4 0a2.7 2.7 0 1 0 -5.4 0M1754.1 817.6a2.7 2.7 0 1 0 5.4 0a2.7 2.7 0 1 0 -5.4 0M1754.7 843.7a2.7 2.7 0 1 0 5.4 0a2.7 2.7 0 1 0 -5.4 0M1755.3 857.6a2.7 2.7 0 1 0 5.4 0a2.7 2.7 0 1 0 -5.4 0M1755.9 853.3a2.7 2.7 0 1 0 5.4 0a2.7 2.7 0 1 0 -5.4 0M1756.4 840.3a2.7 2.7 0 1 0 5.4 0a2.7 2.7 0 1 0 -5.4 0M1757.0 793.0a2.7 2.7 0 1 0 5.4 0a2.7 2.7 0 1 0 -5.4 0M1757.6 804.5a2.7 2.7 0 1 0 5.4 0a2.7 2.7 0 1 0 -5.4 0M1758.2 844.1a2.7 2.7 0 1 0 5.4 0a2.7 2.7 0 1 0 -5.4 0M1758.8 838.9a2.7 2.7 0 1 0 5.4 0a2.7 2.7 0 1 0 -5.4 0M1759.4 831.4a2.7 2.7 0 1 0 5.4 0a2.7 2.7 0 1 0 -5.4 0M1760.0 839.2a2.7 2.7 0 1 0 5.4 0a2.7 2.7 0 1 0 -5.4 0M1760.6 817.8a2.7 2.7 0 1 0 5.4 0a2.7 2.7 0 1 0 -5.4 0M1761.2 812.7a2.7 2.7 0 1 0 5.4 0a2.7 2.7 0 1 0 -5.4 0M1761.8 833.3a2.7 2.7 0 1 0 5.4 0a2.7 2.7 0 1 0 -5.4 0M1762.4 840.0a2.7 2.7 0 1 0 5.4 0a2.7 2.7 0 1 0 -5.4 0M1763.0 834.3a2.7 2.7 0 1 0 5.4 0a2.7 2.7 0 1 0 -5.4 0M1763.5 830.9a2.7 2.7 0 1 0 5.4 0a2.7 2.7 0 1 0 -5.4 0M1764.1 789.8a2.7 2.7 0 1 0 5.4 0a2.7 2.7 0 1 0 -5.4 0M1764.7 811.4a2.7 2.7 0 1 0 5.4 0a2.7 2.7 0 1 0 -5.4 0M1765.3 803.8a2.7 2.7 0 1 0 5.4 0a2.7 2.7 0 1 0 -5.4 0M1765.9 823.5a2.7 2.7 0 1 0 5.4 0a2.7 2.7 0 1 0 -5.4 0M1766.5 813.3a2.7 2.7 0 1 0 5.4 0a2.7 2.7 0 1 0 -5.4 0M1767.1 807.9a2.7 2.7 0 1 0 5.4 0a2.7 2.7 0 1 0 -5.4 0M1767.7 847.5a2.7 2.7 0 1 0 5.4 0a2.7 2.7 0 1 0 -5.4 0M1768.3 839.6a2.7 2.7 0 1 0 5.4 0a2.7 2.7 0 1 0 -5.4 0M1768.9 829.2a2.7 2.7 0 1 0 5.4 0a2.7 2.7 0 1 0 -5.4 0M1769.5 817.3a2.7 2.7 0 1 0 5.4 0a2.7 2.7 0 1 0 -5.4 0M1770.0 813.7a2.7 2.7 0 1 0 5.4 0a2.7 2.7 0 1 0 -5.4 0M1770.6 836.1a2.7 2.7 0 1 0 5.4 0a2.7 2.7 0 1 0 -5.4 0M1771.2 839.2a2.7 2.7 0 1 0 5.4 0a2.7 2.7 0 1 0 -5.4 0M1771.8 858.0a2.7 2.7 0 1 0 5.4 0a2.7 2.7 0 1 0 -5.4 0M1772.4 866.7a2.7 2.7 0 1 0 5.4 0a2.7 2.7 0 1 0 -5.4 0M1773.0 856.5a2.7 2.7 0 1 0 5.4 0a2.7 2.7 0 1 0 -5.4 0M1773.6 841.3a2.7 2.7 0 1 0 5.4 0a2.7 2.7 0 1 0 -5.4 0M1774.2 815.7a2.7 2.7 0 1 0 5.4 0a2.7 2.7 0 1 0 -5.4 0M1774.8 830.0a2.7 2.7 0 1 0 5.4 0a2.7 2.7 0 1 0 -5.4 0M1775.4 812.4a2.7 2.7 0 1 0 5.4 0a2.7 2.7 0 1 0 -5.4 0M1776.0 809.9a2.7 2.7 0 1 0 5.4 0a2.7 2.7 0 1 0 -5.4 0M1776.6 822.5a2.7 2.7 0 1 0 5.4 0a2.7 2.7 0 1 0 -5.4 0M1777.1 790.2a2.7 2.7 0 1 0 5.4 0a2.7 2.7 0 1 0 -5.4 0M1777.7 801.9a2.7 2.7 0 1 0 5.4 0a2.7 2.7 0 1 0 -5.4 0M1778.3 811.5a2.7 2.7 0 1 0 5.4 0a2.7 2.7 0 1 0 -5.4 0M1778.9 811.0a2.7 2.7 0 1 0 5.4 0a2.7 2.7 0 1 0 -5.4 0M1779.5 821.9a2.7 2.7 0 1 0 5.4 0a2.7 2.7 0 1 0 -5.4 0M1780.1 841.0a2.7 2.7 0 1 0 5.4 0a2.7 2.7 0 1 0 -5.4 0M1780.7 845.6a2.7 2.7 0 1 0 5.4 0a2.7 2.7 0 1 0 -5.4 0M1781.3 819.8a2.7 2.7 0 1 0 5.4 0a2.7 2.7 0 1 0 -5.4 0M1781.9 853.0a2.7 2.7 0 1 0 5.4 0a2.7 2.7 0 1 0 -5.4 0M1782.5 850.0a2.7 2.7 0 1 0 5.4 0a2.7 2.7 0 1 0 -5.4 0M1783.1 857.0a2.7 2.7 0 1 0 5.4 0a2.7 2.7 0 1 0 -5.4 0M1783.7 855.3a2.7 2.7 0 1 0 5.4 0a2.7 2.7 0 1 0 -5.4 0M1784.2 824.5a2.7 2.7 0 1 0 5.4 0a2.7 2.7 0 1 0 -5.4 0M1784.8 805.4a2.7 2.7 0 1 0 5.4 0a2.7 2.7 0 1 0 -5.4 0M1785.4 833.6a2.7 2.7 0 1 0 5.4 0a2.7 2.7 0 1 0 -5.4 0M1786.0 818.5a2.7 2.7 0 1 0 5.4 0a2.7 2.7 0 1 0 -5.4 0M1786.6 836.5a2.7 2.7 0 1 0 5.4 0a2.7 2.7 0 1 0 -5.4 0M1787.2 830.1a2.7 2.7 0 1 0 5.4 0a2.7 2.7 0 1 0 -5.4 0M1787.8 852.0a2.7 2.7 0 1 0 5.4 0a2.7 2.7 0 1 0 -5.4 0M1788.4 863.9a2.7 2.7 0 1 0 5.4 0a2.7 2.7 0 1 0 -5.4 0M1789.0 821.8a2.7 2.7 0 1 0 5.4 0a2.7 2.7 0 1 0 -5.4 0M1789.6 824.5a2.7 2.7 0 1 0 5.4 0a2.7 2.7 0 1 0 -5.4 0M1790.2 822.3a2.7 2.7 0 1 0 5.4 0a2.7 2.7 0 1 0 -5.4 0M1790.8 810.0a2.7 2.7 0 1 0 5.4 0a2.7 2.7 0 1 0 -5.4 0M1791.3 797.4a2.7 2.7 0 1 0 5.4 0a2.7 2.7 0 1 0 -5.4 0M1791.9 811.1a2.7 2.7 0 1 0 5.4 0a2.7 2.7 0 1 0 -5.4 0M1792.5 798.2a2.7 2.7 0 1 0 5.4 0a2.7 2.7 0 1 0 -5.4 0M1793.1 790.2a2.7 2.7 0 1 0 5.4 0a2.7 2.7 0 1 0 -5.4 0M1793.7 801.9a2.7 2.7 0 1 0 5.4 0a2.7 2.7 0 1 0 -5.4 0M1794.3 812.1a2.7 2.7 0 1 0 5.4 0a2.7 2.7 0 1 0 -5.4 0M1794.9 819.3a2.7 2.7 0 1 0 5.4 0a2.7 2.7 0 1 0 -5.4 0M1795.5 835.7a2.7 2.7 0 1 0 5.4 0a2.7 2.7 0 1 0 -5.4 0M1796.1 830.6a2.7 2.7 0 1 0 5.4 0a2.7 2.7 0 1 0 -5.4 0M1796.7 840.5a2.7 2.7 0 1 0 5.4 0a2.7 2.7 0 1 0 -5.4 0M1797.3 825.2a2.7 2.7 0 1 0 5.4 0a2.7 2.7 0 1 0 -5.4 0M1797.9 849.2a2.7 2.7 0 1 0 5.4 0a2.7 2.7 0 1 0 -5.4 0M1798.4 844.7a2.7 2.7 0 1 0 5.4 0a2.7 2.7 0 1 0 -5.4 0M1799.0 849.0a2.7 2.7 0 1 0 5.4 0a2.7 2.7 0 1 0 -5.4 0M1799.6 824.5a2.7 2.7 0 1 0 5.4 0a2.7 2.7 0 1 0 -5.4 0M1800.2 839.4a2.7 2.7 0 1 0 5.4 0a2.7 2.7 0 1 0 -5.4 0M1800.8 862.1a2.7 2.7 0 1 0 5.4 0a2.7 2.7 0 1 0 -5.4 0M1801.4 837.3a2.7 2.7 0 1 0 5.4 0a2.7 2.7 0 1 0 -5.4 0M1802.0 859.7a2.7 2.7 0 1 0 5.4 0a2.7 2.7 0 1 0 -5.4 0M1802.6 849.6a2.7 2.7 0 1 0 5.4 0a2.7 2.7 0 1 0 -5.4 0M1803.2 858.6a2.7 2.7 0 1 0 5.4 0a2.7 2.7 0 1 0 -5.4 0M1803.8 852.2a2.7 2.7 0 1 0 5.4 0a2.7 2.7 0 1 0 -5.4 0M1804.4 837.6a2.7 2.7 0 1 0 5.4 0a2.7 2.7 0 1 0 -5.4 0M1804.9 834.6a2.7 2.7 0 1 0 5.4 0a2.7 2.7 0 1 0 -5.4 0M1805.5 837.9a2.7 2.7 0 1 0 5.4 0a2.7 2.7 0 1 0 -5.4 0M1806.1 813.5a2.7 2.7 0 1 0 5.4 0a2.7 2.7 0 1 0 -5.4 0M1806.7 825.4a2.7 2.7 0 1 0 5.4 0a2.7 2.7 0 1 0 -5.4 0M1807.3 954.7a2.7 2.7 0 1 0 5.4 0a2.7 2.7 0 1 0 -5.4 0M1807.9 956.0a2.7 2.7 0 1 0 5.4 0a2.7 2.7 0 1 0 -5.4 0M1808.5 875.4a2.7 2.7 0 1 0 5.4 0a2.7 2.7 0 1 0 -5.4 0M1809.1 871.4a2.7 2.7 0 1 0 5.4 0a2.7 2.7 0 1 0 -5.4 0M1809.7 872.2a2.7 2.7 0 1 0 5.4 0a2.7 2.7 0 1 0 -5.4 0M1810.3 857.7a2.7 2.7 0 1 0 5.4 0a2.7 2.7 0 1 0 -5.4 0M1810.9 878.6a2.7 2.7 0 1 0 5.4 0a2.7 2.7 0 1 0 -5.4 0M1811.5 854.5a2.7 2.7 0 1 0 5.4 0a2.7 2.7 0 1 0 -5.4 0M1812.0 859.9a2.7 2.7 0 1 0 5.4 0a2.7 2.7 0 1 0 -5.4 0M1812.6 844.4a2.7 2.7 0 1 0 5.4 0a2.7 2.7 0 1 0 -5.4 0M1813.2 944.3a2.7 2.7 0 1 0 5.4 0a2.7 2.7 0 1 0 -5.4 0M1813.8 943.3a2.7 2.7 0 1 0 5.4 0a2.7 2.7 0 1 0 -5.4 0M1814.4 853.2a2.7 2.7 0 1 0 5.4 0a2.7 2.7 0 1 0 -5.4 0M1815.0 859.6a2.7 2.7 0 1 0 5.4 0a2.7 2.7 0 1 0 -5.4 0M1815.6 839.6a2.7 2.7 0 1 0 5.4 0a2.7 2.7 0 1 0 -5.4 0M1816.2 853.2a2.7 2.7 0 1 0 5.4 0a2.7 2.7 0 1 0 -5.4 0M1816.8 844.2a2.7 2.7 0 1 0 5.4 0a2.7 2.7 0 1 0 -5.4 0M1817.4 867.4a2.7 2.7 0 1 0 5.4 0a2.7 2.7 0 1 0 -5.4 0M1818.0 876.5a2.7 2.7 0 1 0 5.4 0a2.7 2.7 0 1 0 -5.4 0M1818.6 860.9a2.7 2.7 0 1 0 5.4 0a2.7 2.7 0 1 0 -5.4 0M1819.1 858.2a2.7 2.7 0 1 0 5.4 0a2.7 2.7 0 1 0 -5.4 0M1819.7 855.6a2.7 2.7 0 1 0 5.4 0a2.7 2.7 0 1 0 -5.4 0M1820.3 858.1a2.7 2.7 0 1 0 5.4 0a2.7 2.7 0 1 0 -5.4 0M1820.9 831.2a2.7 2.7 0 1 0 5.4 0a2.7 2.7 0 1 0 -5.4 0M1821.5 854.9a2.7 2.7 0 1 0 5.4 0a2.7 2.7 0 1 0 -5.4 0M1822.1 851.5a2.7 2.7 0 1 0 5.4 0a2.7 2.7 0 1 0 -5.4 0M1822.7 847.1a2.7 2.7 0 1 0 5.4 0a2.7 2.7 0 1 0 -5.4 0M1823.3 950.0a2.7 2.7 0 1 0 5.4 0a2.7 2.7 0 1 0 -5.4 0M1823.9 936.5a2.7 2.7 0 1 0 5.4 0a2.7 2.7 0 1 0 -5.4 0M1824.5 843.2a2.7 2.7 0 1 0 5.4 0a2.7 2.7 0 1 0 -5.4 0M1825.1 844.7a2.7 2.7 0 1 0 5.4 0a2.7 2.7 0 1 0 -5.4 0M1825.7 841.1a2.7 2.7 0 1 0 5.4 0a2.7 2.7 0 1 0 -5.4 0M1826.2 881.8a2.7 2.7 0 1 0 5.4 0a2.7 2.7 0 1 0 -5.4 0M1826.8 839.3a2.7 2.7 0 1 0 5.4 0a2.7 2.7 0 1 0 -5.4 0M1827.4 867.3a2.7 2.7 0 1 0 5.4 0a2.7 2.7 0 1 0 -5.4 0M1828.0 879.1a2.7 2.7 0 1 0 5.4 0a2.7 2.7 0 1 0 -5.4 0M1828.6 849.6a2.7 2.7 0 1 0 5.4 0a2.7 2.7 0 1 0 -5.4 0M1829.2 877.7a2.7 2.7 0 1 0 5.4 0a2.7 2.7 0 1 0 -5.4 0M1829.8 850.9a2.7 2.7 0 1 0 5.4 0a2.7 2.7 0 1 0 -5.4 0M1830.4 840.0a2.7 2.7 0 1 0 5.4 0a2.7 2.7 0 1 0 -5.4 0M1831.0 841.7a2.7 2.7 0 1 0 5.4 0a2.7 2.7 0 1 0 -5.4 0M1831.6 832.9a2.7 2.7 0 1 0 5.4 0a2.7 2.7 0 1 0 -5.4 0M1832.2 829.6a2.7 2.7 0 1 0 5.4 0a2.7 2.7 0 1 0 -5.4 0M1832.8 831.8a2.7 2.7 0 1 0 5.4 0a2.7 2.7 0 1 0 -5.4 0M1833.3 825.7a2.7 2.7 0 1 0 5.4 0a2.7 2.7 0 1 0 -5.4 0M1833.9 814.7a2.7 2.7 0 1 0 5.4 0a2.7 2.7 0 1 0 -5.4 0M1834.5 843.5a2.7 2.7 0 1 0 5.4 0a2.7 2.7 0 1 0 -5.4 0M1835.1 857.0a2.7 2.7 0 1 0 5.4 0a2.7 2.7 0 1 0 -5.4 0M1835.7 866.9a2.7 2.7 0 1 0 5.4 0a2.7 2.7 0 1 0 -5.4 0M1836.3 868.8a2.7 2.7 0 1 0 5.4 0a2.7 2.7 0 1 0 -5.4 0" fill="#dcb22e"/>
<polyline points="1399.5,728.0 1400.1,733.8 1400.7,725.5 1401.3,758.4 1401.9,749.9 1402.5,741.8 1403.0,770.1 1403.6,779.6 1404.2,835.9 1404.8,847.8 1405.4,822.8 1406.0,818.6 1406.6,863.4 1407.2,878.3 1407.8,896.0 1408.4,871.1 1409.0,864.1 1409.6,898.8 1410.1,869.9 1410.7,883.1 1411.3,879.5 1411.9,848.9 1412.5,878.8 1413.1,871.8 1413.7,850.5 1414.3,823.9 1414.9,847.6 1415.5,887.3 1416.1,915.3 1416.7,865.5 1417.2,814.5 1417.8,798.0 1418.4,798.1 1419.0,757.8 1419.6,782.0 1420.2,738.1 1420.8,713.8 1421.4,756.7 1422.0,810.3 1422.6,885.7 1423.2,906.4 1423.8,927.6 1424.3,934.1 1424.9,922.6 1425.5,939.2 1426.1,925.3 1426.7,911.4 1427.3,931.0 1427.9,935.3 1428.5,916.1 1429.1,935.4 1429.7,943.1 1430.3,937.5 1430.9,950.1 1431.4,948.4 1432.0,935.7 1432.6,937.5 1433.2,934.9 1433.8,929.2 1434.4,929.2 1435.0,934.7 1435.6,945.7 1436.2,951.9 1436.8,952.4 1437.4,950.4 1437.9,955.1 1438.5,955.8 1439.1,957.0 1439.7,948.5 1440.3,949.8 1440.9,948.4 1441.5,937.5 1442.1,939.6 1442.7,948.4 1443.3,948.1 1443.9,937.7 1444.5,948.8 1445.0,944.6 1445.6,941.8 1446.2,940.6 1446.8,932.4 1447.4,941.3 1448.0,947.7 1448.6,943.9 1449.2,945.8 1449.8,936.7 1450.4,930.4 1451.0,929.2 1451.6,939.6 1452.1,941.9 1452.7,948.8 1453.3,946.8 1453.9,915.2 1454.5,889.9 1455.1,880.7 1455.7,875.7 1456.3,866.6 1456.9,889.2 1457.5,892.7 1458.1,898.3 1458.7,931.0 1459.2,912.1 1459.8,912.6 1460.4,935.3 1461.0,941.9 1461.6,931.9 1462.2,940.8 1462.8,937.5 1463.4,946.9 1464.0,938.0 1464.6,946.8 1465.2,936.9 1465.8,942.8 1466.3,949.5 1466.9,939.3 1467.5,941.4 1468.1,944.1 1468.7,939.2 1469.3,945.9 1469.9,949.5 1470.5,951.1 1471.1,953.6 1471.7,952.2 1472.3,948.5 1472.8,948.6 1473.4,947.7 1474.0,947.0 1474.6,947.8 1475.2,953.5 1475.8,954.5 1476.4,948.9 1477.0,950.5 1477.6,948.8 1478.2,952.8 1478.8,953.5 1479.4,948.5 1479.9,948.0 1480.5,943.7 1481.1,944.7 1481.7,946.4 1482.3,948.0 1482.9,948.5 1483.5,946.4 1484.1,943.1 1484.7,944.6 1485.3,943.1 1485.9,949.6 1486.5,953.5 1487.0,955.4 1487.6,949.7 1488.2,952.8 1488.8,949.3 1489.4,944.8 1490.0,949.6 1490.6,950.3 1491.2,944.2 1491.8,949.9 1492.4,949.2 1493.0,952.1 1493.6,948.3 1494.1,947.9 1494.7,953.2 1495.3,950.0 1495.9,953.7 1496.5,948.6 1497.1,952.7 1497.7,955.3 1498.3,954.6 1498.9,952.9 1499.5,947.7 1500.1,951.8 1500.7,949.7 1501.2,953.4 1501.8,949.4 1502.4,953.4 1503.0,950.0 1503.6,953.6 1504.2,955.5 1504.8,953.1 1505.4,950.6 1506.0,952.1 1506.6,950.4 1507.2,953.5 1507.7,955.6 1508.3,954.5 1508.9,949.3 1509.5,949.1 1510.1,950.5 1510.7,952.2 1511.3,948.2 1511.9,951.7 1512.5,945.7 1513.1,943.4 1513.7,945.9 1514.3,948.4 1514.8,946.5 1515.4,949.2 1516.0,946.7 1516.6,948.7 1517.2,953.2 1517.8,955.3 1518.4,954.8 1519.0,955.9 1519.6,949.2 1520.2,951.2 1520.8,952.2 1521.4,954.0 1521.9,954.0 1522.5,946.7 1523.1,950.4 1523.7,951.6 1524.3,955.1 1524.9,952.6 1525.5,953.8 1526.1,956.1 1526.7,956.5 1527.3,957.0 1527.9,955.5 1528.5,951.8 1529.0,947.8 1529.6,945.8 1530.2,948.9 1530.8,946.5 1531.4,949.0 1532.0,954.4 1532.6,954.4 1533.2,955.7 1533.8,956.3 1534.4,956.3 1535.0,955.9 1535.5,955.9 1536.1,955.8 1536.7,956.3 1537.3,956.6 1537.9,956.8 1538.5,956.5 1539.1,956.2 1539.7,956.2 1540.3,955.9 1540.9,956.0 1541.5,955.9 1542.1,955.8 1542.6,956.4 1543.2,956.1 1543.8,955.8 1544.4,956.0 1545.0,956.1 1545.6,955.8 1546.2,955.8 1546.8,956.4 1547.4,956.0 1548.0,956.0 1548.6,956.5 1549.2,956.2 1549.7,956.0 1550.3,956.1 1550.9,956.1 1551.5,955.7 1552.1,955.6 1552.7,956.3 1553.3,955.9 1553.9,956.1 1554.5,956.4 1555.1,956.6 1555.7,956.8 1556.3,956.0 1556.8,955.7 1557.4,955.6 1558.0,956.1 1558.6,956.1 1559.2,956.7 1559.8,956.5 1560.4,956.7 1561.0,956.7 1561.6,956.9 1562.2,956.3 1562.8,955.7 1563.4,955.6 1563.9,955.9 1564.5,955.6 1565.1,956.0 1565.7,956.3 1566.3,956.6 1566.9,956.6 1567.5,956.7 1568.1,956.5 1568.7,956.5 1569.3,955.9 1569.9,955.9 1570.4,949.5 1571.0,941.4 1571.6,933.4 1572.2,925.3 1572.8,930.7 1573.4,910.2 1574.0,913.4 1574.6,922.5 1575.2,890.4 1575.8,890.4 1576.4,895.6 1577.0,921.2 1577.5,932.2 1578.1,921.1 1578.7,886.4 1579.3,897.0 1579.9,919.8 1580.5,921.8 1581.1,929.5 1581.7,910.4 1582.3,863.2 1582.9,852.8 1583.5,878.8 1584.1,934.4 1584.6,887.0 1585.2,895.7 1585.8,876.2 1586.4,907.5 1587.0,915.9 1587.6,888.0 1588.2,885.6 1588.8,923.9 1589.4,902.7 1590.0,908.6 1590.6,921.8 1591.2,911.0 1591.7,908.0 1592.3,930.9 1592.9,932.0 1593.5,920.9 1594.1,924.4 1594.7,926.8 1595.3,941.7 1595.9,943.6 1596.5,927.5 1597.1,939.3 1597.7,921.4 1598.3,936.8 1598.8,922.7 1599.4,921.1 1600.0,905.0 1600.6,917.6 1601.2,878.3 1601.8,866.4 1602.4,899.5 1603.0,867.1 1603.6,897.5 1604.2,900.0 1604.8,906.8 1605.3,893.1 1605.9,916.4 1606.5,921.2 1607.1,900.3 1607.7,879.6 1608.3,889.7 1608.9,865.6 1609.5,865.6 1610.1,897.5 1610.7,914.0 1611.3,909.1 1611.9,924.7 1612.4,903.4 1613.0,926.8 1613.6,934.6 1614.2,942.8 1614.8,951.2 1615.4,904.4 1616.0,886.4 1616.6,864.7 1617.2,902.8 1617.8,884.4 1618.4,880.1 1619.0,899.2 1619.5,923.2 1620.1,928.4 1620.7,884.0 1621.3,864.2 1621.9,888.1 1622.5,869.9 1623.1,916.8 1623.7,918.7 1624.3,931.6 1624.9,890.2 1625.5,901.7 1626.1,881.8 1626.6,923.5 1627.2,883.2 1627.8,872.6 1628.4,897.6 1629.0,864.4 1629.6,899.0 1630.2,912.5 1630.8,939.6 1631.4,889.1 1632.0,852.6 1632.6,892.1 1633.2,849.3 1633.7,876.1 1634.3,886.1 1634.9,842.6 1635.5,839.7 1636.1,844.7 1636.7,854.2 1637.3,890.7 1637.9,874.2 1638.5,844.4 1639.1,831.9 1639.7,863.2 1640.2,940.2 1640.8,908.5 1641.4,926.1 1642.0,942.5 1642.6,925.6 1643.2,937.5 1643.8,930.2 1644.4,924.0 1645.0,925.8 1645.6,924.2 1646.2,932.8 1646.8,935.5 1647.3,946.2 1647.9,952.1 1648.5,951.5 1649.1,953.7 1649.7,955.3 1650.3,955.8 1650.9,955.4 1651.5,955.5 1652.1,955.1 1652.7,956.0 1653.3,956.4 1653.9,955.2 1654.4,954.5 1655.0,954.3 1655.6,955.0 1656.2,954.0 1656.8,954.1 1657.4,955.2 1658.0,955.9 1658.6,947.6 1659.2,929.0 1659.8,933.3 1660.4,911.7 1661.0,918.1 1661.5,898.7 1662.1,922.8 1662.7,920.6 1663.3,908.1 1663.9,923.4 1664.5,920.6 1665.1,923.7 1665.7,925.2 1666.3,924.2 1666.9,899.8 1667.5,910.4 1668.1,898.5 1668.6,926.4 1669.2,922.4 1669.8,921.0 1670.4,917.8 1671.0,935.6 1671.6,918.3 1672.2,933.1 1672.8,929.0 1673.4,936.3 1674.0,924.5 1674.6,935.7 1675.1,911.1 1675.7,925.4 1676.3,897.7 1676.9,905.1 1677.5,886.6 1678.1,886.8 1678.7,887.0 1679.3,887.3 1679.9,899.2 1680.5,893.0 1681.1,920.3 1681.7,923.0 1682.2,939.1 1682.8,930.2 1683.4,945.7 1684.0,938.1 1684.6,935.5 1685.2,937.7 1685.8,931.6 1686.4,931.9 1687.0,930.9 1687.6,928.3 1688.2,943.4 1688.8,931.4 1689.3,906.2 1689.9,906.8 1690.5,905.4 1691.1,925.4 1691.7,936.7 1692.3,916.3 1692.9,893.3 1693.5,870.3 1694.1,873.0 1694.7,873.6 1695.3,834.0 1695.9,828.9 1696.4,824.3 1697.0,864.4 1697.6,862.0 1698.2,819.0 1698.8,806.3 1699.4,865.2 1700.0,830.6 1700.6,794.3 1701.2,790.0 1701.8,804.9 1702.4,846.1 1703.0,837.4 1703.5,875.5 1704.1,882.6 1704.7,838.0 1705.3,860.1 1705.9,874.7 1706.5,833.4 1707.1,780.9 1707.7,781.8 1708.3,831.7 1708.9,802.4 1709.5,750.6 1710.0,727.6 1710.6,766.1 1711.2,781.2 1711.8,752.0 1712.4,724.0 1713.0,729.8 1713.6,738.3 1714.2,775.8 1714.8,825.9 1715.4,785.5 1716.0,773.0 1716.6,810.9 1717.1,767.5 1717.7,820.8 1718.3,706.8 1718.9,679.0 1719.5,748.5 1720.1,760.4 1720.7,808.7 1721.3,822.5 1721.9,847.1 1722.5,773.0 1723.1,790.0 1723.7,845.7 1724.2,815.3 1724.8,788.9 1725.4,736.2 1726.0,796.1 1726.6,849.9 1727.2,839.3 1727.8,870.5 1728.4,889.7 1729.0,806.9 1729.6,842.0 1730.2,827.4 1730.8,783.5 1731.3,820.0 1731.9,867.2 1732.5,814.2 1733.1,870.0 1733.7,822.1 1734.3,794.7 1734.9,839.7 1735.5,763.1 1736.1,741.5 1736.7,795.4 1737.3,806.9 1737.8,813.6 1738.4,791.2 1739.0,839.0 1739.6,787.4 1740.2,787.2 1740.8,838.8 1741.4,828.0 1742.0,827.3 1742.6,829.9 1743.2,873.5 1743.8,874.6 1744.4,877.5 1744.9,894.9 1745.5,875.7 1746.1,866.6 1746.7,889.2 1747.3,915.5 1747.9,931.9 1748.5,937.4 1749.1,942.2 1749.7,934.8 1750.3,944.7 1750.9,919.5 1751.5,903.2 1752.0,928.9 1752.6,927.3 1753.2,901.1 1753.8,929.0 1754.4,896.7 1755.0,925.3 1755.6,939.6 1756.2,907.7 1756.8,901.5 1757.4,898.2 1758.0,927.5 1758.6,905.6 1759.1,919.0 1759.7,941.6 1760.3,940.3 1760.9,935.2 1761.5,898.6 1762.1,883.7 1762.7,924.2 1763.3,922.7 1763.9,926.8 1764.5,918.7 1765.1,895.3 1765.7,884.5 1766.2,926.1 1766.8,905.9 1767.4,936.1 1768.0,927.0 1768.6,937.6 1769.2,935.2 1769.8,938.2 1770.4,938.8 1771.0,917.8 1771.6,936.7 1772.2,947.2 1772.7,923.6 1773.3,913.0 1773.9,919.4 1774.5,896.1 1775.1,887.2 1775.7,913.2 1776.3,889.7 1776.9,906.9 1777.5,924.0 1778.1,916.3 1778.7,898.0 1779.3,912.2 1779.8,930.8 1780.4,910.9 1781.0,929.2 1781.6,901.6 1782.2,927.0 1782.8,891.4 1783.4,917.6 1784.0,897.2 1784.6,922.8 1785.2,930.1 1785.8,915.9 1786.4,920.8 1786.9,875.6 1787.5,915.4 1788.1,935.3 1788.7,882.1 1789.3,869.3 1789.9,905.1 1790.5,929.7 1791.1,922.6 1791.7,917.5 1792.3,890.6 1792.9,879.6 1793.5,875.7 1794.0,866.6 1794.6,870.9 1795.2,878.7 1795.8,896.2 1796.4,884.4 1797.0,876.6 1797.6,874.9 1798.2,882.3 1798.8,910.1 1799.4,934.9 1800.0,915.5 1800.6,911.1 1801.1,918.8 1801.7,913.2 1802.3,907.4 1802.9,928.2 1803.5,910.9 1804.1,915.4 1804.7,938.7 1805.3,945.0 1805.9,913.4 1806.5,934.9 1807.1,926.3 1807.6,922.8 1808.2,905.1 1808.8,916.2 1809.4,931.5 1810.0,931.2 1810.6,942.8 1811.2,939.2 1811.8,940.6 1812.4,951.6 1813.0,941.7 1813.6,938.7 1814.2,942.5 1814.7,911.7 1815.3,928.8 1815.9,929.8 1816.5,900.7 1817.1,894.5 1817.7,910.1 1818.3,933.5 1818.9,934.8 1819.5,915.0 1820.1,920.3 1820.7,919.8 1821.3,907.0 1821.8,902.2 1822.4,917.2 1823.0,924.4 1823.6,944.2 1824.2,944.5 1824.8,944.1 1825.4,939.6 1826.0,929.1 1826.6,913.0 1827.2,936.9 1827.8,919.6 1828.4,937.3 1828.9,930.4 1829.5,946.4 1830.1,935.6 1830.7,946.3 1831.3,948.1 1831.9,946.3 1832.5,929.6 1833.1,941.7 1833.7,936.2 1834.3,931.8 1834.9,926.4 1835.5,939.6 1836.0,938.3 1836.6,940.0 1837.2,938.2 1837.8,936.1 1838.4,941.4 1839.0,942.9" fill="none" stroke="#e04a24" stroke-width="1.3" stroke-linejoin="round"/><path d="M1396.8 728.0a2.7 2.7 0 1 0 5.4 0a2.7 2.7 0 1 0 -5.4 0M1397.4 733.8a2.7 2.7 0 1 0 5.4 0a2.7 2.7 0 1 0 -5.4 0M1398.0 725.5a2.7 2.7 0 1 0 5.4 0a2.7 2.7 0 1 0 -5.4 0M1398.6 758.4a2.7 2.7 0 1 0 5.4 0a2.7 2.7 0 1 0 -5.4 0M1399.2 749.9a2.7 2.7 0 1 0 5.4 0a2.7 2.7 0 1 0 -5.4 0M1399.8 741.8a2.7 2.7 0 1 0 5.4 0a2.7 2.7 0 1 0 -5.4 0M1400.3 770.1a2.7 2.7 0 1 0 5.4 0a2.7 2.7 0 1 0 -5.4 0M1400.9 779.6a2.7 2.7 0 1 0 5.4 0a2.7 2.7 0 1 0 -5.4 0M1401.5 835.9a2.7 2.7 0 1 0 5.4 0a2.7 2.7 0 1 0 -5.4 0M1402.1 847.8a2.7 2.7 0 1 0 5.4 0a2.7 2.7 0 1 0 -5.4 0M1402.7 822.8a2.7 2.7 0 1 0 5.4 0a2.7 2.7 0 1 0 -5.4 0M1403.3 818.6a2.7 2.7 0 1 0 5.4 0a2.7 2.7 0 1 0 -5.4 0M1403.9 863.4a2.7 2.7 0 1 0 5.4 0a2.7 2.7 0 1 0 -5.4 0M1404.5 878.3a2.7 2.7 0 1 0 5.4 0a2.7 2.7 0 1 0 -5.4 0M1405.1 896.0a2.7 2.7 0 1 0 5.4 0a2.7 2.7 0 1 0 -5.4 0M1405.7 871.1a2.7 2.7 0 1 0 5.4 0a2.7 2.7 0 1 0 -5.4 0M1406.3 864.1a2.7 2.7 0 1 0 5.4 0a2.7 2.7 0 1 0 -5.4 0M1406.9 898.8a2.7 2.7 0 1 0 5.4 0a2.7 2.7 0 1 0 -5.4 0M1407.4 869.9a2.7 2.7 0 1 0 5.4 0a2.7 2.7 0 1 0 -5.4 0M1408.0 883.1a2.7 2.7 0 1 0 5.4 0a2.7 2.7 0 1 0 -5.4 0M1408.6 879.5a2.7 2.7 0 1 0 5.4 0a2.7 2.7 0 1 0 -5.4 0M1409.2 848.9a2.7 2.7 0 1 0 5.4 0a2.7 2.7 0 1 0 -5.4 0M1409.8 878.8a2.7 2.7 0 1 0 5.4 0a2.7 2.7 0 1 0 -5.4 0M1410.4 871.8a2.7 2.7 0 1 0 5.4 0a2.7 2.7 0 1 0 -5.4 0M1411.0 850.5a2.7 2.7 0 1 0 5.4 0a2.7 2.7 0 1 0 -5.4 0M1411.6 823.9a2.7 2.7 0 1 0 5.4 0a2.7 2.7 0 1 0 -5.4 0M1412.2 847.6a2.7 2.7 0 1 0 5.4 0a2.7 2.7 0 1 0 -5.4 0M1412.8 887.3a2.7 2.7 0 1 0 5.4 0a2.7 2.7 0 1 0 -5.4 0M1413.4 915.3a2.7 2.7 0 1 0 5.4 0a2.7 2.7 0 1 0 -5.4 0M1414.0 865.5a2.7 2.7 0 1 0 5.4 0a2.7 2.7 0 1 0 -5.4 0M1414.5 814.5a2.7 2.7 0 1 0 5.4 0a2.7 2.7 0 1 0 -5.4 0M1415.1 798.0a2.7 2.7 0 1 0 5.4 0a2.7 2.7 0 1 0 -5.4 0M1415.7 798.1a2.7 2.7 0 1 0 5.4 0a2.7 2.7 0 1 0 -5.4 0M1416.3 757.8a2.7 2.7 0 1 0 5.4 0a2.7 2.7 0 1 0 -5.4 0M1416.9 782.0a2.7 2.7 0 1 0 5.4 0a2.7 2.7 0 1 0 -5.4 0M1417.5 738.1a2.7 2.7 0 1 0 5.4 0a2.7 2.7 0 1 0 -5.4 0M1418.1 713.8a2.7 2.7 0 1 0 5.4 0a2.7 2.7 0 1 0 -5.4 0M1418.7 756.7a2.7 2.7 0 1 0 5.4 0a2.7 2.7 0 1 0 -5.4 0M1419.3 810.3a2.7 2.7 0 1 0 5.4 0a2.7 2.7 0 1 0 -5.4 0M1419.9 885.7a2.7 2.7 0 1 0 5.4 0a2.7 2.7 0 1 0 -5.4 0M1420.5 906.4a2.7 2.7 0 1 0 5.4 0a2.7 2.7 0 1 0 -5.4 0M1421.1 927.6a2.7 2.7 0 1 0 5.4 0a2.7 2.7 0 1 0 -5.4 0M1421.6 934.1a2.7 2.7 0 1 0 5.4 0a2.7 2.7 0 1 0 -5.4 0M1422.2 922.6a2.7 2.7 0 1 0 5.4 0a2.7 2.7 0 1 0 -5.4 0M1422.8 939.2a2.7 2.7 0 1 0 5.4 0a2.7 2.7 0 1 0 -5.4 0M1423.4 925.3a2.7 2.7 0 1 0 5.4 0a2.7 2.7 0 1 0 -5.4 0M1424.0 911.4a2.7 2.7 0 1 0 5.4 0a2.7 2.7 0 1 0 -5.4 0M1424.6 931.0a2.7 2.7 0 1 0 5.4 0a2.7 2.7 0 1 0 -5.4 0M1425.2 935.3a2.7 2.7 0 1 0 5.4 0a2.7 2.7 0 1 0 -5.4 0M1425.8 916.1a2.7 2.7 0 1 0 5.4 0a2.7 2.7 0 1 0 -5.4 0M1426.4 935.4a2.7 2.7 0 1 0 5.4 0a2.7 2.7 0 1 0 -5.4 0M1427.0 943.1a2.7 2.7 0 1 0 5.4 0a2.7 2.7 0 1 0 -5.4 0M1427.6 937.5a2.7 2.7 0 1 0 5.4 0a2.7 2.7 0 1 0 -5.4 0M1428.2 950.1a2.7 2.7 0 1 0 5.4 0a2.7 2.7 0 1 0 -5.4 0M1428.7 948.4a2.7 2.7 0 1 0 5.4 0a2.7 2.7 0 1 0 -5.4 0M1429.3 935.7a2.7 2.7 0 1 0 5.4 0a2.7 2.7 0 1 0 -5.4 0M1429.9 937.5a2.7 2.7 0 1 0 5.4 0a2.7 2.7 0 1 0 -5.4 0M1430.5 934.9a2.7 2.7 0 1 0 5.4 0a2.7 2.7 0 1 0 -5.4 0M1431.1 929.2a2.7 2.7 0 1 0 5.4 0a2.7 2.7 0 1 0 -5.4 0M1431.7 929.2a2.7 2.7 0 1 0 5.4 0a2.7 2.7 0 1 0 -5.4 0M1432.3 934.7a2.7 2.7 0 1 0 5.4 0a2.7 2.7 0 1 0 -5.4 0M1432.9 945.7a2.7 2.7 0 1 0 5.4 0a2.7 2.7 0 1 0 -5.4 0M1433.5 951.9a2.7 2.7 0 1 0 5.4 0a2.7 2.7 0 1 0 -5.4 0M1434.1 952.4a2.7 2.7 0 1 0 5.4 0a2.7 2.7 0 1 0 -5.4 0M1434.7 950.4a2.7 2.7 0 1 0 5.4 0a2.7 2.7 0 1 0 -5.4 0M1435.2 955.1a2.7 2.7 0 1 0 5.4 0a2.7 2.7 0 1 0 -5.4 0M1435.8 955.8a2.7 2.7 0 1 0 5.4 0a2.7 2.7 0 1 0 -5.4 0M1436.4 957.0a2.7 2.7 0 1 0 5.4 0a2.7 2.7 0 1 0 -5.4 0M1437.0 948.5a2.7 2.7 0 1 0 5.4 0a2.7 2.7 0 1 0 -5.4 0M1437.6 949.8a2.7 2.7 0 1 0 5.4 0a2.7 2.7 0 1 0 -5.4 0M1438.2 948.4a2.7 2.7 0 1 0 5.4 0a2.7 2.7 0 1 0 -5.4 0M1438.8 937.5a2.7 2.7 0 1 0 5.4 0a2.7 2.7 0 1 0 -5.4 0M1439.4 939.6a2.7 2.7 0 1 0 5.4 0a2.7 2.7 0 1 0 -5.4 0M1440.0 948.4a2.7 2.7 0 1 0 5.4 0a2.7 2.7 0 1 0 -5.4 0M1440.6 948.1a2.7 2.7 0 1 0 5.4 0a2.7 2.7 0 1 0 -5.4 0M1441.2 937.7a2.7 2.7 0 1 0 5.4 0a2.7 2.7 0 1 0 -5.4 0M1441.8 948.8a2.7 2.7 0 1 0 5.4 0a2.7 2.7 0 1 0 -5.4 0M1442.3 944.6a2.7 2.7 0 1 0 5.4 0a2.7 2.7 0 1 0 -5.4 0M1442.9 941.8a2.7 2.7 0 1 0 5.4 0a2.7 2.7 0 1 0 -5.4 0M1443.5 940.6a2.7 2.7 0 1 0 5.4 0a2.7 2.7 0 1 0 -5.4 0M1444.1 932.4a2.7 2.7 0 1 0 5.4 0a2.7 2.7 0 1 0 -5.4 0M1444.7 941.3a2.7 2.7 0 1 0 5.4 0a2.7 2.7 0 1 0 -5.4 0M1445.3 947.7a2.7 2.7 0 1 0 5.4 0a2.7 2.7 0 1 0 -5.4 0M1445.9 943.9a2.7 2.7 0 1 0 5.4 0a2.7 2.7 0 1 0 -5.4 0M1446.5 945.8a2.7 2.7 0 1 0 5.4 0a2.7 2.7 0 1 0 -5.4 0M1447.1 936.7a2.7 2.7 0 1 0 5.4 0a2.7 2.7 0 1 0 -5.4 0M1447.7 930.4a2.7 2.7 0 1 0 5.4 0a2.7 2.7 0 1 0 -5.4 0M1448.3 929.2a2.7 2.7 0 1 0 5.4 0a2.7 2.7 0 1 0 -5.4 0M1448.9 939.6a2.7 2.7 0 1 0 5.4 0a2.7 2.7 0 1 0 -5.4 0M1449.4 941.9a2.7 2.7 0 1 0 5.4 0a2.7 2.7 0 1 0 -5.4 0M1450.0 948.8a2.7 2.7 0 1 0 5.4 0a2.7 2.7 0 1 0 -5.4 0M1450.6 946.8a2.7 2.7 0 1 0 5.4 0a2.7 2.7 0 1 0 -5.4 0M1451.2 915.2a2.7 2.7 0 1 0 5.4 0a2.7 2.7 0 1 0 -5.4 0M1451.8 889.9a2.7 2.7 0 1 0 5.4 0a2.7 2.7 0 1 0 -5.4 0M1452.4 880.7a2.7 2.7 0 1 0 5.4 0a2.7 2.7 0 1 0 -5.4 0M1453.0 875.7a2.7 2.7 0 1 0 5.4 0a2.7 2.7 0 1 0 -5.4 0M1453.6 866.6a2.7 2.7 0 1 0 5.4 0a2.7 2.7 0 1 0 -5.4 0M1454.2 889.2a2.7 2.7 0 1 0 5.4 0a2.7 2.7 0 1 0 -5.4 0M1454.8 892.7a2.7 2.7 0 1 0 5.4 0a2.7 2.7 0 1 0 -5.4 0M1455.4 898.3a2.7 2.7 0 1 0 5.4 0a2.7 2.7 0 1 0 -5.4 0M1456.0 931.0a2.7 2.7 0 1 0 5.4 0a2.7 2.7 0 1 0 -5.4 0M1456.5 912.1a2.7 2.7 0 1 0 5.4 0a2.7 2.7 0 1 0 -5.4 0M1457.1 912.6a2.7 2.7 0 1 0 5.4 0a2.7 2.7 0 1 0 -5.4 0M1457.7 935.3a2.7 2.7 0 1 0 5.4 0a2.7 2.7 0 1 0 -5.4 0M1458.3 941.9a2.7 2.7 0 1 0 5.4 0a2.7 2.7 0 1 0 -5.4 0M1458.9 931.9a2.7 2.7 0 1 0 5.4 0a2.7 2.7 0 1 0 -5.4 0M1459.5 940.8a2.7 2.7 0 1 0 5.4 0a2.7 2.7 0 1 0 -5.4 0M1460.1 937.5a2.7 2.7 0 1 0 5.4 0a2.7 2.7 0 1 0 -5.4 0M1460.7 946.9a2.7 2.7 0 1 0 5.4 0a2.7 2.7 0 1 0 -5.4 0M1461.3 938.0a2.7 2.7 0 1 0 5.4 0a2.7 2.7 0 1 0 -5.4 0M1461.9 946.8a2.7 2.7 0 1 0 5.4 0a2.7 2.7 0 1 0 -5.4 0M1462.5 936.9a2.7 2.7 0 1 0 5.4 0a2.7 2.7 0 1 0 -5.4 0M1463.1 942.8a2.7 2.7 0 1 0 5.4 0a2.7 2.7 0 1 0 -5.4 0M1463.6 949.5a2.7 2.7 0 1 0 5.4 0a2.7 2.7 0 1 0 -5.4 0M1464.2 939.3a2.7 2.7 0 1 0 5.4 0a2.7 2.7 0 1 0 -5.4 0M1464.8 941.4a2.7 2.7 0 1 0 5.4 0a2.7 2.7 0 1 0 -5.4 0M1465.4 944.1a2.7 2.7 0 1 0 5.4 0a2.7 2.7 0 1 0 -5.4 0M1466.0 939.2a2.7 2.7 0 1 0 5.4 0a2.7 2.7 0 1 0 -5.4 0M1466.6 945.9a2.7 2.7 0 1 0 5.4 0a2.7 2.7 0 1 0 -5.4 0M1467.2 949.5a2.7 2.7 0 1 0 5.4 0a2.7 2.7 0 1 0 -5.4 0M1467.8 951.1a2.7 2.7 0 1 0 5.4 0a2.7 2.7 0 1 0 -5.4 0M1468.4 953.6a2.7 2.7 0 1 0 5.4 0a2.7 2.7 0 1 0 -5.4 0M1469.0 952.2a2.7 2.7 0 1 0 5.4 0a2.7 2.7 0 1 0 -5.4 0M1469.6 948.5a2.7 2.7 0 1 0 5.4 0a2.7 2.7 0 1 0 -5.4 0M1470.1 948.6a2.7 2.7 0 1 0 5.4 0a2.7 2.7 0 1 0 -5.4 0M1470.7 947.7a2.7 2.7 0 1 0 5.4 0a2.7 2.7 0 1 0 -5.4 0M1471.3 947.0a2.7 2.7 0 1 0 5.4 0a2.7 2.7 0 1 0 -5.4 0M1471.9 947.8a2.7 2.7 0 1 0 5.4 0a2.7 2.7 0 1 0 -5.4 0M1472.5 953.5a2.7 2.7 0 1 0 5.4 0a2.7 2.7 0 1 0 -5.4 0M1473.1 954.5a2.7 2.7 0 1 0 5.4 0a2.7 2.7 0 1 0 -5.4 0M1473.7 948.9a2.7 2.7 0 1 0 5.4 0a2.7 2.7 0 1 0 -5.4 0M1474.3 950.5a2.7 2.7 0 1 0 5.4 0a2.7 2.7 0 1 0 -5.4 0M1474.9 948.8a2.7 2.7 0 1 0 5.4 0a2.7 2.7 0 1 0 -5.4 0M1475.5 952.8a2.7 2.7 0 1 0 5.4 0a2.7 2.7 0 1 0 -5.4 0M1476.1 953.5a2.7 2.7 0 1 0 5.4 0a2.7 2.7 0 1 0 -5.4 0M1476.7 948.5a2.7 2.7 0 1 0 5.4 0a2.7 2.7 0 1 0 -5.4 0M1477.2 948.0a2.7 2.7 0 1 0 5.4 0a2.7 2.7 0 1 0 -5.4 0M1477.8 943.7a2.7 2.7 0 1 0 5.4 0a2.7 2.7 0 1 0 -5.4 0M1478.4 944.7a2.7 2.7 0 1 0 5.4 0a2.7 2.7 0 1 0 -5.4 0M1479.0 946.4a2.7 2.7 0 1 0 5.4 0a2.7 2.7 0 1 0 -5.4 0M1479.6 948.0a2.7 2.7 0 1 0 5.4 0a2.7 2.7 0 1 0 -5.4 0M1480.2 948.5a2.7 2.7 0 1 0 5.4 0a2.7 2.7 0 1 0 -5.4 0M1480.8 946.4a2.7 2.7 0 1 0 5.4 0a2.7 2.7 0 1 0 -5.4 0M1481.4 943.1a2.7 2.7 0 1 0 5.4 0a2.7 2.7 0 1 0 -5.4 0M1482.0 944.6a2.7 2.7 0 1 0 5.4 0a2.7 2.7 0 1 0 -5.4 0M1482.6 943.1a2.7 2.7 0 1 0 5.4 0a2.7 2.7 0 1 0 -5.4 0M1483.2 949.6a2.7 2.7 0 1 0 5.4 0a2.7 2.7 0 1 0 -5.4 0M1483.8 953.5a2.7 2.7 0 1 0 5.4 0a2.7 2.7 0 1 0 -5.4 0M1484.3 955.4a2.7 2.7 0 1 0 5.4 0a2.7 2.7 0 1 0 -5.4 0M1484.9 949.7a2.7 2.7 0 1 0 5.4 0a2.7 2.7 0 1 0 -5.4 0M1485.5 952.8a2.7 2.7 0 1 0 5.4 0a2.7 2.7 0 1 0 -5.4 0M1486.1 949.3a2.7 2.7 0 1 0 5.4 0a2.7 2.7 0 1 0 -5.4 0M1486.7 944.8a2.7 2.7 0 1 0 5.4 0a2.7 2.7 0 1 0 -5.4 0M1487.3 949.6a2.7 2.7 0 1 0 5.4 0a2.7 2.7 0 1 0 -5.4 0M1487.9 950.3a2.7 2.7 0 1 0 5.4 0a2.7 2.7 0 1 0 -5.4 0M1488.5 944.2a2.7 2.7 0 1 0 5.4 0a2.7 2.7 0 1 0 -5.4 0M1489.1 949.9a2.7 2.7 0 1 0 5.4 0a2.7 2.7 0 1 0 -5.4 0M1489.7 949.2a2.7 2.7 0 1 0 5.4 0a2.7 2.7 0 1 0 -5.4 0M1490.3 952.1a2.7 2.7 0 1 0 5.4 0a2.7 2.7 0 1 0 -5.4 0M1490.9 948.3a2.7 2.7 0 1 0 5.4 0a2.7 2.7 0 1 0 -5.4 0M1491.4 947.9a2.7 2.7 0 1 0 5.4 0a2.7 2.7 0 1 0 -5.4 0M1492.0 953.2a2.7 2.7 0 1 0 5.4 0a2.7 2.7 0 1 0 -5.4 0M1492.6 950.0a2.7 2.7 0 1 0 5.4 0a2.7 2.7 0 1 0 -5.4 0M1493.2 953.7a2.7 2.7 0 1 0 5.4 0a2.7 2.7 0 1 0 -5.4 0M1493.8 948.6a2.7 2.7 0 1 0 5.4 0a2.7 2.7 0 1 0 -5.4 0M1494.4 952.7a2.7 2.7 0 1 0 5.4 0a2.7 2.7 0 1 0 -5.4 0M1495.0 955.3a2.7 2.7 0 1 0 5.4 0a2.7 2.7 0 1 0 -5.4 0M1495.6 954.6a2.7 2.7 0 1 0 5.4 0a2.7 2.7 0 1 0 -5.4 0M1496.2 952.9a2.7 2.7 0 1 0 5.4 0a2.7 2.7 0 1 0 -5.4 0M1496.8 947.7a2.7 2.7 0 1 0 5.4 0a2.7 2.7 0 1 0 -5.4 0M1497.4 951.8a2.7 2.7 0 1 0 5.4 0a2.7 2.7 0 1 0 -5.4 0M1498.0 949.7a2.7 2.7 0 1 0 5.4 0a2.7 2.7 0 1 0 -5.4 0M1498.5 953.4a2.7 2.7 0 1 0 5.4 0a2.7 2.7 0 1 0 -5.4 0M1499.1 949.4a2.7 2.7 0 1 0 5.4 0a2.7 2.7 0 1 0 -5.4 0M1499.7 953.4a2.7 2.7 0 1 0 5.4 0a2.7 2.7 0 1 0 -5.4 0M1500.3 950.0a2.7 2.7 0 1 0 5.4 0a2.7 2.7 0 1 0 -5.4 0M1500.9 953.6a2.7 2.7 0 1 0 5.4 0a2.7 2.7 0 1 0 -5.4 0M1501.5 955.5a2.7 2.7 0 1 0 5.4 0a2.7 2.7 0 1 0 -5.4 0M1502.1 953.1a2.7 2.7 0 1 0 5.4 0a2.7 2.7 0 1 0 -5.4 0M1502.7 950.6a2.7 2.7 0 1 0 5.4 0a2.7 2.7 0 1 0 -5.4 0M1503.3 952.1a2.7 2.7 0 1 0 5.4 0a2.7 2.7 0 1 0 -5.4 0M1503.9 950.4a2.7 2.7 0 1 0 5.4 0a2.7 2.7 0 1 0 -5.4 0M1504.5 953.5a2.7 2.7 0 1 0 5.4 0a2.7 2.7 0 1 0 -5.4 0M1505.0 955.6a2.7 2.7 0 1 0 5.4 0a2.7 2.7 0 1 0 -5.4 0M1505.6 954.5a2.7 2.7 0 1 0 5.4 0a2.7 2.7 0 1 0 -5.4 0M1506.2 949.3a2.7 2.7 0 1 0 5.4 0a2.7 2.7 0 1 0 -5.4 0M1506.8 949.1a2.7 2.7 0 1 0 5.4 0a2.7 2.7 0 1 0 -5.4 0M1507.4 950.5a2.7 2.7 0 1 0 5.4 0a2.7 2.7 0 1 0 -5.4 0M1508.0 952.2a2.7 2.7 0 1 0 5.4 0a2.7 2.7 0 1 0 -5.4 0M1508.6 948.2a2.7 2.7 0 1 0 5.4 0a2.7 2.7 0 1 0 -5.4 0M1509.2 951.7a2.7 2.7 0 1 0 5.4 0a2.7 2.7 0 1 0 -5.4 0M1509.8 945.7a2.7 2.7 0 1 0 5.4 0a2.7 2.7 0 1 0 -5.4 0M1510.4 943.4a2.7 2.7 0 1 0 5.4 0a2.7 2.7 0 1 0 -5.4 0M1511.0 945.9a2.7 2.7 0 1 0 5.4 0a2.7 2.7 0 1 0 -5.4 0M1511.6 948.4a2.7 2.7 0 1 0 5.4 0a2.7 2.7 0 1 0 -5.4 0M1512.1 946.5a2.7 2.7 0 1 0 5.4 0a2.7 2.7 0 1 0 -5.4 0M1512.7 949.2a2.7 2.7 0 1 0 5.4 0a2.7 2.7 0 1 0 -5.4 0M1513.3 946.7a2.7 2.7 0 1 0 5.4 0a2.7 2.7 0 1 0 -5.4 0M1513.9 948.7a2.7 2.7 0 1 0 5.4 0a2.7 2.7 0 1 0 -5.4 0M1514.5 953.2a2.7 2.7 0 1 0 5.4 0a2.7 2.7 0 1 0 -5.4 0M1515.1 955.3a2.7 2.7 0 1 0 5.4 0a2.7 2.7 0 1 0 -5.4 0M1515.7 954.8a2.7 2.7 0 1 0 5.4 0a2.7 2.7 0 1 0 -5.4 0M1516.3 955.9a2.7 2.7 0 1 0 5.4 0a2.7 2.7 0 1 0 -5.4 0M1516.9 949.2a2.7 2.7 0 1 0 5.4 0a2.7 2.7 0 1 0 -5.4 0M1517.5 951.2a2.7 2.7 0 1 0 5.4 0a2.7 2.7 0 1 0 -5.4 0M1518.1 952.2a2.7 2.7 0 1 0 5.4 0a2.7 2.7 0 1 0 -5.4 0M1518.7 954.0a2.7 2.7 0 1 0 5.4 0a2.7 2.7 0 1 0 -5.4 0M1519.2 954.0a2.7 2.7 0 1 0 5.4 0a2.7 2.7 0 1 0 -5.4 0M1519.8 946.7a2.7 2.7 0 1 0 5.4 0a2.7 2.7 0 1 0 -5.4 0M1520.4 950.4a2.7 2.7 0 1 0 5.4 0a2.7 2.7 0 1 0 -5.4 0M1521.0 951.6a2.7 2.7 0 1 0 5.4 0a2.7 2.7 0 1 0 -5.4 0M1521.6 955.1a2.7 2.7 0 1 0 5.4 0a2.7 2.7 0 1 0 -5.4 0M1522.2 952.6a2.7 2.7 0 1 0 5.4 0a2.7 2.7 0 1 0 -5.4 0M1522.8 953.8a2.7 2.7 0 1 0 5.4 0a2.7 2.7 0 1 0 -5.4 0M1523.4 956.1a2.7 2.7 0 1 0 5.4 0a2.7 2.7 0 1 0 -5.4 0M1524.0 956.5a2.7 2.7 0 1 0 5.4 0a2.7 2.7 0 1 0 -5.4 0M1524.6 957.0a2.7 2.7 0 1 0 5.4 0a2.7 2.7 0 1 0 -5.4 0M1525.2 955.5a2.7 2.7 0 1 0 5.4 0a2.7 2.7 0 1 0 -5.4 0M1525.8 951.8a2.7 2.7 0 1 0 5.4 0a2.7 2.7 0 1 0 -5.4 0M1526.3 947.8a2.7 2.7 0 1 0 5.4 0a2.7 2.7 0 1 0 -5.4 0M1526.9 945.8a2.7 2.7 0 1 0 5.4 0a2.7 2.7 0 1 0 -5.4 0M1527.5 948.9a2.7 2.7 0 1 0 5.4 0a2.7 2.7 0 1 0 -5.4 0M1528.1 946.5a2.7 2.7 0 1 0 5.4 0a2.7 2.7 0 1 0 -5.4 0M1528.7 949.0a2.7 2.7 0 1 0 5.4 0a2.7 2.7 0 1 0 -5.4 0M1529.3 954.4a2.7 2.7 0 1 0 5.4 0a2.7 2.7 0 1 0 -5.4 0M1529.9 954.4a2.7 2.7 0 1 0 5.4 0a2.7 2.7 0 1 0 -5.4 0M1530.5 955.7a2.7 2.7 0 1 0 5.4 0a2.7 2.7 0 1 0 -5.4 0M1531.1 956.3a2.7 2.7 0 1 0 5.4 0a2.7 2.7 0 1 0 -5.4 0M1531.7 956.3a2.7 2.7 0 1 0 5.4 0a2.7 2.7 0 1 0 -5.4 0M1532.3 955.9a2.7 2.7 0 1 0 5.4 0a2.7 2.7 0 1 0 -5.4 0M1532.8 955.9a2.7 2.7 0 1 0 5.4 0a2.7 2.7 0 1 0 -5.4 0M1533.4 955.8a2.7 2.7 0 1 0 5.4 0a2.7 2.7 0 1 0 -5.4 0M1534.0 956.3a2.7 2.7 0 1 0 5.4 0a2.7 2.7 0 1 0 -5.4 0M1534.6 956.6a2.7 2.7 0 1 0 5.4 0a2.7 2.7 0 1 0 -5.4 0M1535.2 956.8a2.7 2.7 0 1 0 5.4 0a2.7 2.7 0 1 0 -5.4 0M1535.8 956.5a2.7 2.7 0 1 0 5.4 0a2.7 2.7 0 1 0 -5.4 0M1536.4 956.2a2.7 2.7 0 1 0 5.4 0a2.7 2.7 0 1 0 -5.4 0M1537.0 956.2a2.7 2.7 0 1 0 5.4 0a2.7 2.7 0 1 0 -5.4 0M1537.6 955.9a2.7 2.7 0 1 0 5.4 0a2.7 2.7 0 1 0 -5.4 0M1538.2 956.0a2.7 2.7 0 1 0 5.4 0a2.7 2.7 0 1 0 -5.4 0M1538.8 955.9a2.7 2.7 0 1 0 5.4 0a2.7 2.7 0 1 0 -5.4 0M1539.4 955.8a2.7 2.7 0 1 0 5.4 0a2.7 2.7 0 1 0 -5.4 0M1539.9 956.4a2.7 2.7 0 1 0 5.4 0a2.7 2.7 0 1 0 -5.4 0M1540.5 956.1a2.7 2.7 0 1 0 5.4 0a2.7 2.7 0 1 0 -5.4 0M1541.1 955.8a2.7 2.7 0 1 0 5.4 0a2.7 2.7 0 1 0 -5.4 0M1541.7 956.0a2.7 2.7 0 1 0 5.4 0a2.7 2.7 0 1 0 -5.4 0M1542.3 956.1a2.7 2.7 0 1 0 5.4 0a2.7 2.7 0 1 0 -5.4 0M1542.9 955.8a2.7 2.7 0 1 0 5.4 0a2.7 2.7 0 1 0 -5.4 0M1543.5 955.8a2.7 2.7 0 1 0 5.4 0a2.7 2.7 0 1 0 -5.4 0M1544.1 956.4a2.7 2.7 0 1 0 5.4 0a2.7 2.7 0 1 0 -5.4 0M1544.7 956.0a2.7 2.7 0 1 0 5.4 0a2.7 2.7 0 1 0 -5.4 0M1545.3 956.0a2.7 2.7 0 1 0 5.4 0a2.7 2.7 0 1 0 -5.4 0M1545.9 956.5a2.7 2.7 0 1 0 5.4 0a2.7 2.7 0 1 0 -5.4 0M1546.5 956.2a2.7 2.7 0 1 0 5.4 0a2.7 2.7 0 1 0 -5.4 0M1547.0 956.0a2.7 2.7 0 1 0 5.4 0a2.7 2.7 0 1 0 -5.4 0M1547.6 956.1a2.7 2.7 0 1 0 5.4 0a2.7 2.7 0 1 0 -5.4 0M1548.2 956.1a2.7 2.7 0 1 0 5.4 0a2.7 2.7 0 1 0 -5.4 0M1548.8 955.7a2.7 2.7 0 1 0 5.4 0a2.7 2.7 0 1 0 -5.4 0M1549.4 955.6a2.7 2.7 0 1 0 5.4 0a2.7 2.7 0 1 0 -5.4 0M1550.0 956.3a2.7 2.7 0 1 0 5.4 0a2.7 2.7 0 1 0 -5.4 0M1550.6 955.9a2.7 2.7 0 1 0 5.4 0a2.7 2.7 0 1 0 -5.4 0M1551.2 956.1a2.7 2.7 0 1 0 5.4 0a2.7 2.7 0 1 0 -5.4 0M1551.8 956.4a2.7 2.7 0 1 0 5.4 0a2.7 2.7 0 1 0 -5.4 0M1552.4 956.6a2.7 2.7 0 1 0 5.4 0a2.7 2.7 0 1 0 -5.4 0M1553.0 956.8a2.7 2.7 0 1 0 5.4 0a2.7 2.7 0 1 0 -5.4 0M1553.6 956.0a2.7 2.7 0 1 0 5.4 0a2.7 2.7 0 1 0 -5.4 0M1554.1 955.7a2.7 2.7 0 1 0 5.4 0a2.7 2.7 0 1 0 -5.4 0M1554.7 955.6a2.7 2.7 0 1 0 5.4 0a2.7 2.7 0 1 0 -5.4 0M1555.3 956.1a2.7 2.7 0 1 0 5.4 0a2.7 2.7 0 1 0 -5.4 0M1555.9 956.1a2.7 2.7 0 1 0 5.4 0a2.7 2.7 0 1 0 -5.4 0M1556.5 956.7a2.7 2.7 0 1 0 5.4 0a2.7 2.7 0 1 0 -5.4 0M1557.1 956.5a2.7 2.7 0 1 0 5.4 0a2.7 2.7 0 1 0 -5.4 0M1557.7 956.7a2.7 2.7 0 1 0 5.4 0a2.7 2.7 0 1 0 -5.4 0M1558.3 956.7a2.7 2.7 0 1 0 5.4 0a2.7 2.7 0 1 0 -5.4 0M1558.9 956.9a2.7 2.7 0 1 0 5.4 0a2.7 2.7 0 1 0 -5.4 0M1559.5 956.3a2.7 2.7 0 1 0 5.4 0a2.7 2.7 0 1 0 -5.4 0M1560.1 955.7a2.7 2.7 0 1 0 5.4 0a2.7 2.7 0 1 0 -5.4 0M1560.7 955.6a2.7 2.7 0 1 0 5.4 0a2.7 2.7 0 1 0 -5.4 0M1561.2 955.9a2.7 2.7 0 1 0 5.4 0a2.7 2.7 0 1 0 -5.4 0M1561.8 955.6a2.7 2.7 0 1 0 5.4 0a2.7 2.7 0 1 0 -5.4 0M1562.4 956.0a2.7 2.7 0 1 0 5.4 0a2.7 2.7 0 1 0 -5.4 0M1563.0 956.3a2.7 2.7 0 1 0 5.4 0a2.7 2.7 0 1 0 -5.4 0M1563.6 956.6a2.7 2.7 0 1 0 5.4 0a2.7 2.7 0 1 0 -5.4 0M1564.2 956.6a2.7 2.7 0 1 0 5.4 0a2.7 2.7 0 1 0 -5.4 0M1564.8 956.7a2.7 2.7 0 1 0 5.4 0a2.7 2.7 0 1 0 -5.4 0M1565.4 956.5a2.7 2.7 0 1 0 5.4 0a2.7 2.7 0 1 0 -5.4 0M1566.0 956.5a2.7 2.7 0 1 0 5.4 0a2.7 2.7 0 1 0 -5.4 0M1566.6 955.9a2.7 2.7 0 1 0 5.4 0a2.7 2.7 0 1 0 -5.4 0M1567.2 955.9a2.7 2.7 0 1 0 5.4 0a2.7 2.7 0 1 0 -5.4 0M1567.7 949.5a2.7 2.7 0 1 0 5.4 0a2.7 2.7 0 1 0 -5.4 0M1568.3 941.4a2.7 2.7 0 1 0 5.4 0a2.7 2.7 0 1 0 -5.4 0M1568.9 933.4a2.7 2.7 0 1 0 5.4 0a2.7 2.7 0 1 0 -5.4 0M1569.5 925.3a2.7 2.7 0 1 0 5.4 0a2.7 2.7 0 1 0 -5.4 0M1570.1 930.7a2.7 2.7 0 1 0 5.4 0a2.7 2.7 0 1 0 -5.4 0M1570.7 910.2a2.7 2.7 0 1 0 5.4 0a2.7 2.7 0 1 0 -5.4 0M1571.3 913.4a2.7 2.7 0 1 0 5.4 0a2.7 2.7 0 1 0 -5.4 0M1571.9 922.5a2.7 2.7 0 1 0 5.4 0a2.7 2.7 0 1 0 -5.4 0M1572.5 890.4a2.7 2.7 0 1 0 5.4 0a2.7 2.7 0 1 0 -5.4 0M1573.1 890.4a2.7 2.7 0 1 0 5.4 0a2.7 2.7 0 1 0 -5.4 0M1573.7 895.6a2.7 2.7 0 1 0 5.4 0a2.7 2.7 0 1 0 -5.4 0M1574.3 921.2a2.7 2.7 0 1 0 5.4 0a2.7 2.7 0 1 0 -5.4 0M1574.8 932.2a2.7 2.7 0 1 0 5.4 0a2.7 2.7 0 1 0 -5.4 0M1575.4 921.1a2.7 2.7 0 1 0 5.4 0a2.7 2.7 0 1 0 -5.4 0M1576.0 886.4a2.7 2.7 0 1 0 5.4 0a2.7 2.7 0 1 0 -5.4 0M1576.6 897.0a2.7 2.7 0 1 0 5.4 0a2.7 2.7 0 1 0 -5.4 0M1577.2 919.8a2.7 2.7 0 1 0 5.4 0a2.7 2.7 0 1 0 -5.4 0M1577.8 921.8a2.7 2.7 0 1 0 5.4 0a2.7 2.7 0 1 0 -5.4 0M1578.4 929.5a2.7 2.7 0 1 0 5.4 0a2.7 2.7 0 1 0 -5.4 0M1579.0 910.4a2.7 2.7 0 1 0 5.4 0a2.7 2.7 0 1 0 -5.4 0M1579.6 863.2a2.7 2.7 0 1 0 5.4 0a2.7 2.7 0 1 0 -5.4 0M1580.2 852.8a2.7 2.7 0 1 0 5.4 0a2.7 2.7 0 1 0 -5.4 0M1580.8 878.8a2.7 2.7 0 1 0 5.4 0a2.7 2.7 0 1 0 -5.4 0M1581.4 934.4a2.7 2.7 0 1 0 5.4 0a2.7 2.7 0 1 0 -5.4 0M1581.9 887.0a2.7 2.7 0 1 0 5.4 0a2.7 2.7 0 1 0 -5.4 0M1582.5 895.7a2.7 2.7 0 1 0 5.4 0a2.7 2.7 0 1 0 -5.4 0M1583.1 876.2a2.7 2.7 0 1 0 5.4 0a2.7 2.7 0 1 0 -5.4 0M1583.7 907.5a2.7 2.7 0 1 0 5.4 0a2.7 2.7 0 1 0 -5.4 0M1584.3 915.9a2.7 2.7 0 1 0 5.4 0a2.7 2.7 0 1 0 -5.4 0M1584.9 888.0a2.7 2.7 0 1 0 5.4 0a2.7 2.7 0 1 0 -5.4 0M1585.5 885.6a2.7 2.7 0 1 0 5.4 0a2.7 2.7 0 1 0 -5.4 0M1586.1 923.9a2.7 2.7 0 1 0 5.4 0a2.7 2.7 0 1 0 -5.4 0M1586.7 902.7a2.7 2.7 0 1 0 5.4 0a2.7 2.7 0 1 0 -5.4 0M1587.3 908.6a2.7 2.7 0 1 0 5.4 0a2.7 2.7 0 1 0 -5.4 0M1587.9 921.8a2.7 2.7 0 1 0 5.4 0a2.7 2.7 0 1 0 -5.4 0M1588.5 911.0a2.7 2.7 0 1 0 5.4 0a2.7 2.7 0 1 0 -5.4 0M1589.0 908.0a2.7 2.7 0 1 0 5.4 0a2.7 2.7 0 1 0 -5.4 0M1589.6 930.9a2.7 2.7 0 1 0 5.4 0a2.7 2.7 0 1 0 -5.4 0M1590.2 932.0a2.7 2.7 0 1 0 5.4 0a2.7 2.7 0 1 0 -5.4 0M1590.8 920.9a2.7 2.7 0 1 0 5.4 0a2.7 2.7 0 1 0 -5.4 0M1591.4 924.4a2.7 2.7 0 1 0 5.4 0a2.7 2.7 0 1 0 -5.4 0M1592.0 926.8a2.7 2.7 0 1 0 5.4 0a2.7 2.7 0 1 0 -5.4 0M1592.6 941.7a2.7 2.7 0 1 0 5.4 0a2.7 2.7 0 1 0 -5.4 0M1593.2 943.6a2.7 2.7 0 1 0 5.4 0a2.7 2.7 0 1 0 -5.4 0M1593.8 927.5a2.7 2.7 0 1 0 5.4 0a2.7 2.7 0 1 0 -5.4 0M1594.4 939.3a2.7 2.7 0 1 0 5.4 0a2.7 2.7 0 1 0 -5.4 0M1595.0 921.4a2.7 2.7 0 1 0 5.4 0a2.7 2.7 0 1 0 -5.4 0M1595.6 936.8a2.7 2.7 0 1 0 5.4 0a2.7 2.7 0 1 0 -5.4 0M1596.1 922.7a2.7 2.7 0 1 0 5.4 0a2.7 2.7 0 1 0 -5.4 0M1596.7 921.1a2.7 2.7 0 1 0 5.4 0a2.7 2.7 0 1 0 -5.4 0M1597.3 905.0a2.7 2.7 0 1 0 5.4 0a2.7 2.7 0 1 0 -5.4 0M1597.9 917.6a2.7 2.7 0 1 0 5.4 0a2.7 2.7 0 1 0 -5.4 0M1598.5 878.3a2.7 2.7 0 1 0 5.4 0a2.7 2.7 0 1 0 -5.4 0M1599.1 866.4a2.7 2.7 0 1 0 5.4 0a2.7 2.7 0 1 0 -5.4 0M1599.7 899.5a2.7 2.7 0 1 0 5.4 0a2.7 2.7 0 1 0 -5.4 0M1600.3 867.1a2.7 2.7 0 1 0 5.4 0a2.7 2.7 0 1 0 -5.4 0M1600.9 897.5a2.7 2.7 0 1 0 5.4 0a2.7 2.7 0 1 0 -5.4 0M1601.5 900.0a2.7 2.7 0 1 0 5.4 0a2.7 2.7 0 1 0 -5.4 0M1602.1 906.8a2.7 2.7 0 1 0 5.4 0a2.7 2.7 0 1 0 -5.4 0M1602.6 893.1a2.7 2.7 0 1 0 5.4 0a2.7 2.7 0 1 0 -5.4 0M1603.2 916.4a2.7 2.7 0 1 0 5.4 0a2.7 2.7 0 1 0 -5.4 0M1603.8 921.2a2.7 2.7 0 1 0 5.4 0a2.7 2.7 0 1 0 -5.4 0M1604.4 900.3a2.7 2.7 0 1 0 5.4 0a2.7 2.7 0 1 0 -5.4 0M1605.0 879.6a2.7 2.7 0 1 0 5.4 0a2.7 2.7 0 1 0 -5.4 0M1605.6 889.7a2.7 2.7 0 1 0 5.4 0a2.7 2.7 0 1 0 -5.4 0M1606.2 865.6a2.7 2.7 0 1 0 5.4 0a2.7 2.7 0 1 0 -5.4 0M1606.8 865.6a2.7 2.7 0 1 0 5.4 0a2.7 2.7 0 1 0 -5.4 0M1607.4 897.5a2.7 2.7 0 1 0 5.4 0a2.7 2.7 0 1 0 -5.4 0M1608.0 914.0a2.7 2.7 0 1 0 5.4 0a2.7 2.7 0 1 0 -5.4 0M1608.6 909.1a2.7 2.7 0 1 0 5.4 0a2.7 2.7 0 1 0 -5.4 0M1609.2 924.7a2.7 2.7 0 1 0 5.4 0a2.7 2.7 0 1 0 -5.4 0M1609.7 903.4a2.7 2.7 0 1 0 5.4 0a2.7 2.7 0 1 0 -5.4 0M1610.3 926.8a2.7 2.7 0 1 0 5.4 0a2.7 2.7 0 1 0 -5.4 0M1610.9 934.6a2.7 2.7 0 1 0 5.4 0a2.7 2.7 0 1 0 -5.4 0M1611.5 942.8a2.7 2.7 0 1 0 5.4 0a2.7 2.7 0 1 0 -5.4 0M1612.1 951.2a2.7 2.7 0 1 0 5.4 0a2.7 2.7 0 1 0 -5.4 0M1612.7 904.4a2.7 2.7 0 1 0 5.4 0a2.7 2.7 0 1 0 -5.4 0M1613.3 886.4a2.7 2.7 0 1 0 5.4 0a2.7 2.7 0 1 0 -5.4 0M1613.9 864.7a2.7 2.7 0 1 0 5.4 0a2.7 2.7 0 1 0 -5.4 0M1614.5 902.8a2.7 2.7 0 1 0 5.4 0a2.7 2.7 0 1 0 -5.4 0M1615.1 884.4a2.7 2.7 0 1 0 5.4 0a2.7 2.7 0 1 0 -5.4 0M1615.7 880.1a2.7 2.7 0 1 0 5.4 0a2.7 2.7 0 1 0 -5.4 0M1616.3 899.2a2.7 2.7 0 1 0 5.4 0a2.7 2.7 0 1 0 -5.4 0M1616.8 923.2a2.7 2.7 0 1 0 5.4 0a2.7 2.7 0 1 0 -5.4 0M1617.4 928.4a2.7 2.7 0 1 0 5.4 0a2.7 2.7 0 1 0 -5.4 0M1618.0 884.0a2.7 2.7 0 1 0 5.4 0a2.7 2.7 0 1 0 -5.4 0M1618.6 864.2a2.7 2.7 0 1 0 5.4 0a2.7 2.7 0 1 0 -5.4 0M1619.2 888.1a2.7 2.7 0 1 0 5.4 0a2.7 2.7 0 1 0 -5.4 0M1619.8 869.9a2.7 2.7 0 1 0 5.4 0a2.7 2.7 0 1 0 -5.4 0M1620.4 916.8a2.7 2.7 0 1 0 5.4 0a2.7 2.7 0 1 0 -5.4 0M1621.0 918.7a2.7 2.7 0 1 0 5.4 0a2.7 2.7 0 1 0 -5.4 0M1621.6 931.6a2.7 2.7 0 1 0 5.4 0a2.7 2.7 0 1 0 -5.4 0M1622.2 890.2a2.7 2.7 0 1 0 5.4 0a2.7 2.7 0 1 0 -5.4 0M1622.8 901.7a2.7 2.7 0 1 0 5.4 0a2.7 2.7 0 1 0 -5.4 0M1623.4 881.8a2.7 2.7 0 1 0 5.4 0a2.7 2.7 0 1 0 -5.4 0M1623.9 923.5a2.7 2.7 0 1 0 5.4 0a2.7 2.7 0 1 0 -5.4 0M1624.5 883.2a2.7 2.7 0 1 0 5.4 0a2.7 2.7 0 1 0 -5.4 0M1625.1 872.6a2.7 2.7 0 1 0 5.4 0a2.7 2.7 0 1 0 -5.4 0M1625.7 897.6a2.7 2.7 0 1 0 5.4 0a2.7 2.7 0 1 0 -5.4 0M1626.3 864.4a2.7 2.7 0 1 0 5.4 0a2.7 2.7 0 1 0 -5.4 0M1626.9 899.0a2.7 2.7 0 1 0 5.4 0a2.7 2.7 0 1 0 -5.4 0M1627.5 912.5a2.7 2.7 0 1 0 5.4 0a2.7 2.7 0 1 0 -5.4 0M1628.1 939.6a2.7 2.7 0 1 0 5.4 0a2.7 2.7 0 1 0 -5.4 0M1628.7 889.1a2.7 2.7 0 1 0 5.4 0a2.7 2.7 0 1 0 -5.4 0M1629.3 852.6a2.7 2.7 0 1 0 5.4 0a2.7 2.7 0 1 0 -5.4 0M1629.9 892.1a2.7 2.7 0 1 0 5.4 0a2.7 2.7 0 1 0 -5.4 0M1630.5 849.3a2.7 2.7 0 1 0 5.4 0a2.7 2.7 0 1 0 -5.4 0M1631.0 876.1a2.7 2.7 0 1 0 5.4 0a2.7 2.7 0 1 0 -5.4 0M1631.6 886.1a2.7 2.7 0 1 0 5.4 0a2.7 2.7 0 1 0 -5.4 0M1632.2 842.6a2.7 2.7 0 1 0 5.4 0a2.7 2.7 0 1 0 -5.4 0M1632.8 839.7a2.7 2.7 0 1 0 5.4 0a2.7 2.7 0 1 0 -5.4 0M1633.4 844.7a2.7 2.7 0 1 0 5.4 0a2.7 2.7 0 1 0 -5.4 0M1634.0 854.2a2.7 2.7 0 1 0 5.4 0a2.7 2.7 0 1 0 -5.4 0M1634.6 890.7a2.7 2.7 0 1 0 5.4 0a2.7 2.7 0 1 0 -5.4 0M1635.2 874.2a2.7 2.7 0 1 0 5.4 0a2.7 2.7 0 1 0 -5.4 0M1635.8 844.4a2.7 2.7 0 1 0 5.4 0a2.7 2.7 0 1 0 -5.4 0M1636.4 831.9a2.7 2.7 0 1 0 5.4 0a2.7 2.7 0 1 0 -5.4 0M1637.0 863.2a2.7 2.7 0 1 0 5.4 0a2.7 2.7 0 1 0 -5.4 0M1637.5 940.2a2.7 2.7 0 1 0 5.4 0a2.7 2.7 0 1 0 -5.4 0M1638.1 908.5a2.7 2.7 0 1 0 5.4 0a2.7 2.7 0 1 0 -5.4 0M1638.7 926.1a2.7 2.7 0 1 0 5.4 0a2.7 2.7 0 1 0 -5.4 0M1639.3 942.5a2.7 2.7 0 1 0 5.4 0a2.7 2.7 0 1 0 -5.4 0M1639.9 925.6a2.7 2.7 0 1 0 5.4 0a2.7 2.7 0 1 0 -5.4 0M1640.5 937.5a2.7 2.7 0 1 0 5.4 0a2.7 2.7 0 1 0 -5.4 0M1641.1 930.2a2.7 2.7 0 1 0 5.4 0a2.7 2.7 0 1 0 -5.4 0M1641.7 924.0a2.7 2.7 0 1 0 5.4 0a2.7 2.7 0 1 0 -5.4 0M1642.3 925.8a2.7 2.7 0 1 0 5.4 0a2.7 2.7 0 1 0 -5.4 0M1642.9 924.2a2.7 2.7 0 1 0 5.4 0a2.7 2.7 0 1 0 -5.4 0M1643.5 932.8a2.7 2.7 0 1 0 5.4 0a2.7 2.7 0 1 0 -5.4 0M1644.1 935.5a2.7 2.7 0 1 0 5.4 0a2.7 2.7 0 1 0 -5.4 0M1644.6 946.2a2.7 2.7 0 1 0 5.4 0a2.7 2.7 0 1 0 -5.4 0M1645.2 952.1a2.7 2.7 0 1 0 5.4 0a2.7 2.7 0 1 0 -5.4 0M1645.8 951.5a2.7 2.7 0 1 0 5.4 0a2.7 2.7 0 1 0 -5.4 0M1646.4 953.7a2.7 2.7 0 1 0 5.4 0a2.7 2.7 0 1 0 -5.4 0M1647.0 955.3a2.7 2.7 0 1 0 5.4 0a2.7 2.7 0 1 0 -5.4 0M1647.6 955.8a2.7 2.7 0 1 0 5.4 0a2.7 2.7 0 1 0 -5.4 0M1648.2 955.4a2.7 2.7 0 1 0 5.4 0a2.7 2.7 0 1 0 -5.4 0M1648.8 955.5a2.7 2.7 0 1 0 5.4 0a2.7 2.7 0 1 0 -5.4 0M1649.4 955.1a2.7 2.7 0 1 0 5.4 0a2.7 2.7 0 1 0 -5.4 0M1650.0 956.0a2.7 2.7 0 1 0 5.4 0a2.7 2.7 0 1 0 -5.4 0M1650.6 956.4a2.7 2.7 0 1 0 5.4 0a2.7 2.7 0 1 0 -5.4 0M1651.2 955.2a2.7 2.7 0 1 0 5.4 0a2.7 2.7 0 1 0 -5.4 0M1651.7 954.5a2.7 2.7 0 1 0 5.4 0a2.7 2.7 0 1 0 -5.4 0M1652.3 954.3a2.7 2.7 0 1 0 5.4 0a2.7 2.7 0 1 0 -5.4 0M1652.9 955.0a2.7 2.7 0 1 0 5.4 0a2.7 2.7 0 1 0 -5.4 0M1653.5 954.0a2.7 2.7 0 1 0 5.4 0a2.7 2.7 0 1 0 -5.4 0M1654.1 954.1a2.7 2.7 0 1 0 5.4 0a2.7 2.7 0 1 0 -5.4 0M1654.7 955.2a2.7 2.7 0 1 0 5.4 0a2.7 2.7 0 1 0 -5.4 0M1655.3 955.9a2.7 2.7 0 1 0 5.4 0a2.7 2.7 0 1 0 -5.4 0M1655.9 947.6a2.7 2.7 0 1 0 5.4 0a2.7 2.7 0 1 0 -5.4 0M1656.5 929.0a2.7 2.7 0 1 0 5.4 0a2.7 2.7 0 1 0 -5.4 0M1657.1 933.3a2.7 2.7 0 1 0 5.4 0a2.7 2.7 0 1 0 -5.4 0M1657.7 911.7a2.7 2.7 0 1 0 5.4 0a2.7 2.7 0 1 0 -5.4 0M1658.3 918.1a2.7 2.7 0 1 0 5.4 0a2.7 2.7 0 1 0 -5.4 0M1658.8 898.7a2.7 2.7 0 1 0 5.4 0a2.7 2.7 0 1 0 -5.4 0M1659.4 922.8a2.7 2.7 0 1 0 5.4 0a2.7 2.7 0 1 0 -5.4 0M1660.0 920.6a2.7 2.7 0 1 0 5.4 0a2.7 2.7 0 1 0 -5.4 0M1660.6 908.1a2.7 2.7 0 1 0 5.4 0a2.7 2.7 0 1 0 -5.4 0M1661.2 923.4a2.7 2.7 0 1 0 5.4 0a2.7 2.7 0 1 0 -5.4 0M1661.8 920.6a2.7 2.7 0 1 0 5.4 0a2.7 2.7 0 1 0 -5.4 0M1662.4 923.7a2.7 2.7 0 1 0 5.4 0a2.7 2.7 0 1 0 -5.4 0M1663.0 925.2a2.7 2.7 0 1 0 5.4 0a2.7 2.7 0 1 0 -5.4 0M1663.6 924.2a2.7 2.7 0 1 0 5.4 0a2.7 2.7 0 1 0 -5.4 0M1664.2 899.8a2.7 2.7 0 1 0 5.4 0a2.7 2.7 0 1 0 -5.4 0M1664.8 910.4a2.7 2.7 0 1 0 5.4 0a2.7 2.7 0 1 0 -5.4 0M1665.4 898.5a2.7 2.7 0 1 0 5.4 0a2.7 2.7 0 1 0 -5.4 0M1665.9 926.4a2.7 2.7 0 1 0 5.4 0a2.7 2.7 0 1 0 -5.4 0M1666.5 922.4a2.7 2.7 0 1 0 5.4 0a2.7 2.7 0 1 0 -5.4 0M1667.1 921.0a2.7 2.7 0 1 0 5.4 0a2.7 2.7 0 1 0 -5.4 0M1667.7 917.8a2.7 2.7 0 1 0 5.4 0a2.7 2.7 0 1 0 -5.4 0M1668.3 935.6a2.7 2.7 0 1 0 5.4 0a2.7 2.7 0 1 0 -5.4 0M1668.9 918.3a2.7 2.7 0 1 0 5.4 0a2.7 2.7 0 1 0 -5.4 0M1669.5 933.1a2.7 2.7 0 1 0 5.4 0a2.7 2.7 0 1 0 -5.4 0M1670.1 929.0a2.7 2.7 0 1 0 5.4 0a2.7 2.7 0 1 0 -5.4 0M1670.7 936.3a2.7 2.7 0 1 0 5.4 0a2.7 2.7 0 1 0 -5.4 0M1671.3 924.5a2.7 2.7 0 1 0 5.4 0a2.7 2.7 0 1 0 -5.4 0M1671.9 935.7a2.7 2.7 0 1 0 5.4 0a2.7 2.7 0 1 0 -5.4 0M1672.4 911.1a2.7 2.7 0 1 0 5.4 0a2.7 2.7 0 1 0 -5.4 0M1673.0 925.4a2.7 2.7 0 1 0 5.4 0a2.7 2.7 0 1 0 -5.4 0M1673.6 897.7a2.7 2.7 0 1 0 5.4 0a2.7 2.7 0 1 0 -5.4 0M1674.2 905.1a2.7 2.7 0 1 0 5.4 0a2.7 2.7 0 1 0 -5.4 0M1674.8 886.6a2.7 2.7 0 1 0 5.4 0a2.7 2.7 0 1 0 -5.4 0M1675.4 886.8a2.7 2.7 0 1 0 5.4 0a2.7 2.7 0 1 0 -5.4 0M1676.0 887.0a2.7 2.7 0 1 0 5.4 0a2.7 2.7 0 1 0 -5.4 0M1676.6 887.3a2.7 2.7 0 1 0 5.4 0a2.7 2.7 0 1 0 -5.4 0M1677.2 899.2a2.7 2.7 0 1 0 5.4 0a2.7 2.7 0 1 0 -5.4 0M1677.8 893.0a2.7 2.7 0 1 0 5.4 0a2.7 2.7 0 1 0 -5.4 0M1678.4 920.3a2.7 2.7 0 1 0 5.4 0a2.7 2.7 0 1 0 -5.4 0M1679.0 923.0a2.7 2.7 0 1 0 5.4 0a2.7 2.7 0 1 0 -5.4 0M1679.5 939.1a2.7 2.7 0 1 0 5.4 0a2.7 2.7 0 1 0 -5.4 0M1680.1 930.2a2.7 2.7 0 1 0 5.4 0a2.7 2.7 0 1 0 -5.4 0M1680.7 945.7a2.7 2.7 0 1 0 5.4 0a2.7 2.7 0 1 0 -5.4 0M1681.3 938.1a2.7 2.7 0 1 0 5.4 0a2.7 2.7 0 1 0 -5.4 0M1681.9 935.5a2.7 2.7 0 1 0 5.4 0a2.7 2.7 0 1 0 -5.4 0M1682.5 937.7a2.7 2.7 0 1 0 5.4 0a2.7 2.7 0 1 0 -5.4 0M1683.1 931.6a2.7 2.7 0 1 0 5.4 0a2.7 2.7 0 1 0 -5.4 0M1683.7 931.9a2.7 2.7 0 1 0 5.4 0a2.7 2.7 0 1 0 -5.4 0M1684.3 930.9a2.7 2.7 0 1 0 5.4 0a2.7 2.7 0 1 0 -5.4 0M1684.9 928.3a2.7 2.7 0 1 0 5.4 0a2.7 2.7 0 1 0 -5.4 0M1685.5 943.4a2.7 2.7 0 1 0 5.4 0a2.7 2.7 0 1 0 -5.4 0M1686.1 931.4a2.7 2.7 0 1 0 5.4 0a2.7 2.7 0 1 0 -5.4 0M1686.6 906.2a2.7 2.7 0 1 0 5.4 0a2.7 2.7 0 1 0 -5.4 0M1687.2 906.8a2.7 2.7 0 1 0 5.4 0a2.7 2.7 0 1 0 -5.4 0M1687.8 905.4a2.7 2.7 0 1 0 5.4 0a2.7 2.7 0 1 0 -5.4 0M1688.4 925.4a2.7 2.7 0 1 0 5.4 0a2.7 2.7 0 1 0 -5.4 0M1689.0 936.7a2.7 2.7 0 1 0 5.4 0a2.7 2.7 0 1 0 -5.4 0M1689.6 916.3a2.7 2.7 0 1 0 5.4 0a2.7 2.7 0 1 0 -5.4 0M1690.2 893.3a2.7 2.7 0 1 0 5.4 0a2.7 2.7 0 1 0 -5.4 0M1690.8 870.3a2.7 2.7 0 1 0 5.4 0a2.7 2.7 0 1 0 -5.4 0M1691.4 873.0a2.7 2.7 0 1 0 5.4 0a2.7 2.7 0 1 0 -5.4 0M1692.0 873.6a2.7 2.7 0 1 0 5.4 0a2.7 2.7 0 1 0 -5.4 0M1692.6 834.0a2.7 2.7 0 1 0 5.4 0a2.7 2.7 0 1 0 -5.4 0M1693.2 828.9a2.7 2.7 0 1 0 5.4 0a2.7 2.7 0 1 0 -5.4 0M1693.7 824.3a2.7 2.7 0 1 0 5.4 0a2.7 2.7 0 1 0 -5.4 0M1694.3 864.4a2.7 2.7 0 1 0 5.4 0a2.7 2.7 0 1 0 -5.4 0M1694.9 862.0a2.7 2.7 0 1 0 5.4 0a2.7 2.7 0 1 0 -5.4 0M1695.5 819.0a2.7 2.7 0 1 0 5.4 0a2.7 2.7 0 1 0 -5.4 0M1696.1 806.3a2.7 2.7 0 1 0 5.4 0a2.7 2.7 0 1 0 -5.4 0M1696.7 865.2a2.7 2.7 0 1 0 5.4 0a2.7 2.7 0 1 0 -5.4 0M1697.3 830.6a2.7 2.7 0 1 0 5.4 0a2.7 2.7 0 1 0 -5.4 0M1697.9 794.3a2.7 2.7 0 1 0 5.4 0a2.7 2.7 0 1 0 -5.4 0M1698.5 790.0a2.7 2.7 0 1 0 5.4 0a2.7 2.7 0 1 0 -5.4 0M1699.1 804.9a2.7 2.7 0 1 0 5.4 0a2.7 2.7 0 1 0 -5.4 0M1699.7 846.1a2.7 2.7 0 1 0 5.4 0a2.7 2.7 0 1 0 -5.4 0M1700.3 837.4a2.7 2.7 0 1 0 5.4 0a2.7 2.7 0 1 0 -5.4 0M1700.8 875.5a2.7 2.7 0 1 0 5.4 0a2.7 2.7 0 1 0 -5.4 0M1701.4 882.6a2.7 2.7 0 1 0 5.4 0a2.7 2.7 0 1 0 -5.4 0M1702.0 838.0a2.7 2.7 0 1 0 5.4 0a2.7 2.7 0 1 0 -5.4 0M1702.6 860.1a2.7 2.7 0 1 0 5.4 0a2.7 2.7 0 1 0 -5.4 0M1703.2 874.7a2.7 2.7 0 1 0 5.4 0a2.7 2.7 0 1 0 -5.4 0M1703.8 833.4a2.7 2.7 0 1 0 5.4 0a2.7 2.7 0 1 0 -5.4 0M1704.4 780.9a2.7 2.7 0 1 0 5.4 0a2.7 2.7 0 1 0 -5.4 0M1705.0 781.8a2.7 2.7 0 1 0 5.4 0a2.7 2.7 0 1 0 -5.4 0M1705.6 831.7a2.7 2.7 0 1 0 5.4 0a2.7 2.7 0 1 0 -5.4 0M1706.2 802.4a2.7 2.7 0 1 0 5.4 0a2.7 2.7 0 1 0 -5.4 0M1706.8 750.6a2.7 2.7 0 1 0 5.4 0a2.7 2.7 0 1 0 -5.4 0M1707.3 727.6a2.7 2.7 0 1 0 5.4 0a2.7 2.7 0 1 0 -5.4 0M1707.9 766.1a2.7 2.7 0 1 0 5.4 0a2.7 2.7 0 1 0 -5.4 0M1708.5 781.2a2.7 2.7 0 1 0 5.4 0a2.7 2.7 0 1 0 -5.4 0M1709.1 752.0a2.7 2.7 0 1 0 5.4 0a2.7 2.7 0 1 0 -5.4 0M1709.7 724.0a2.7 2.7 0 1 0 5.4 0a2.7 2.7 0 1 0 -5.4 0M1710.3 729.8a2.7 2.7 0 1 0 5.4 0a2.7 2.7 0 1 0 -5.4 0M1710.9 738.3a2.7 2.7 0 1 0 5.4 0a2.7 2.7 0 1 0 -5.4 0M1711.5 775.8a2.7 2.7 0 1 0 5.4 0a2.7 2.7 0 1 0 -5.4 0M1712.1 825.9a2.7 2.7 0 1 0 5.4 0a2.7 2.7 0 1 0 -5.4 0M1712.7 785.5a2.7 2.7 0 1 0 5.4 0a2.7 2.7 0 1 0 -5.4 0M1713.3 773.0a2.7 2.7 0 1 0 5.4 0a2.7 2.7 0 1 0 -5.4 0M1713.9 810.9a2.7 2.7 0 1 0 5.4 0a2.7 2.7 0 1 0 -5.4 0M1714.4 767.5a2.7 2.7 0 1 0 5.4 0a2.7 2.7 0 1 0 -5.4 0M1715.0 820.8a2.7 2.7 0 1 0 5.4 0a2.7 2.7 0 1 0 -5.4 0M1715.6 706.8a2.7 2.7 0 1 0 5.4 0a2.7 2.7 0 1 0 -5.4 0M1716.2 679.0a2.7 2.7 0 1 0 5.4 0a2.7 2.7 0 1 0 -5.4 0M1716.8 748.5a2.7 2.7 0 1 0 5.4 0a2.7 2.7 0 1 0 -5.4 0M1717.4 760.4a2.7 2.7 0 1 0 5.4 0a2.7 2.7 0 1 0 -5.4 0M1718.0 808.7a2.7 2.7 0 1 0 5.4 0a2.7 2.7 0 1 0 -5.4 0M1718.6 822.5a2.7 2.7 0 1 0 5.4 0a2.7 2.7 0 1 0 -5.4 0M1719.2 847.1a2.7 2.7 0 1 0 5.4 0a2.7 2.7 0 1 0 -5.4 0M1719.8 773.0a2.7 2.7 0 1 0 5.4 0a2.7 2.7 0 1 0 -5.4 0M1720.4 790.0a2.7 2.7 0 1 0 5.4 0a2.7 2.7 0 1 0 -5.4 0M1721.0 845.7a2.7 2.7 0 1 0 5.4 0a2.7 2.7 0 1 0 -5.4 0M1721.5 815.3a2.7 2.7 0 1 0 5.4 0a2.7 2.7 0 1 0 -5.4 0M1722.1 788.9a2.7 2.7 0 1 0 5.4 0a2.7 2.7 0 1 0 -5.4 0M1722.7 736.2a2.7 2.7 0 1 0 5.4 0a2.7 2.7 0 1 0 -5.4 0M1723.3 796.1a2.7 2.7 0 1 0 5.4 0a2.7 2.7 0 1 0 -5.4 0M1723.9 849.9a2.7 2.7 0 1 0 5.4 0a2.7 2.7 0 1 0 -5.4 0M1724.5 839.3a2.7 2.7 0 1 0 5.4 0a2.7 2.7 0 1 0 -5.4 0M1725.1 870.5a2.7 2.7 0 1 0 5.4 0a2.7 2.7 0 1 0 -5.4 0M1725.7 889.7a2.7 2.7 0 1 0 5.4 0a2.7 2.7 0 1 0 -5.4 0M1726.3 806.9a2.7 2.7 0 1 0 5.4 0a2.7 2.7 0 1 0 -5.4 0M1726.9 842.0a2.7 2.7 0 1 0 5.4 0a2.7 2.7 0 1 0 -5.4 0M1727.5 827.4a2.7 2.7 0 1 0 5.4 0a2.7 2.7 0 1 0 -5.4 0M1728.1 783.5a2.7 2.7 0 1 0 5.4 0a2.7 2.7 0 1 0 -5.4 0M1728.6 820.0a2.7 2.7 0 1 0 5.4 0a2.7 2.7 0 1 0 -5.4 0M1729.2 867.2a2.7 2.7 0 1 0 5.4 0a2.7 2.7 0 1 0 -5.4 0M1729.8 814.2a2.7 2.7 0 1 0 5.4 0a2.7 2.7 0 1 0 -5.4 0M1730.4 870.0a2.7 2.7 0 1 0 5.4 0a2.7 2.7 0 1 0 -5.4 0M1731.0 822.1a2.7 2.7 0 1 0 5.4 0a2.7 2.7 0 1 0 -5.4 0M1731.6 794.7a2.7 2.7 0 1 0 5.4 0a2.7 2.7 0 1 0 -5.4 0M1732.2 839.7a2.7 2.7 0 1 0 5.4 0a2.7 2.7 0 1 0 -5.4 0M1732.8 763.1a2.7 2.7 0 1 0 5.4 0a2.7 2.7 0 1 0 -5.4 0M1733.4 741.5a2.7 2.7 0 1 0 5.4 0a2.7 2.7 0 1 0 -5.4 0M1734.0 795.4a2.7 2.7 0 1 0 5.4 0a2.7 2.7 0 1 0 -5.4 0M1734.6 806.9a2.7 2.7 0 1 0 5.4 0a2.7 2.7 0 1 0 -5.4 0M1735.1 813.6a2.7 2.7 0 1 0 5.4 0a2.7 2.7 0 1 0 -5.4 0M1735.7 791.2a2.7 2.7 0 1 0 5.4 0a2.7 2.7 0 1 0 -5.4 0M1736.3 839.0a2.7 2.7 0 1 0 5.4 0a2.7 2.7 0 1 0 -5.4 0M1736.9 787.4a2.7 2.7 0 1 0 5.4 0a2.7 2.7 0 1 0 -5.4 0M1737.5 787.2a2.7 2.7 0 1 0 5.4 0a2.7 2.7 0 1 0 -5.4 0M1738.1 838.8a2.7 2.7 0 1 0 5.4 0a2.7 2.7 0 1 0 -5.4 0M1738.7 828.0a2.7 2.7 0 1 0 5.4 0a2.7 2.7 0 1 0 -5.4 0M1739.3 827.3a2.7 2.7 0 1 0 5.4 0a2.7 2.7 0 1 0 -5.4 0M1739.9 829.9a2.7 2.7 0 1 0 5.4 0a2.7 2.7 0 1 0 -5.4 0M1740.5 873.5a2.7 2.7 0 1 0 5.4 0a2.7 2.7 0 1 0 -5.4 0M1741.1 874.6a2.7 2.7 0 1 0 5.4 0a2.7 2.7 0 1 0 -5.4 0M1741.7 877.5a2.7 2.7 0 1 0 5.4 0a2.7 2.7 0 1 0 -5.4 0M1742.2 894.9a2.7 2.7 0 1 0 5.4 0a2.7 2.7 0 1 0 -5.4 0M1742.8 875.7a2.7 2.7 0 1 0 5.4 0a2.7 2.7 0 1 0 -5.4 0M1743.4 866.6a2.7 2.7 0 1 0 5.4 0a2.7 2.7 0 1 0 -5.4 0M1744.0 889.2a2.7 2.7 0 1 0 5.4 0a2.7 2.7 0 1 0 -5.4 0M1744.6 915.5a2.7 2.7 0 1 0 5.4 0a2.7 2.7 0 1 0 -5.4 0M1745.2 931.9a2.7 2.7 0 1 0 5.4 0a2.7 2.7 0 1 0 -5.4 0M1745.8 937.4a2.7 2.7 0 1 0 5.4 0a2.7 2.7 0 1 0 -5.4 0M1746.4 942.2a2.7 2.7 0 1 0 5.4 0a2.7 2.7 0 1 0 -5.4 0M1747.0 934.8a2.7 2.7 0 1 0 5.4 0a2.7 2.7 0 1 0 -5.4 0M1747.6 944.7a2.7 2.7 0 1 0 5.4 0a2.7 2.7 0 1 0 -5.4 0M1748.2 919.5a2.7 2.7 0 1 0 5.4 0a2.7 2.7 0 1 0 -5.4 0M1748.8 903.2a2.7 2.7 0 1 0 5.4 0a2.7 2.7 0 1 0 -5.4 0M1749.3 928.9a2.7 2.7 0 1 0 5.4 0a2.7 2.7 0 1 0 -5.4 0M1749.9 927.3a2.7 2.7 0 1 0 5.4 0a2.7 2.7 0 1 0 -5.4 0M1750.5 901.1a2.7 2.7 0 1 0 5.4 0a2.7 2.7 0 1 0 -5.4 0M1751.1 929.0a2.7 2.7 0 1 0 5.4 0a2.7 2.7 0 1 0 -5.4 0M1751.7 896.7a2.7 2.7 0 1 0 5.4 0a2.7 2.7 0 1 0 -5.4 0M1752.3 925.3a2.7 2.7 0 1 0 5.4 0a2.7 2.7 0 1 0 -5.4 0M1752.9 939.6a2.7 2.7 0 1 0 5.4 0a2.7 2.7 0 1 0 -5.4 0M1753.5 907.7a2.7 2.7 0 1 0 5.4 0a2.7 2.7 0 1 0 -5.4 0M1754.1 901.5a2.7 2.7 0 1 0 5.4 0a2.7 2.7 0 1 0 -5.4 0M1754.7 898.2a2.7 2.7 0 1 0 5.4 0a2.7 2.7 0 1 0 -5.4 0M1755.3 927.5a2.7 2.7 0 1 0 5.4 0a2.7 2.7 0 1 0 -5.4 0M1755.9 905.6a2.7 2.7 0 1 0 5.4 0a2.7 2.7 0 1 0 -5.4 0M1756.4 919.0a2.7 2.7 0 1 0 5.4 0a2.7 2.7 0 1 0 -5.4 0M1757.0 941.6a2.7 2.7 0 1 0 5.4 0a2.7 2.7 0 1 0 -5.4 0M1757.6 940.3a2.7 2.7 0 1 0 5.4 0a2.7 2.7 0 1 0 -5.4 0M1758.2 935.2a2.7 2.7 0 1 0 5.4 0a2.7 2.7 0 1 0 -5.4 0M1758.8 898.6a2.7 2.7 0 1 0 5.4 0a2.7 2.7 0 1 0 -5.4 0M1759.4 883.7a2.7 2.7 0 1 0 5.4 0a2.7 2.7 0 1 0 -5.4 0M1760.0 924.2a2.7 2.7 0 1 0 5.4 0a2.7 2.7 0 1 0 -5.4 0M1760.6 922.7a2.7 2.7 0 1 0 5.4 0a2.7 2.7 0 1 0 -5.4 0M1761.2 926.8a2.7 2.7 0 1 0 5.4 0a2.7 2.7 0 1 0 -5.4 0M1761.8 918.7a2.7 2.7 0 1 0 5.4 0a2.7 2.7 0 1 0 -5.4 0M1762.4 895.3a2.7 2.7 0 1 0 5.4 0a2.7 2.7 0 1 0 -5.4 0M1763.0 884.5a2.7 2.7 0 1 0 5.4 0a2.7 2.7 0 1 0 -5.4 0M1763.5 926.1a2.7 2.7 0 1 0 5.4 0a2.7 2.7 0 1 0 -5.4 0M1764.1 905.9a2.7 2.7 0 1 0 5.4 0a2.7 2.7 0 1 0 -5.4 0M1764.7 936.1a2.7 2.7 0 1 0 5.4 0a2.7 2.7 0 1 0 -5.4 0M1765.3 927.0a2.7 2.7 0 1 0 5.4 0a2.7 2.7 0 1 0 -5.4 0M1765.9 937.6a2.7 2.7 0 1 0 5.4 0a2.7 2.7 0 1 0 -5.4 0M1766.5 935.2a2.7 2.7 0 1 0 5.4 0a2.7 2.7 0 1 0 -5.4 0M1767.1 938.2a2.7 2.7 0 1 0 5.4 0a2.7 2.7 0 1 0 -5.4 0M1767.7 938.8a2.7 2.7 0 1 0 5.4 0a2.7 2.7 0 1 0 -5.4 0M1768.3 917.8a2.7 2.7 0 1 0 5.4 0a2.7 2.7 0 1 0 -5.4 0M1768.9 936.7a2.7 2.7 0 1 0 5.4 0a2.7 2.7 0 1 0 -5.4 0M1769.5 947.2a2.7 2.7 0 1 0 5.4 0a2.7 2.7 0 1 0 -5.4 0M1770.0 923.6a2.7 2.7 0 1 0 5.4 0a2.7 2.7 0 1 0 -5.4 0M1770.6 913.0a2.7 2.7 0 1 0 5.4 0a2.7 2.7 0 1 0 -5.4 0M1771.2 919.4a2.7 2.7 0 1 0 5.4 0a2.7 2.7 0 1 0 -5.4 0M1771.8 896.1a2.7 2.7 0 1 0 5.4 0a2.7 2.7 0 1 0 -5.4 0M1772.4 887.2a2.7 2.7 0 1 0 5.4 0a2.7 2.7 0 1 0 -5.4 0M1773.0 913.2a2.7 2.7 0 1 0 5.4 0a2.7 2.7 0 1 0 -5.4 0M1773.6 889.7a2.7 2.7 0 1 0 5.4 0a2.7 2.7 0 1 0 -5.4 0M1774.2 906.9a2.7 2.7 0 1 0 5.4 0a2.7 2.7 0 1 0 -5.4 0M1774.8 924.0a2.7 2.7 0 1 0 5.4 0a2.7 2.7 0 1 0 -5.4 0M1775.4 916.3a2.7 2.7 0 1 0 5.4 0a2.7 2.7 0 1 0 -5.4 0M1776.0 898.0a2.7 2.7 0 1 0 5.4 0a2.7 2.7 0 1 0 -5.4 0M1776.6 912.2a2.7 2.7 0 1 0 5.4 0a2.7 2.7 0 1 0 -5.4 0M1777.1 930.8a2.7 2.7 0 1 0 5.4 0a2.7 2.7 0 1 0 -5.4 0M1777.7 910.9a2.7 2.7 0 1 0 5.4 0a2.7 2.7 0 1 0 -5.4 0M1778.3 929.2a2.7 2.7 0 1 0 5.4 0a2.7 2.7 0 1 0 -5.4 0M1778.9 901.6a2.7 2.7 0 1 0 5.4 0a2.7 2.7 0 1 0 -5.4 0M1779.5 927.0a2.7 2.7 0 1 0 5.4 0a2.7 2.7 0 1 0 -5.4 0M1780.1 891.4a2.7 2.7 0 1 0 5.4 0a2.7 2.7 0 1 0 -5.4 0M1780.7 917.6a2.7 2.7 0 1 0 5.4 0a2.7 2.7 0 1 0 -5.4 0M1781.3 897.2a2.7 2.7 0 1 0 5.4 0a2.7 2.7 0 1 0 -5.4 0M1781.9 922.8a2.7 2.7 0 1 0 5.4 0a2.7 2.7 0 1 0 -5.4 0M1782.5 930.1a2.7 2.7 0 1 0 5.4 0a2.7 2.7 0 1 0 -5.4 0M1783.1 915.9a2.7 2.7 0 1 0 5.4 0a2.7 2.7 0 1 0 -5.4 0M1783.7 920.8a2.7 2.7 0 1 0 5.4 0a2.7 2.7 0 1 0 -5.4 0M1784.2 875.6a2.7 2.7 0 1 0 5.4 0a2.7 2.7 0 1 0 -5.4 0M1784.8 915.4a2.7 2.7 0 1 0 5.4 0a2.7 2.7 0 1 0 -5.4 0M1785.4 935.3a2.7 2.7 0 1 0 5.4 0a2.7 2.7 0 1 0 -5.4 0M1786.0 882.1a2.7 2.7 0 1 0 5.4 0a2.7 2.7 0 1 0 -5.4 0M1786.6 869.3a2.7 2.7 0 1 0 5.4 0a2.7 2.7 0 1 0 -5.4 0M1787.2 905.1a2.7 2.7 0 1 0 5.4 0a2.7 2.7 0 1 0 -5.4 0M1787.8 929.7a2.7 2.7 0 1 0 5.4 0a2.7 2.7 0 1 0 -5.4 0M1788.4 922.6a2.7 2.7 0 1 0 5.4 0a2.7 2.7 0 1 0 -5.4 0M1789.0 917.5a2.7 2.7 0 1 0 5.4 0a2.7 2.7 0 1 0 -5.4 0M1789.6 890.6a2.7 2.7 0 1 0 5.4 0a2.7 2.7 0 1 0 -5.4 0M1790.2 879.6a2.7 2.7 0 1 0 5.4 0a2.7 2.7 0 1 0 -5.4 0M1790.8 875.7a2.7 2.7 0 1 0 5.4 0a2.7 2.7 0 1 0 -5.4 0M1791.3 866.6a2.7 2.7 0 1 0 5.4 0a2.7 2.7 0 1 0 -5.4 0M1791.9 870.9a2.7 2.7 0 1 0 5.4 0a2.7 2.7 0 1 0 -5.4 0M1792.5 878.7a2.7 2.7 0 1 0 5.4 0a2.7 2.7 0 1 0 -5.4 0M1793.1 896.2a2.7 2.7 0 1 0 5.4 0a2.7 2.7 0 1 0 -5.4 0M1793.7 884.4a2.7 2.7 0 1 0 5.4 0a2.7 2.7 0 1 0 -5.4 0M1794.3 876.6a2.7 2.7 0 1 0 5.4 0a2.7 2.7 0 1 0 -5.4 0M1794.9 874.9a2.7 2.7 0 1 0 5.4 0a2.7 2.7 0 1 0 -5.4 0M1795.5 882.3a2.7 2.7 0 1 0 5.4 0a2.7 2.7 0 1 0 -5.4 0M1796.1 910.1a2.7 2.7 0 1 0 5.4 0a2.7 2.7 0 1 0 -5.4 0M1796.7 934.9a2.7 2.7 0 1 0 5.4 0a2.7 2.7 0 1 0 -5.4 0M1797.3 915.5a2.7 2.7 0 1 0 5.4 0a2.7 2.7 0 1 0 -5.4 0M1797.9 911.1a2.7 2.7 0 1 0 5.4 0a2.7 2.7 0 1 0 -5.4 0M1798.4 918.8a2.7 2.7 0 1 0 5.4 0a2.7 2.7 0 1 0 -5.4 0M1799.0 913.2a2.7 2.7 0 1 0 5.4 0a2.7 2.7 0 1 0 -5.4 0M1799.6 907.4a2.7 2.7 0 1 0 5.4 0a2.7 2.7 0 1 0 -5.4 0M1800.2 928.2a2.7 2.7 0 1 0 5.4 0a2.7 2.7 0 1 0 -5.4 0M1800.8 910.9a2.7 2.7 0 1 0 5.4 0a2.7 2.7 0 1 0 -5.4 0M1801.4 915.4a2.7 2.7 0 1 0 5.4 0a2.7 2.7 0 1 0 -5.4 0M1802.0 938.7a2.7 2.7 0 1 0 5.4 0a2.7 2.7 0 1 0 -5.4 0M1802.6 945.0a2.7 2.7 0 1 0 5.4 0a2.7 2.7 0 1 0 -5.4 0M1803.2 913.4a2.7 2.7 0 1 0 5.4 0a2.7 2.7 0 1 0 -5.4 0M1803.8 934.9a2.7 2.7 0 1 0 5.4 0a2.7 2.7 0 1 0 -5.4 0M1804.4 926.3a2.7 2.7 0 1 0 5.4 0a2.7 2.7 0 1 0 -5.4 0M1804.9 922.8a2.7 2.7 0 1 0 5.4 0a2.7 2.7 0 1 0 -5.4 0M1805.5 905.1a2.7 2.7 0 1 0 5.4 0a2.7 2.7 0 1 0 -5.4 0M1806.1 916.2a2.7 2.7 0 1 0 5.4 0a2.7 2.7 0 1 0 -5.4 0M1806.7 931.5a2.7 2.7 0 1 0 5.4 0a2.7 2.7 0 1 0 -5.4 0M1807.3 931.2a2.7 2.7 0 1 0 5.4 0a2.7 2.7 0 1 0 -5.4 0M1807.9 942.8a2.7 2.7 0 1 0 5.4 0a2.7 2.7 0 1 0 -5.4 0M1808.5 939.2a2.7 2.7 0 1 0 5.4 0a2.7 2.7 0 1 0 -5.4 0M1809.1 940.6a2.7 2.7 0 1 0 5.4 0a2.7 2.7 0 1 0 -5.4 0M1809.7 951.6a2.7 2.7 0 1 0 5.4 0a2.7 2.7 0 1 0 -5.4 0M1810.3 941.7a2.7 2.7 0 1 0 5.4 0a2.7 2.7 0 1 0 -5.4 0M1810.9 938.7a2.7 2.7 0 1 0 5.4 0a2.7 2.7 0 1 0 -5.4 0M1811.5 942.5a2.7 2.7 0 1 0 5.4 0a2.7 2.7 0 1 0 -5.4 0M1812.0 911.7a2.7 2.7 0 1 0 5.4 0a2.7 2.7 0 1 0 -5.4 0M1812.6 928.8a2.7 2.7 0 1 0 5.4 0a2.7 2.7 0 1 0 -5.4 0M1813.2 929.8a2.7 2.7 0 1 0 5.4 0a2.7 2.7 0 1 0 -5.4 0M1813.8 900.7a2.7 2.7 0 1 0 5.4 0a2.7 2.7 0 1 0 -5.4 0M1814.4 894.5a2.7 2.7 0 1 0 5.4 0a2.7 2.7 0 1 0 -5.4 0M1815.0 910.1a2.7 2.7 0 1 0 5.4 0a2.7 2.7 0 1 0 -5.4 0M1815.6 933.5a2.7 2.7 0 1 0 5.4 0a2.7 2.7 0 1 0 -5.4 0M1816.2 934.8a2.7 2.7 0 1 0 5.4 0a2.7 2.7 0 1 0 -5.4 0M1816.8 915.0a2.7 2.7 0 1 0 5.4 0a2.7 2.7 0 1 0 -5.4 0M1817.4 920.3a2.7 2.7 0 1 0 5.4 0a2.7 2.7 0 1 0 -5.4 0M1818.0 919.8a2.7 2.7 0 1 0 5.4 0a2.7 2.7 0 1 0 -5.4 0M1818.6 907.0a2.7 2.7 0 1 0 5.4 0a2.7 2.7 0 1 0 -5.4 0M1819.1 902.2a2.7 2.7 0 1 0 5.4 0a2.7 2.7 0 1 0 -5.4 0M1819.7 917.2a2.7 2.7 0 1 0 5.4 0a2.7 2.7 0 1 0 -5.4 0M1820.3 924.4a2.7 2.7 0 1 0 5.4 0a2.7 2.7 0 1 0 -5.4 0M1820.9 944.2a2.7 2.7 0 1 0 5.4 0a2.7 2.7 0 1 0 -5.4 0M1821.5 944.5a2.7 2.7 0 1 0 5.4 0a2.7 2.7 0 1 0 -5.4 0M1822.1 944.1a2.7 2.7 0 1 0 5.4 0a2.7 2.7 0 1 0 -5.4 0M1822.7 939.6a2.7 2.7 0 1 0 5.4 0a2.7 2.7 0 1 0 -5.4 0M1823.3 929.1a2.7 2.7 0 1 0 5.4 0a2.7 2.7 0 1 0 -5.4 0M1823.9 913.0a2.7 2.7 0 1 0 5.4 0a2.7 2.7 0 1 0 -5.4 0M1824.5 936.9a2.7 2.7 0 1 0 5.4 0a2.7 2.7 0 1 0 -5.4 0M1825.1 919.6a2.7 2.7 0 1 0 5.4 0a2.7 2.7 0 1 0 -5.4 0M1825.7 937.3a2.7 2.7 0 1 0 5.4 0a2.7 2.7 0 1 0 -5.4 0M1826.2 930.4a2.7 2.7 0 1 0 5.4 0a2.7 2.7 0 1 0 -5.4 0M1826.8 946.4a2.7 2.7 0 1 0 5.4 0a2.7 2.7 0 1 0 -5.4 0M1827.4 935.6a2.7 2.7 0 1 0 5.4 0a2.7 2.7 0 1 0 -5.4 0M1828.0 946.3a2.7 2.7 0 1 0 5.4 0a2.7 2.7 0 1 0 -5.4 0M1828.6 948.1a2.7 2.7 0 1 0 5.4 0a2.7 2.7 0 1 0 -5.4 0M1829.2 946.3a2.7 2.7 0 1 0 5.4 0a2.7 2.7 0 1 0 -5.4 0M1829.8 929.6a2.7 2.7 0 1 0 5.4 0a2.7 2.7 0 1 0 -5.4 0M1830.4 941.7a2.7 2.7 0 1 0 5.4 0a2.7 2.7 0 1 0 -5.4 0M1831.0 936.2a2.7 2.7 0 1 0 5.4 0a2.7 2.7 0 1 0 -5.4 0M1831.6 931.8a2.7 2.7 0 1 0 5.4 0a2.7 2.7 0 1 0 -5.4 0M1832.2 926.4a2.7 2.7 0 1 0 5.4 0a2.7 2.7 0 1 0 -5.4 0M1832.8 939.6a2.7 2.7 0 1 0 5.4 0a2.7 2.7 0 1 0 -5.4 0M1833.3 938.3a2.7 2.7 0 1 0 5.4 0a2.7 2.7 0 1 0 -5.4 0M1833.9 940.0a2.7 2.7 0 1 0 5.4 0a2.7 2.7 0 1 0 -5.4 0M1834.5 938.2a2.7 2.7 0 1 0 5.4 0a2.7 2.7 0 1 0 -5.4 0M1835.1 936.1a2.7 2.7 0 1 0 5.4 0a2.7 2.7 0 1 0 -5.4 0M1835.7 941.4a2.7 2.7 0 1 0 5.4 0a2.7 2.7 0 1 0 -5.4 0M1836.3 942.9a2.7 2.7 0 1 0 5.4 0a2.7 2.7 0 1 0 -5.4 0" fill="#e04a24"/>
</svg><div class="a" style="left:1866px;top:669px;width:33px;height:36px;background:#e8e46e;border-radius:6px 0 0 6px"></div><svg class="a" style="left:1876.5px;top:679.5px" width="16" height="16" viewBox="0 0 16 16"><path d="M1.4 5.8 V1.4 H5.8 M10.2 1.4 H14.6 V5.8 M14.6 10.2 V14.6 H10.2 M5.8 14.6 H1.4 V10.2" stroke="#111" stroke-width="2.8" fill="none"/></svg>
</body></html>
